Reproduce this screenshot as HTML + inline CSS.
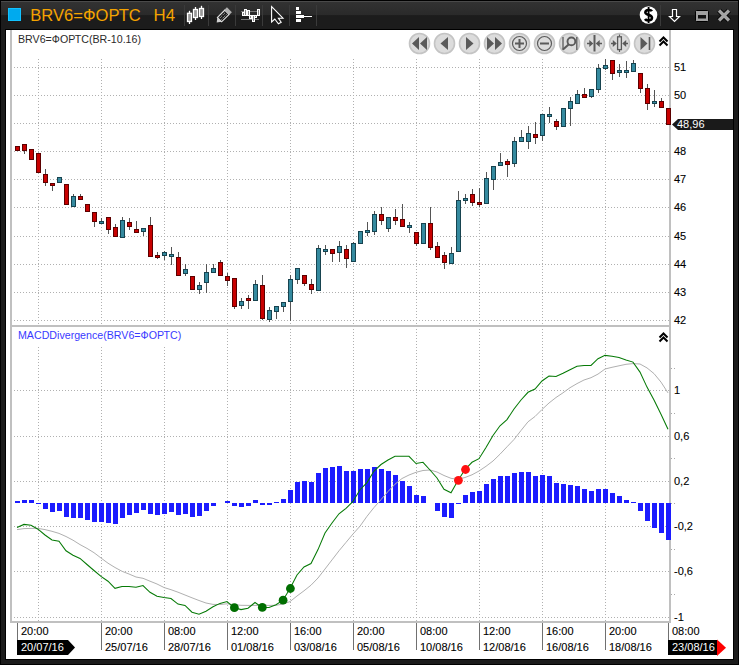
<!DOCTYPE html><html><head><meta charset="utf-8"><style>html,body{margin:0;padding:0;background:#1a1a1a;width:739px;height:665px;overflow:hidden}svg{display:block}text{font-family:"Liberation Sans",sans-serif}</style></head><body>
<svg width="739" height="665" viewBox="0 0 739 665">
<defs><linearGradient id="tg" x1="0" y1="0" x2="0" y2="1"><stop offset="0" stop-color="#333"/><stop offset="0.5" stop-color="#2a2a2a"/><stop offset="0.52" stop-color="#1c1c1c"/><stop offset="1" stop-color="#1c1c1c"/></linearGradient></defs>
<rect x="0" y="0" width="739" height="665" fill="#000"/>
<rect x="1" y="1" width="737" height="663" fill="#1b1b1b"/>
<rect x="1" y="1" width="737" height="28" fill="url(#tg)"/>
<rect x="1" y="1" width="737" height="1" fill="#4a4a4a"/>
<rect x="5" y="29" width="729" height="631" fill="#000"/>
<rect x="6" y="30" width="727" height="629" fill="#fff"/>
<g shape-rendering="crispEdges">
<path d="M11 67h1v1h-1zM14 67h1v1h-1zM17 67h1v1h-1zM20 67h1v1h-1zM23 67h1v1h-1zM26 67h1v1h-1zM29 67h1v1h-1zM32 67h1v1h-1zM35 67h1v1h-1zM38 67h1v1h-1zM41 67h1v1h-1zM44 67h1v1h-1zM47 67h1v1h-1zM50 67h1v1h-1zM53 67h1v1h-1zM56 67h1v1h-1zM59 67h1v1h-1zM62 67h1v1h-1zM65 67h1v1h-1zM68 67h1v1h-1zM71 67h1v1h-1zM74 67h1v1h-1zM77 67h1v1h-1zM80 67h1v1h-1zM83 67h1v1h-1zM86 67h1v1h-1zM89 67h1v1h-1zM92 67h1v1h-1zM95 67h1v1h-1zM98 67h1v1h-1zM101 67h1v1h-1zM104 67h1v1h-1zM107 67h1v1h-1zM110 67h1v1h-1zM113 67h1v1h-1zM116 67h1v1h-1zM119 67h1v1h-1zM122 67h1v1h-1zM125 67h1v1h-1zM128 67h1v1h-1zM131 67h1v1h-1zM134 67h1v1h-1zM137 67h1v1h-1zM140 67h1v1h-1zM143 67h1v1h-1zM146 67h1v1h-1zM149 67h1v1h-1zM152 67h1v1h-1zM155 67h1v1h-1zM158 67h1v1h-1zM161 67h1v1h-1zM164 67h1v1h-1zM167 67h1v1h-1zM170 67h1v1h-1zM173 67h1v1h-1zM176 67h1v1h-1zM179 67h1v1h-1zM182 67h1v1h-1zM185 67h1v1h-1zM188 67h1v1h-1zM191 67h1v1h-1zM194 67h1v1h-1zM197 67h1v1h-1zM200 67h1v1h-1zM203 67h1v1h-1zM206 67h1v1h-1zM209 67h1v1h-1zM212 67h1v1h-1zM215 67h1v1h-1zM218 67h1v1h-1zM221 67h1v1h-1zM224 67h1v1h-1zM227 67h1v1h-1zM230 67h1v1h-1zM233 67h1v1h-1zM236 67h1v1h-1zM239 67h1v1h-1zM242 67h1v1h-1zM245 67h1v1h-1zM248 67h1v1h-1zM251 67h1v1h-1zM254 67h1v1h-1zM257 67h1v1h-1zM260 67h1v1h-1zM263 67h1v1h-1zM266 67h1v1h-1zM269 67h1v1h-1zM272 67h1v1h-1zM275 67h1v1h-1zM278 67h1v1h-1zM281 67h1v1h-1zM284 67h1v1h-1zM287 67h1v1h-1zM290 67h1v1h-1zM293 67h1v1h-1zM296 67h1v1h-1zM299 67h1v1h-1zM302 67h1v1h-1zM305 67h1v1h-1zM308 67h1v1h-1zM311 67h1v1h-1zM314 67h1v1h-1zM317 67h1v1h-1zM320 67h1v1h-1zM323 67h1v1h-1zM326 67h1v1h-1zM329 67h1v1h-1zM332 67h1v1h-1zM335 67h1v1h-1zM338 67h1v1h-1zM341 67h1v1h-1zM344 67h1v1h-1zM347 67h1v1h-1zM350 67h1v1h-1zM353 67h1v1h-1zM356 67h1v1h-1zM359 67h1v1h-1zM362 67h1v1h-1zM365 67h1v1h-1zM368 67h1v1h-1zM371 67h1v1h-1zM374 67h1v1h-1zM377 67h1v1h-1zM380 67h1v1h-1zM383 67h1v1h-1zM386 67h1v1h-1zM389 67h1v1h-1zM392 67h1v1h-1zM395 67h1v1h-1zM398 67h1v1h-1zM401 67h1v1h-1zM404 67h1v1h-1zM407 67h1v1h-1zM410 67h1v1h-1zM413 67h1v1h-1zM416 67h1v1h-1zM419 67h1v1h-1zM422 67h1v1h-1zM425 67h1v1h-1zM428 67h1v1h-1zM431 67h1v1h-1zM434 67h1v1h-1zM437 67h1v1h-1zM440 67h1v1h-1zM443 67h1v1h-1zM446 67h1v1h-1zM449 67h1v1h-1zM452 67h1v1h-1zM455 67h1v1h-1zM458 67h1v1h-1zM461 67h1v1h-1zM464 67h1v1h-1zM467 67h1v1h-1zM470 67h1v1h-1zM473 67h1v1h-1zM476 67h1v1h-1zM479 67h1v1h-1zM482 67h1v1h-1zM485 67h1v1h-1zM488 67h1v1h-1zM491 67h1v1h-1zM494 67h1v1h-1zM497 67h1v1h-1zM500 67h1v1h-1zM503 67h1v1h-1zM506 67h1v1h-1zM509 67h1v1h-1zM512 67h1v1h-1zM515 67h1v1h-1zM518 67h1v1h-1zM521 67h1v1h-1zM524 67h1v1h-1zM527 67h1v1h-1zM530 67h1v1h-1zM533 67h1v1h-1zM536 67h1v1h-1zM539 67h1v1h-1zM542 67h1v1h-1zM545 67h1v1h-1zM548 67h1v1h-1zM551 67h1v1h-1zM554 67h1v1h-1zM557 67h1v1h-1zM560 67h1v1h-1zM563 67h1v1h-1zM566 67h1v1h-1zM569 67h1v1h-1zM572 67h1v1h-1zM575 67h1v1h-1zM578 67h1v1h-1zM581 67h1v1h-1zM584 67h1v1h-1zM587 67h1v1h-1zM590 67h1v1h-1zM593 67h1v1h-1zM596 67h1v1h-1zM599 67h1v1h-1zM602 67h1v1h-1zM605 67h1v1h-1zM608 67h1v1h-1zM611 67h1v1h-1zM614 67h1v1h-1zM617 67h1v1h-1zM620 67h1v1h-1zM623 67h1v1h-1zM626 67h1v1h-1zM629 67h1v1h-1zM632 67h1v1h-1zM635 67h1v1h-1zM638 67h1v1h-1zM641 67h1v1h-1zM644 67h1v1h-1zM647 67h1v1h-1zM650 67h1v1h-1zM653 67h1v1h-1zM656 67h1v1h-1zM659 67h1v1h-1zM662 67h1v1h-1zM665 67h1v1h-1zM668 67h1v1h-1z" fill="#b0b0b0"/>
<path d="M11 95h1v1h-1zM14 95h1v1h-1zM17 95h1v1h-1zM20 95h1v1h-1zM23 95h1v1h-1zM26 95h1v1h-1zM29 95h1v1h-1zM32 95h1v1h-1zM35 95h1v1h-1zM38 95h1v1h-1zM41 95h1v1h-1zM44 95h1v1h-1zM47 95h1v1h-1zM50 95h1v1h-1zM53 95h1v1h-1zM56 95h1v1h-1zM59 95h1v1h-1zM62 95h1v1h-1zM65 95h1v1h-1zM68 95h1v1h-1zM71 95h1v1h-1zM74 95h1v1h-1zM77 95h1v1h-1zM80 95h1v1h-1zM83 95h1v1h-1zM86 95h1v1h-1zM89 95h1v1h-1zM92 95h1v1h-1zM95 95h1v1h-1zM98 95h1v1h-1zM101 95h1v1h-1zM104 95h1v1h-1zM107 95h1v1h-1zM110 95h1v1h-1zM113 95h1v1h-1zM116 95h1v1h-1zM119 95h1v1h-1zM122 95h1v1h-1zM125 95h1v1h-1zM128 95h1v1h-1zM131 95h1v1h-1zM134 95h1v1h-1zM137 95h1v1h-1zM140 95h1v1h-1zM143 95h1v1h-1zM146 95h1v1h-1zM149 95h1v1h-1zM152 95h1v1h-1zM155 95h1v1h-1zM158 95h1v1h-1zM161 95h1v1h-1zM164 95h1v1h-1zM167 95h1v1h-1zM170 95h1v1h-1zM173 95h1v1h-1zM176 95h1v1h-1zM179 95h1v1h-1zM182 95h1v1h-1zM185 95h1v1h-1zM188 95h1v1h-1zM191 95h1v1h-1zM194 95h1v1h-1zM197 95h1v1h-1zM200 95h1v1h-1zM203 95h1v1h-1zM206 95h1v1h-1zM209 95h1v1h-1zM212 95h1v1h-1zM215 95h1v1h-1zM218 95h1v1h-1zM221 95h1v1h-1zM224 95h1v1h-1zM227 95h1v1h-1zM230 95h1v1h-1zM233 95h1v1h-1zM236 95h1v1h-1zM239 95h1v1h-1zM242 95h1v1h-1zM245 95h1v1h-1zM248 95h1v1h-1zM251 95h1v1h-1zM254 95h1v1h-1zM257 95h1v1h-1zM260 95h1v1h-1zM263 95h1v1h-1zM266 95h1v1h-1zM269 95h1v1h-1zM272 95h1v1h-1zM275 95h1v1h-1zM278 95h1v1h-1zM281 95h1v1h-1zM284 95h1v1h-1zM287 95h1v1h-1zM290 95h1v1h-1zM293 95h1v1h-1zM296 95h1v1h-1zM299 95h1v1h-1zM302 95h1v1h-1zM305 95h1v1h-1zM308 95h1v1h-1zM311 95h1v1h-1zM314 95h1v1h-1zM317 95h1v1h-1zM320 95h1v1h-1zM323 95h1v1h-1zM326 95h1v1h-1zM329 95h1v1h-1zM332 95h1v1h-1zM335 95h1v1h-1zM338 95h1v1h-1zM341 95h1v1h-1zM344 95h1v1h-1zM347 95h1v1h-1zM350 95h1v1h-1zM353 95h1v1h-1zM356 95h1v1h-1zM359 95h1v1h-1zM362 95h1v1h-1zM365 95h1v1h-1zM368 95h1v1h-1zM371 95h1v1h-1zM374 95h1v1h-1zM377 95h1v1h-1zM380 95h1v1h-1zM383 95h1v1h-1zM386 95h1v1h-1zM389 95h1v1h-1zM392 95h1v1h-1zM395 95h1v1h-1zM398 95h1v1h-1zM401 95h1v1h-1zM404 95h1v1h-1zM407 95h1v1h-1zM410 95h1v1h-1zM413 95h1v1h-1zM416 95h1v1h-1zM419 95h1v1h-1zM422 95h1v1h-1zM425 95h1v1h-1zM428 95h1v1h-1zM431 95h1v1h-1zM434 95h1v1h-1zM437 95h1v1h-1zM440 95h1v1h-1zM443 95h1v1h-1zM446 95h1v1h-1zM449 95h1v1h-1zM452 95h1v1h-1zM455 95h1v1h-1zM458 95h1v1h-1zM461 95h1v1h-1zM464 95h1v1h-1zM467 95h1v1h-1zM470 95h1v1h-1zM473 95h1v1h-1zM476 95h1v1h-1zM479 95h1v1h-1zM482 95h1v1h-1zM485 95h1v1h-1zM488 95h1v1h-1zM491 95h1v1h-1zM494 95h1v1h-1zM497 95h1v1h-1zM500 95h1v1h-1zM503 95h1v1h-1zM506 95h1v1h-1zM509 95h1v1h-1zM512 95h1v1h-1zM515 95h1v1h-1zM518 95h1v1h-1zM521 95h1v1h-1zM524 95h1v1h-1zM527 95h1v1h-1zM530 95h1v1h-1zM533 95h1v1h-1zM536 95h1v1h-1zM539 95h1v1h-1zM542 95h1v1h-1zM545 95h1v1h-1zM548 95h1v1h-1zM551 95h1v1h-1zM554 95h1v1h-1zM557 95h1v1h-1zM560 95h1v1h-1zM563 95h1v1h-1zM566 95h1v1h-1zM569 95h1v1h-1zM572 95h1v1h-1zM575 95h1v1h-1zM578 95h1v1h-1zM581 95h1v1h-1zM584 95h1v1h-1zM587 95h1v1h-1zM590 95h1v1h-1zM593 95h1v1h-1zM596 95h1v1h-1zM599 95h1v1h-1zM602 95h1v1h-1zM605 95h1v1h-1zM608 95h1v1h-1zM611 95h1v1h-1zM614 95h1v1h-1zM617 95h1v1h-1zM620 95h1v1h-1zM623 95h1v1h-1zM626 95h1v1h-1zM629 95h1v1h-1zM632 95h1v1h-1zM635 95h1v1h-1zM638 95h1v1h-1zM641 95h1v1h-1zM644 95h1v1h-1zM647 95h1v1h-1zM650 95h1v1h-1zM653 95h1v1h-1zM656 95h1v1h-1zM659 95h1v1h-1zM662 95h1v1h-1zM665 95h1v1h-1zM668 95h1v1h-1z" fill="#b0b0b0"/>
<path d="M11 123h1v1h-1zM14 123h1v1h-1zM17 123h1v1h-1zM20 123h1v1h-1zM23 123h1v1h-1zM26 123h1v1h-1zM29 123h1v1h-1zM32 123h1v1h-1zM35 123h1v1h-1zM38 123h1v1h-1zM41 123h1v1h-1zM44 123h1v1h-1zM47 123h1v1h-1zM50 123h1v1h-1zM53 123h1v1h-1zM56 123h1v1h-1zM59 123h1v1h-1zM62 123h1v1h-1zM65 123h1v1h-1zM68 123h1v1h-1zM71 123h1v1h-1zM74 123h1v1h-1zM77 123h1v1h-1zM80 123h1v1h-1zM83 123h1v1h-1zM86 123h1v1h-1zM89 123h1v1h-1zM92 123h1v1h-1zM95 123h1v1h-1zM98 123h1v1h-1zM101 123h1v1h-1zM104 123h1v1h-1zM107 123h1v1h-1zM110 123h1v1h-1zM113 123h1v1h-1zM116 123h1v1h-1zM119 123h1v1h-1zM122 123h1v1h-1zM125 123h1v1h-1zM128 123h1v1h-1zM131 123h1v1h-1zM134 123h1v1h-1zM137 123h1v1h-1zM140 123h1v1h-1zM143 123h1v1h-1zM146 123h1v1h-1zM149 123h1v1h-1zM152 123h1v1h-1zM155 123h1v1h-1zM158 123h1v1h-1zM161 123h1v1h-1zM164 123h1v1h-1zM167 123h1v1h-1zM170 123h1v1h-1zM173 123h1v1h-1zM176 123h1v1h-1zM179 123h1v1h-1zM182 123h1v1h-1zM185 123h1v1h-1zM188 123h1v1h-1zM191 123h1v1h-1zM194 123h1v1h-1zM197 123h1v1h-1zM200 123h1v1h-1zM203 123h1v1h-1zM206 123h1v1h-1zM209 123h1v1h-1zM212 123h1v1h-1zM215 123h1v1h-1zM218 123h1v1h-1zM221 123h1v1h-1zM224 123h1v1h-1zM227 123h1v1h-1zM230 123h1v1h-1zM233 123h1v1h-1zM236 123h1v1h-1zM239 123h1v1h-1zM242 123h1v1h-1zM245 123h1v1h-1zM248 123h1v1h-1zM251 123h1v1h-1zM254 123h1v1h-1zM257 123h1v1h-1zM260 123h1v1h-1zM263 123h1v1h-1zM266 123h1v1h-1zM269 123h1v1h-1zM272 123h1v1h-1zM275 123h1v1h-1zM278 123h1v1h-1zM281 123h1v1h-1zM284 123h1v1h-1zM287 123h1v1h-1zM290 123h1v1h-1zM293 123h1v1h-1zM296 123h1v1h-1zM299 123h1v1h-1zM302 123h1v1h-1zM305 123h1v1h-1zM308 123h1v1h-1zM311 123h1v1h-1zM314 123h1v1h-1zM317 123h1v1h-1zM320 123h1v1h-1zM323 123h1v1h-1zM326 123h1v1h-1zM329 123h1v1h-1zM332 123h1v1h-1zM335 123h1v1h-1zM338 123h1v1h-1zM341 123h1v1h-1zM344 123h1v1h-1zM347 123h1v1h-1zM350 123h1v1h-1zM353 123h1v1h-1zM356 123h1v1h-1zM359 123h1v1h-1zM362 123h1v1h-1zM365 123h1v1h-1zM368 123h1v1h-1zM371 123h1v1h-1zM374 123h1v1h-1zM377 123h1v1h-1zM380 123h1v1h-1zM383 123h1v1h-1zM386 123h1v1h-1zM389 123h1v1h-1zM392 123h1v1h-1zM395 123h1v1h-1zM398 123h1v1h-1zM401 123h1v1h-1zM404 123h1v1h-1zM407 123h1v1h-1zM410 123h1v1h-1zM413 123h1v1h-1zM416 123h1v1h-1zM419 123h1v1h-1zM422 123h1v1h-1zM425 123h1v1h-1zM428 123h1v1h-1zM431 123h1v1h-1zM434 123h1v1h-1zM437 123h1v1h-1zM440 123h1v1h-1zM443 123h1v1h-1zM446 123h1v1h-1zM449 123h1v1h-1zM452 123h1v1h-1zM455 123h1v1h-1zM458 123h1v1h-1zM461 123h1v1h-1zM464 123h1v1h-1zM467 123h1v1h-1zM470 123h1v1h-1zM473 123h1v1h-1zM476 123h1v1h-1zM479 123h1v1h-1zM482 123h1v1h-1zM485 123h1v1h-1zM488 123h1v1h-1zM491 123h1v1h-1zM494 123h1v1h-1zM497 123h1v1h-1zM500 123h1v1h-1zM503 123h1v1h-1zM506 123h1v1h-1zM509 123h1v1h-1zM512 123h1v1h-1zM515 123h1v1h-1zM518 123h1v1h-1zM521 123h1v1h-1zM524 123h1v1h-1zM527 123h1v1h-1zM530 123h1v1h-1zM533 123h1v1h-1zM536 123h1v1h-1zM539 123h1v1h-1zM542 123h1v1h-1zM545 123h1v1h-1zM548 123h1v1h-1zM551 123h1v1h-1zM554 123h1v1h-1zM557 123h1v1h-1zM560 123h1v1h-1zM563 123h1v1h-1zM566 123h1v1h-1zM569 123h1v1h-1zM572 123h1v1h-1zM575 123h1v1h-1zM578 123h1v1h-1zM581 123h1v1h-1zM584 123h1v1h-1zM587 123h1v1h-1zM590 123h1v1h-1zM593 123h1v1h-1zM596 123h1v1h-1zM599 123h1v1h-1zM602 123h1v1h-1zM605 123h1v1h-1zM608 123h1v1h-1zM611 123h1v1h-1zM614 123h1v1h-1zM617 123h1v1h-1zM620 123h1v1h-1zM623 123h1v1h-1zM626 123h1v1h-1zM629 123h1v1h-1zM632 123h1v1h-1zM635 123h1v1h-1zM638 123h1v1h-1zM641 123h1v1h-1zM644 123h1v1h-1zM647 123h1v1h-1zM650 123h1v1h-1zM653 123h1v1h-1zM656 123h1v1h-1zM659 123h1v1h-1zM662 123h1v1h-1zM665 123h1v1h-1zM668 123h1v1h-1z" fill="#b0b0b0"/>
<path d="M11 151h1v1h-1zM14 151h1v1h-1zM17 151h1v1h-1zM20 151h1v1h-1zM23 151h1v1h-1zM26 151h1v1h-1zM29 151h1v1h-1zM32 151h1v1h-1zM35 151h1v1h-1zM38 151h1v1h-1zM41 151h1v1h-1zM44 151h1v1h-1zM47 151h1v1h-1zM50 151h1v1h-1zM53 151h1v1h-1zM56 151h1v1h-1zM59 151h1v1h-1zM62 151h1v1h-1zM65 151h1v1h-1zM68 151h1v1h-1zM71 151h1v1h-1zM74 151h1v1h-1zM77 151h1v1h-1zM80 151h1v1h-1zM83 151h1v1h-1zM86 151h1v1h-1zM89 151h1v1h-1zM92 151h1v1h-1zM95 151h1v1h-1zM98 151h1v1h-1zM101 151h1v1h-1zM104 151h1v1h-1zM107 151h1v1h-1zM110 151h1v1h-1zM113 151h1v1h-1zM116 151h1v1h-1zM119 151h1v1h-1zM122 151h1v1h-1zM125 151h1v1h-1zM128 151h1v1h-1zM131 151h1v1h-1zM134 151h1v1h-1zM137 151h1v1h-1zM140 151h1v1h-1zM143 151h1v1h-1zM146 151h1v1h-1zM149 151h1v1h-1zM152 151h1v1h-1zM155 151h1v1h-1zM158 151h1v1h-1zM161 151h1v1h-1zM164 151h1v1h-1zM167 151h1v1h-1zM170 151h1v1h-1zM173 151h1v1h-1zM176 151h1v1h-1zM179 151h1v1h-1zM182 151h1v1h-1zM185 151h1v1h-1zM188 151h1v1h-1zM191 151h1v1h-1zM194 151h1v1h-1zM197 151h1v1h-1zM200 151h1v1h-1zM203 151h1v1h-1zM206 151h1v1h-1zM209 151h1v1h-1zM212 151h1v1h-1zM215 151h1v1h-1zM218 151h1v1h-1zM221 151h1v1h-1zM224 151h1v1h-1zM227 151h1v1h-1zM230 151h1v1h-1zM233 151h1v1h-1zM236 151h1v1h-1zM239 151h1v1h-1zM242 151h1v1h-1zM245 151h1v1h-1zM248 151h1v1h-1zM251 151h1v1h-1zM254 151h1v1h-1zM257 151h1v1h-1zM260 151h1v1h-1zM263 151h1v1h-1zM266 151h1v1h-1zM269 151h1v1h-1zM272 151h1v1h-1zM275 151h1v1h-1zM278 151h1v1h-1zM281 151h1v1h-1zM284 151h1v1h-1zM287 151h1v1h-1zM290 151h1v1h-1zM293 151h1v1h-1zM296 151h1v1h-1zM299 151h1v1h-1zM302 151h1v1h-1zM305 151h1v1h-1zM308 151h1v1h-1zM311 151h1v1h-1zM314 151h1v1h-1zM317 151h1v1h-1zM320 151h1v1h-1zM323 151h1v1h-1zM326 151h1v1h-1zM329 151h1v1h-1zM332 151h1v1h-1zM335 151h1v1h-1zM338 151h1v1h-1zM341 151h1v1h-1zM344 151h1v1h-1zM347 151h1v1h-1zM350 151h1v1h-1zM353 151h1v1h-1zM356 151h1v1h-1zM359 151h1v1h-1zM362 151h1v1h-1zM365 151h1v1h-1zM368 151h1v1h-1zM371 151h1v1h-1zM374 151h1v1h-1zM377 151h1v1h-1zM380 151h1v1h-1zM383 151h1v1h-1zM386 151h1v1h-1zM389 151h1v1h-1zM392 151h1v1h-1zM395 151h1v1h-1zM398 151h1v1h-1zM401 151h1v1h-1zM404 151h1v1h-1zM407 151h1v1h-1zM410 151h1v1h-1zM413 151h1v1h-1zM416 151h1v1h-1zM419 151h1v1h-1zM422 151h1v1h-1zM425 151h1v1h-1zM428 151h1v1h-1zM431 151h1v1h-1zM434 151h1v1h-1zM437 151h1v1h-1zM440 151h1v1h-1zM443 151h1v1h-1zM446 151h1v1h-1zM449 151h1v1h-1zM452 151h1v1h-1zM455 151h1v1h-1zM458 151h1v1h-1zM461 151h1v1h-1zM464 151h1v1h-1zM467 151h1v1h-1zM470 151h1v1h-1zM473 151h1v1h-1zM476 151h1v1h-1zM479 151h1v1h-1zM482 151h1v1h-1zM485 151h1v1h-1zM488 151h1v1h-1zM491 151h1v1h-1zM494 151h1v1h-1zM497 151h1v1h-1zM500 151h1v1h-1zM503 151h1v1h-1zM506 151h1v1h-1zM509 151h1v1h-1zM512 151h1v1h-1zM515 151h1v1h-1zM518 151h1v1h-1zM521 151h1v1h-1zM524 151h1v1h-1zM527 151h1v1h-1zM530 151h1v1h-1zM533 151h1v1h-1zM536 151h1v1h-1zM539 151h1v1h-1zM542 151h1v1h-1zM545 151h1v1h-1zM548 151h1v1h-1zM551 151h1v1h-1zM554 151h1v1h-1zM557 151h1v1h-1zM560 151h1v1h-1zM563 151h1v1h-1zM566 151h1v1h-1zM569 151h1v1h-1zM572 151h1v1h-1zM575 151h1v1h-1zM578 151h1v1h-1zM581 151h1v1h-1zM584 151h1v1h-1zM587 151h1v1h-1zM590 151h1v1h-1zM593 151h1v1h-1zM596 151h1v1h-1zM599 151h1v1h-1zM602 151h1v1h-1zM605 151h1v1h-1zM608 151h1v1h-1zM611 151h1v1h-1zM614 151h1v1h-1zM617 151h1v1h-1zM620 151h1v1h-1zM623 151h1v1h-1zM626 151h1v1h-1zM629 151h1v1h-1zM632 151h1v1h-1zM635 151h1v1h-1zM638 151h1v1h-1zM641 151h1v1h-1zM644 151h1v1h-1zM647 151h1v1h-1zM650 151h1v1h-1zM653 151h1v1h-1zM656 151h1v1h-1zM659 151h1v1h-1zM662 151h1v1h-1zM665 151h1v1h-1zM668 151h1v1h-1z" fill="#b0b0b0"/>
<path d="M11 179h1v1h-1zM14 179h1v1h-1zM17 179h1v1h-1zM20 179h1v1h-1zM23 179h1v1h-1zM26 179h1v1h-1zM29 179h1v1h-1zM32 179h1v1h-1zM35 179h1v1h-1zM38 179h1v1h-1zM41 179h1v1h-1zM44 179h1v1h-1zM47 179h1v1h-1zM50 179h1v1h-1zM53 179h1v1h-1zM56 179h1v1h-1zM59 179h1v1h-1zM62 179h1v1h-1zM65 179h1v1h-1zM68 179h1v1h-1zM71 179h1v1h-1zM74 179h1v1h-1zM77 179h1v1h-1zM80 179h1v1h-1zM83 179h1v1h-1zM86 179h1v1h-1zM89 179h1v1h-1zM92 179h1v1h-1zM95 179h1v1h-1zM98 179h1v1h-1zM101 179h1v1h-1zM104 179h1v1h-1zM107 179h1v1h-1zM110 179h1v1h-1zM113 179h1v1h-1zM116 179h1v1h-1zM119 179h1v1h-1zM122 179h1v1h-1zM125 179h1v1h-1zM128 179h1v1h-1zM131 179h1v1h-1zM134 179h1v1h-1zM137 179h1v1h-1zM140 179h1v1h-1zM143 179h1v1h-1zM146 179h1v1h-1zM149 179h1v1h-1zM152 179h1v1h-1zM155 179h1v1h-1zM158 179h1v1h-1zM161 179h1v1h-1zM164 179h1v1h-1zM167 179h1v1h-1zM170 179h1v1h-1zM173 179h1v1h-1zM176 179h1v1h-1zM179 179h1v1h-1zM182 179h1v1h-1zM185 179h1v1h-1zM188 179h1v1h-1zM191 179h1v1h-1zM194 179h1v1h-1zM197 179h1v1h-1zM200 179h1v1h-1zM203 179h1v1h-1zM206 179h1v1h-1zM209 179h1v1h-1zM212 179h1v1h-1zM215 179h1v1h-1zM218 179h1v1h-1zM221 179h1v1h-1zM224 179h1v1h-1zM227 179h1v1h-1zM230 179h1v1h-1zM233 179h1v1h-1zM236 179h1v1h-1zM239 179h1v1h-1zM242 179h1v1h-1zM245 179h1v1h-1zM248 179h1v1h-1zM251 179h1v1h-1zM254 179h1v1h-1zM257 179h1v1h-1zM260 179h1v1h-1zM263 179h1v1h-1zM266 179h1v1h-1zM269 179h1v1h-1zM272 179h1v1h-1zM275 179h1v1h-1zM278 179h1v1h-1zM281 179h1v1h-1zM284 179h1v1h-1zM287 179h1v1h-1zM290 179h1v1h-1zM293 179h1v1h-1zM296 179h1v1h-1zM299 179h1v1h-1zM302 179h1v1h-1zM305 179h1v1h-1zM308 179h1v1h-1zM311 179h1v1h-1zM314 179h1v1h-1zM317 179h1v1h-1zM320 179h1v1h-1zM323 179h1v1h-1zM326 179h1v1h-1zM329 179h1v1h-1zM332 179h1v1h-1zM335 179h1v1h-1zM338 179h1v1h-1zM341 179h1v1h-1zM344 179h1v1h-1zM347 179h1v1h-1zM350 179h1v1h-1zM353 179h1v1h-1zM356 179h1v1h-1zM359 179h1v1h-1zM362 179h1v1h-1zM365 179h1v1h-1zM368 179h1v1h-1zM371 179h1v1h-1zM374 179h1v1h-1zM377 179h1v1h-1zM380 179h1v1h-1zM383 179h1v1h-1zM386 179h1v1h-1zM389 179h1v1h-1zM392 179h1v1h-1zM395 179h1v1h-1zM398 179h1v1h-1zM401 179h1v1h-1zM404 179h1v1h-1zM407 179h1v1h-1zM410 179h1v1h-1zM413 179h1v1h-1zM416 179h1v1h-1zM419 179h1v1h-1zM422 179h1v1h-1zM425 179h1v1h-1zM428 179h1v1h-1zM431 179h1v1h-1zM434 179h1v1h-1zM437 179h1v1h-1zM440 179h1v1h-1zM443 179h1v1h-1zM446 179h1v1h-1zM449 179h1v1h-1zM452 179h1v1h-1zM455 179h1v1h-1zM458 179h1v1h-1zM461 179h1v1h-1zM464 179h1v1h-1zM467 179h1v1h-1zM470 179h1v1h-1zM473 179h1v1h-1zM476 179h1v1h-1zM479 179h1v1h-1zM482 179h1v1h-1zM485 179h1v1h-1zM488 179h1v1h-1zM491 179h1v1h-1zM494 179h1v1h-1zM497 179h1v1h-1zM500 179h1v1h-1zM503 179h1v1h-1zM506 179h1v1h-1zM509 179h1v1h-1zM512 179h1v1h-1zM515 179h1v1h-1zM518 179h1v1h-1zM521 179h1v1h-1zM524 179h1v1h-1zM527 179h1v1h-1zM530 179h1v1h-1zM533 179h1v1h-1zM536 179h1v1h-1zM539 179h1v1h-1zM542 179h1v1h-1zM545 179h1v1h-1zM548 179h1v1h-1zM551 179h1v1h-1zM554 179h1v1h-1zM557 179h1v1h-1zM560 179h1v1h-1zM563 179h1v1h-1zM566 179h1v1h-1zM569 179h1v1h-1zM572 179h1v1h-1zM575 179h1v1h-1zM578 179h1v1h-1zM581 179h1v1h-1zM584 179h1v1h-1zM587 179h1v1h-1zM590 179h1v1h-1zM593 179h1v1h-1zM596 179h1v1h-1zM599 179h1v1h-1zM602 179h1v1h-1zM605 179h1v1h-1zM608 179h1v1h-1zM611 179h1v1h-1zM614 179h1v1h-1zM617 179h1v1h-1zM620 179h1v1h-1zM623 179h1v1h-1zM626 179h1v1h-1zM629 179h1v1h-1zM632 179h1v1h-1zM635 179h1v1h-1zM638 179h1v1h-1zM641 179h1v1h-1zM644 179h1v1h-1zM647 179h1v1h-1zM650 179h1v1h-1zM653 179h1v1h-1zM656 179h1v1h-1zM659 179h1v1h-1zM662 179h1v1h-1zM665 179h1v1h-1zM668 179h1v1h-1z" fill="#b0b0b0"/>
<path d="M11 207h1v1h-1zM14 207h1v1h-1zM17 207h1v1h-1zM20 207h1v1h-1zM23 207h1v1h-1zM26 207h1v1h-1zM29 207h1v1h-1zM32 207h1v1h-1zM35 207h1v1h-1zM38 207h1v1h-1zM41 207h1v1h-1zM44 207h1v1h-1zM47 207h1v1h-1zM50 207h1v1h-1zM53 207h1v1h-1zM56 207h1v1h-1zM59 207h1v1h-1zM62 207h1v1h-1zM65 207h1v1h-1zM68 207h1v1h-1zM71 207h1v1h-1zM74 207h1v1h-1zM77 207h1v1h-1zM80 207h1v1h-1zM83 207h1v1h-1zM86 207h1v1h-1zM89 207h1v1h-1zM92 207h1v1h-1zM95 207h1v1h-1zM98 207h1v1h-1zM101 207h1v1h-1zM104 207h1v1h-1zM107 207h1v1h-1zM110 207h1v1h-1zM113 207h1v1h-1zM116 207h1v1h-1zM119 207h1v1h-1zM122 207h1v1h-1zM125 207h1v1h-1zM128 207h1v1h-1zM131 207h1v1h-1zM134 207h1v1h-1zM137 207h1v1h-1zM140 207h1v1h-1zM143 207h1v1h-1zM146 207h1v1h-1zM149 207h1v1h-1zM152 207h1v1h-1zM155 207h1v1h-1zM158 207h1v1h-1zM161 207h1v1h-1zM164 207h1v1h-1zM167 207h1v1h-1zM170 207h1v1h-1zM173 207h1v1h-1zM176 207h1v1h-1zM179 207h1v1h-1zM182 207h1v1h-1zM185 207h1v1h-1zM188 207h1v1h-1zM191 207h1v1h-1zM194 207h1v1h-1zM197 207h1v1h-1zM200 207h1v1h-1zM203 207h1v1h-1zM206 207h1v1h-1zM209 207h1v1h-1zM212 207h1v1h-1zM215 207h1v1h-1zM218 207h1v1h-1zM221 207h1v1h-1zM224 207h1v1h-1zM227 207h1v1h-1zM230 207h1v1h-1zM233 207h1v1h-1zM236 207h1v1h-1zM239 207h1v1h-1zM242 207h1v1h-1zM245 207h1v1h-1zM248 207h1v1h-1zM251 207h1v1h-1zM254 207h1v1h-1zM257 207h1v1h-1zM260 207h1v1h-1zM263 207h1v1h-1zM266 207h1v1h-1zM269 207h1v1h-1zM272 207h1v1h-1zM275 207h1v1h-1zM278 207h1v1h-1zM281 207h1v1h-1zM284 207h1v1h-1zM287 207h1v1h-1zM290 207h1v1h-1zM293 207h1v1h-1zM296 207h1v1h-1zM299 207h1v1h-1zM302 207h1v1h-1zM305 207h1v1h-1zM308 207h1v1h-1zM311 207h1v1h-1zM314 207h1v1h-1zM317 207h1v1h-1zM320 207h1v1h-1zM323 207h1v1h-1zM326 207h1v1h-1zM329 207h1v1h-1zM332 207h1v1h-1zM335 207h1v1h-1zM338 207h1v1h-1zM341 207h1v1h-1zM344 207h1v1h-1zM347 207h1v1h-1zM350 207h1v1h-1zM353 207h1v1h-1zM356 207h1v1h-1zM359 207h1v1h-1zM362 207h1v1h-1zM365 207h1v1h-1zM368 207h1v1h-1zM371 207h1v1h-1zM374 207h1v1h-1zM377 207h1v1h-1zM380 207h1v1h-1zM383 207h1v1h-1zM386 207h1v1h-1zM389 207h1v1h-1zM392 207h1v1h-1zM395 207h1v1h-1zM398 207h1v1h-1zM401 207h1v1h-1zM404 207h1v1h-1zM407 207h1v1h-1zM410 207h1v1h-1zM413 207h1v1h-1zM416 207h1v1h-1zM419 207h1v1h-1zM422 207h1v1h-1zM425 207h1v1h-1zM428 207h1v1h-1zM431 207h1v1h-1zM434 207h1v1h-1zM437 207h1v1h-1zM440 207h1v1h-1zM443 207h1v1h-1zM446 207h1v1h-1zM449 207h1v1h-1zM452 207h1v1h-1zM455 207h1v1h-1zM458 207h1v1h-1zM461 207h1v1h-1zM464 207h1v1h-1zM467 207h1v1h-1zM470 207h1v1h-1zM473 207h1v1h-1zM476 207h1v1h-1zM479 207h1v1h-1zM482 207h1v1h-1zM485 207h1v1h-1zM488 207h1v1h-1zM491 207h1v1h-1zM494 207h1v1h-1zM497 207h1v1h-1zM500 207h1v1h-1zM503 207h1v1h-1zM506 207h1v1h-1zM509 207h1v1h-1zM512 207h1v1h-1zM515 207h1v1h-1zM518 207h1v1h-1zM521 207h1v1h-1zM524 207h1v1h-1zM527 207h1v1h-1zM530 207h1v1h-1zM533 207h1v1h-1zM536 207h1v1h-1zM539 207h1v1h-1zM542 207h1v1h-1zM545 207h1v1h-1zM548 207h1v1h-1zM551 207h1v1h-1zM554 207h1v1h-1zM557 207h1v1h-1zM560 207h1v1h-1zM563 207h1v1h-1zM566 207h1v1h-1zM569 207h1v1h-1zM572 207h1v1h-1zM575 207h1v1h-1zM578 207h1v1h-1zM581 207h1v1h-1zM584 207h1v1h-1zM587 207h1v1h-1zM590 207h1v1h-1zM593 207h1v1h-1zM596 207h1v1h-1zM599 207h1v1h-1zM602 207h1v1h-1zM605 207h1v1h-1zM608 207h1v1h-1zM611 207h1v1h-1zM614 207h1v1h-1zM617 207h1v1h-1zM620 207h1v1h-1zM623 207h1v1h-1zM626 207h1v1h-1zM629 207h1v1h-1zM632 207h1v1h-1zM635 207h1v1h-1zM638 207h1v1h-1zM641 207h1v1h-1zM644 207h1v1h-1zM647 207h1v1h-1zM650 207h1v1h-1zM653 207h1v1h-1zM656 207h1v1h-1zM659 207h1v1h-1zM662 207h1v1h-1zM665 207h1v1h-1zM668 207h1v1h-1z" fill="#b0b0b0"/>
<path d="M11 236h1v1h-1zM14 236h1v1h-1zM17 236h1v1h-1zM20 236h1v1h-1zM23 236h1v1h-1zM26 236h1v1h-1zM29 236h1v1h-1zM32 236h1v1h-1zM35 236h1v1h-1zM38 236h1v1h-1zM41 236h1v1h-1zM44 236h1v1h-1zM47 236h1v1h-1zM50 236h1v1h-1zM53 236h1v1h-1zM56 236h1v1h-1zM59 236h1v1h-1zM62 236h1v1h-1zM65 236h1v1h-1zM68 236h1v1h-1zM71 236h1v1h-1zM74 236h1v1h-1zM77 236h1v1h-1zM80 236h1v1h-1zM83 236h1v1h-1zM86 236h1v1h-1zM89 236h1v1h-1zM92 236h1v1h-1zM95 236h1v1h-1zM98 236h1v1h-1zM101 236h1v1h-1zM104 236h1v1h-1zM107 236h1v1h-1zM110 236h1v1h-1zM113 236h1v1h-1zM116 236h1v1h-1zM119 236h1v1h-1zM122 236h1v1h-1zM125 236h1v1h-1zM128 236h1v1h-1zM131 236h1v1h-1zM134 236h1v1h-1zM137 236h1v1h-1zM140 236h1v1h-1zM143 236h1v1h-1zM146 236h1v1h-1zM149 236h1v1h-1zM152 236h1v1h-1zM155 236h1v1h-1zM158 236h1v1h-1zM161 236h1v1h-1zM164 236h1v1h-1zM167 236h1v1h-1zM170 236h1v1h-1zM173 236h1v1h-1zM176 236h1v1h-1zM179 236h1v1h-1zM182 236h1v1h-1zM185 236h1v1h-1zM188 236h1v1h-1zM191 236h1v1h-1zM194 236h1v1h-1zM197 236h1v1h-1zM200 236h1v1h-1zM203 236h1v1h-1zM206 236h1v1h-1zM209 236h1v1h-1zM212 236h1v1h-1zM215 236h1v1h-1zM218 236h1v1h-1zM221 236h1v1h-1zM224 236h1v1h-1zM227 236h1v1h-1zM230 236h1v1h-1zM233 236h1v1h-1zM236 236h1v1h-1zM239 236h1v1h-1zM242 236h1v1h-1zM245 236h1v1h-1zM248 236h1v1h-1zM251 236h1v1h-1zM254 236h1v1h-1zM257 236h1v1h-1zM260 236h1v1h-1zM263 236h1v1h-1zM266 236h1v1h-1zM269 236h1v1h-1zM272 236h1v1h-1zM275 236h1v1h-1zM278 236h1v1h-1zM281 236h1v1h-1zM284 236h1v1h-1zM287 236h1v1h-1zM290 236h1v1h-1zM293 236h1v1h-1zM296 236h1v1h-1zM299 236h1v1h-1zM302 236h1v1h-1zM305 236h1v1h-1zM308 236h1v1h-1zM311 236h1v1h-1zM314 236h1v1h-1zM317 236h1v1h-1zM320 236h1v1h-1zM323 236h1v1h-1zM326 236h1v1h-1zM329 236h1v1h-1zM332 236h1v1h-1zM335 236h1v1h-1zM338 236h1v1h-1zM341 236h1v1h-1zM344 236h1v1h-1zM347 236h1v1h-1zM350 236h1v1h-1zM353 236h1v1h-1zM356 236h1v1h-1zM359 236h1v1h-1zM362 236h1v1h-1zM365 236h1v1h-1zM368 236h1v1h-1zM371 236h1v1h-1zM374 236h1v1h-1zM377 236h1v1h-1zM380 236h1v1h-1zM383 236h1v1h-1zM386 236h1v1h-1zM389 236h1v1h-1zM392 236h1v1h-1zM395 236h1v1h-1zM398 236h1v1h-1zM401 236h1v1h-1zM404 236h1v1h-1zM407 236h1v1h-1zM410 236h1v1h-1zM413 236h1v1h-1zM416 236h1v1h-1zM419 236h1v1h-1zM422 236h1v1h-1zM425 236h1v1h-1zM428 236h1v1h-1zM431 236h1v1h-1zM434 236h1v1h-1zM437 236h1v1h-1zM440 236h1v1h-1zM443 236h1v1h-1zM446 236h1v1h-1zM449 236h1v1h-1zM452 236h1v1h-1zM455 236h1v1h-1zM458 236h1v1h-1zM461 236h1v1h-1zM464 236h1v1h-1zM467 236h1v1h-1zM470 236h1v1h-1zM473 236h1v1h-1zM476 236h1v1h-1zM479 236h1v1h-1zM482 236h1v1h-1zM485 236h1v1h-1zM488 236h1v1h-1zM491 236h1v1h-1zM494 236h1v1h-1zM497 236h1v1h-1zM500 236h1v1h-1zM503 236h1v1h-1zM506 236h1v1h-1zM509 236h1v1h-1zM512 236h1v1h-1zM515 236h1v1h-1zM518 236h1v1h-1zM521 236h1v1h-1zM524 236h1v1h-1zM527 236h1v1h-1zM530 236h1v1h-1zM533 236h1v1h-1zM536 236h1v1h-1zM539 236h1v1h-1zM542 236h1v1h-1zM545 236h1v1h-1zM548 236h1v1h-1zM551 236h1v1h-1zM554 236h1v1h-1zM557 236h1v1h-1zM560 236h1v1h-1zM563 236h1v1h-1zM566 236h1v1h-1zM569 236h1v1h-1zM572 236h1v1h-1zM575 236h1v1h-1zM578 236h1v1h-1zM581 236h1v1h-1zM584 236h1v1h-1zM587 236h1v1h-1zM590 236h1v1h-1zM593 236h1v1h-1zM596 236h1v1h-1zM599 236h1v1h-1zM602 236h1v1h-1zM605 236h1v1h-1zM608 236h1v1h-1zM611 236h1v1h-1zM614 236h1v1h-1zM617 236h1v1h-1zM620 236h1v1h-1zM623 236h1v1h-1zM626 236h1v1h-1zM629 236h1v1h-1zM632 236h1v1h-1zM635 236h1v1h-1zM638 236h1v1h-1zM641 236h1v1h-1zM644 236h1v1h-1zM647 236h1v1h-1zM650 236h1v1h-1zM653 236h1v1h-1zM656 236h1v1h-1zM659 236h1v1h-1zM662 236h1v1h-1zM665 236h1v1h-1zM668 236h1v1h-1z" fill="#b0b0b0"/>
<path d="M11 264h1v1h-1zM14 264h1v1h-1zM17 264h1v1h-1zM20 264h1v1h-1zM23 264h1v1h-1zM26 264h1v1h-1zM29 264h1v1h-1zM32 264h1v1h-1zM35 264h1v1h-1zM38 264h1v1h-1zM41 264h1v1h-1zM44 264h1v1h-1zM47 264h1v1h-1zM50 264h1v1h-1zM53 264h1v1h-1zM56 264h1v1h-1zM59 264h1v1h-1zM62 264h1v1h-1zM65 264h1v1h-1zM68 264h1v1h-1zM71 264h1v1h-1zM74 264h1v1h-1zM77 264h1v1h-1zM80 264h1v1h-1zM83 264h1v1h-1zM86 264h1v1h-1zM89 264h1v1h-1zM92 264h1v1h-1zM95 264h1v1h-1zM98 264h1v1h-1zM101 264h1v1h-1zM104 264h1v1h-1zM107 264h1v1h-1zM110 264h1v1h-1zM113 264h1v1h-1zM116 264h1v1h-1zM119 264h1v1h-1zM122 264h1v1h-1zM125 264h1v1h-1zM128 264h1v1h-1zM131 264h1v1h-1zM134 264h1v1h-1zM137 264h1v1h-1zM140 264h1v1h-1zM143 264h1v1h-1zM146 264h1v1h-1zM149 264h1v1h-1zM152 264h1v1h-1zM155 264h1v1h-1zM158 264h1v1h-1zM161 264h1v1h-1zM164 264h1v1h-1zM167 264h1v1h-1zM170 264h1v1h-1zM173 264h1v1h-1zM176 264h1v1h-1zM179 264h1v1h-1zM182 264h1v1h-1zM185 264h1v1h-1zM188 264h1v1h-1zM191 264h1v1h-1zM194 264h1v1h-1zM197 264h1v1h-1zM200 264h1v1h-1zM203 264h1v1h-1zM206 264h1v1h-1zM209 264h1v1h-1zM212 264h1v1h-1zM215 264h1v1h-1zM218 264h1v1h-1zM221 264h1v1h-1zM224 264h1v1h-1zM227 264h1v1h-1zM230 264h1v1h-1zM233 264h1v1h-1zM236 264h1v1h-1zM239 264h1v1h-1zM242 264h1v1h-1zM245 264h1v1h-1zM248 264h1v1h-1zM251 264h1v1h-1zM254 264h1v1h-1zM257 264h1v1h-1zM260 264h1v1h-1zM263 264h1v1h-1zM266 264h1v1h-1zM269 264h1v1h-1zM272 264h1v1h-1zM275 264h1v1h-1zM278 264h1v1h-1zM281 264h1v1h-1zM284 264h1v1h-1zM287 264h1v1h-1zM290 264h1v1h-1zM293 264h1v1h-1zM296 264h1v1h-1zM299 264h1v1h-1zM302 264h1v1h-1zM305 264h1v1h-1zM308 264h1v1h-1zM311 264h1v1h-1zM314 264h1v1h-1zM317 264h1v1h-1zM320 264h1v1h-1zM323 264h1v1h-1zM326 264h1v1h-1zM329 264h1v1h-1zM332 264h1v1h-1zM335 264h1v1h-1zM338 264h1v1h-1zM341 264h1v1h-1zM344 264h1v1h-1zM347 264h1v1h-1zM350 264h1v1h-1zM353 264h1v1h-1zM356 264h1v1h-1zM359 264h1v1h-1zM362 264h1v1h-1zM365 264h1v1h-1zM368 264h1v1h-1zM371 264h1v1h-1zM374 264h1v1h-1zM377 264h1v1h-1zM380 264h1v1h-1zM383 264h1v1h-1zM386 264h1v1h-1zM389 264h1v1h-1zM392 264h1v1h-1zM395 264h1v1h-1zM398 264h1v1h-1zM401 264h1v1h-1zM404 264h1v1h-1zM407 264h1v1h-1zM410 264h1v1h-1zM413 264h1v1h-1zM416 264h1v1h-1zM419 264h1v1h-1zM422 264h1v1h-1zM425 264h1v1h-1zM428 264h1v1h-1zM431 264h1v1h-1zM434 264h1v1h-1zM437 264h1v1h-1zM440 264h1v1h-1zM443 264h1v1h-1zM446 264h1v1h-1zM449 264h1v1h-1zM452 264h1v1h-1zM455 264h1v1h-1zM458 264h1v1h-1zM461 264h1v1h-1zM464 264h1v1h-1zM467 264h1v1h-1zM470 264h1v1h-1zM473 264h1v1h-1zM476 264h1v1h-1zM479 264h1v1h-1zM482 264h1v1h-1zM485 264h1v1h-1zM488 264h1v1h-1zM491 264h1v1h-1zM494 264h1v1h-1zM497 264h1v1h-1zM500 264h1v1h-1zM503 264h1v1h-1zM506 264h1v1h-1zM509 264h1v1h-1zM512 264h1v1h-1zM515 264h1v1h-1zM518 264h1v1h-1zM521 264h1v1h-1zM524 264h1v1h-1zM527 264h1v1h-1zM530 264h1v1h-1zM533 264h1v1h-1zM536 264h1v1h-1zM539 264h1v1h-1zM542 264h1v1h-1zM545 264h1v1h-1zM548 264h1v1h-1zM551 264h1v1h-1zM554 264h1v1h-1zM557 264h1v1h-1zM560 264h1v1h-1zM563 264h1v1h-1zM566 264h1v1h-1zM569 264h1v1h-1zM572 264h1v1h-1zM575 264h1v1h-1zM578 264h1v1h-1zM581 264h1v1h-1zM584 264h1v1h-1zM587 264h1v1h-1zM590 264h1v1h-1zM593 264h1v1h-1zM596 264h1v1h-1zM599 264h1v1h-1zM602 264h1v1h-1zM605 264h1v1h-1zM608 264h1v1h-1zM611 264h1v1h-1zM614 264h1v1h-1zM617 264h1v1h-1zM620 264h1v1h-1zM623 264h1v1h-1zM626 264h1v1h-1zM629 264h1v1h-1zM632 264h1v1h-1zM635 264h1v1h-1zM638 264h1v1h-1zM641 264h1v1h-1zM644 264h1v1h-1zM647 264h1v1h-1zM650 264h1v1h-1zM653 264h1v1h-1zM656 264h1v1h-1zM659 264h1v1h-1zM662 264h1v1h-1zM665 264h1v1h-1zM668 264h1v1h-1z" fill="#b0b0b0"/>
<path d="M11 292h1v1h-1zM14 292h1v1h-1zM17 292h1v1h-1zM20 292h1v1h-1zM23 292h1v1h-1zM26 292h1v1h-1zM29 292h1v1h-1zM32 292h1v1h-1zM35 292h1v1h-1zM38 292h1v1h-1zM41 292h1v1h-1zM44 292h1v1h-1zM47 292h1v1h-1zM50 292h1v1h-1zM53 292h1v1h-1zM56 292h1v1h-1zM59 292h1v1h-1zM62 292h1v1h-1zM65 292h1v1h-1zM68 292h1v1h-1zM71 292h1v1h-1zM74 292h1v1h-1zM77 292h1v1h-1zM80 292h1v1h-1zM83 292h1v1h-1zM86 292h1v1h-1zM89 292h1v1h-1zM92 292h1v1h-1zM95 292h1v1h-1zM98 292h1v1h-1zM101 292h1v1h-1zM104 292h1v1h-1zM107 292h1v1h-1zM110 292h1v1h-1zM113 292h1v1h-1zM116 292h1v1h-1zM119 292h1v1h-1zM122 292h1v1h-1zM125 292h1v1h-1zM128 292h1v1h-1zM131 292h1v1h-1zM134 292h1v1h-1zM137 292h1v1h-1zM140 292h1v1h-1zM143 292h1v1h-1zM146 292h1v1h-1zM149 292h1v1h-1zM152 292h1v1h-1zM155 292h1v1h-1zM158 292h1v1h-1zM161 292h1v1h-1zM164 292h1v1h-1zM167 292h1v1h-1zM170 292h1v1h-1zM173 292h1v1h-1zM176 292h1v1h-1zM179 292h1v1h-1zM182 292h1v1h-1zM185 292h1v1h-1zM188 292h1v1h-1zM191 292h1v1h-1zM194 292h1v1h-1zM197 292h1v1h-1zM200 292h1v1h-1zM203 292h1v1h-1zM206 292h1v1h-1zM209 292h1v1h-1zM212 292h1v1h-1zM215 292h1v1h-1zM218 292h1v1h-1zM221 292h1v1h-1zM224 292h1v1h-1zM227 292h1v1h-1zM230 292h1v1h-1zM233 292h1v1h-1zM236 292h1v1h-1zM239 292h1v1h-1zM242 292h1v1h-1zM245 292h1v1h-1zM248 292h1v1h-1zM251 292h1v1h-1zM254 292h1v1h-1zM257 292h1v1h-1zM260 292h1v1h-1zM263 292h1v1h-1zM266 292h1v1h-1zM269 292h1v1h-1zM272 292h1v1h-1zM275 292h1v1h-1zM278 292h1v1h-1zM281 292h1v1h-1zM284 292h1v1h-1zM287 292h1v1h-1zM290 292h1v1h-1zM293 292h1v1h-1zM296 292h1v1h-1zM299 292h1v1h-1zM302 292h1v1h-1zM305 292h1v1h-1zM308 292h1v1h-1zM311 292h1v1h-1zM314 292h1v1h-1zM317 292h1v1h-1zM320 292h1v1h-1zM323 292h1v1h-1zM326 292h1v1h-1zM329 292h1v1h-1zM332 292h1v1h-1zM335 292h1v1h-1zM338 292h1v1h-1zM341 292h1v1h-1zM344 292h1v1h-1zM347 292h1v1h-1zM350 292h1v1h-1zM353 292h1v1h-1zM356 292h1v1h-1zM359 292h1v1h-1zM362 292h1v1h-1zM365 292h1v1h-1zM368 292h1v1h-1zM371 292h1v1h-1zM374 292h1v1h-1zM377 292h1v1h-1zM380 292h1v1h-1zM383 292h1v1h-1zM386 292h1v1h-1zM389 292h1v1h-1zM392 292h1v1h-1zM395 292h1v1h-1zM398 292h1v1h-1zM401 292h1v1h-1zM404 292h1v1h-1zM407 292h1v1h-1zM410 292h1v1h-1zM413 292h1v1h-1zM416 292h1v1h-1zM419 292h1v1h-1zM422 292h1v1h-1zM425 292h1v1h-1zM428 292h1v1h-1zM431 292h1v1h-1zM434 292h1v1h-1zM437 292h1v1h-1zM440 292h1v1h-1zM443 292h1v1h-1zM446 292h1v1h-1zM449 292h1v1h-1zM452 292h1v1h-1zM455 292h1v1h-1zM458 292h1v1h-1zM461 292h1v1h-1zM464 292h1v1h-1zM467 292h1v1h-1zM470 292h1v1h-1zM473 292h1v1h-1zM476 292h1v1h-1zM479 292h1v1h-1zM482 292h1v1h-1zM485 292h1v1h-1zM488 292h1v1h-1zM491 292h1v1h-1zM494 292h1v1h-1zM497 292h1v1h-1zM500 292h1v1h-1zM503 292h1v1h-1zM506 292h1v1h-1zM509 292h1v1h-1zM512 292h1v1h-1zM515 292h1v1h-1zM518 292h1v1h-1zM521 292h1v1h-1zM524 292h1v1h-1zM527 292h1v1h-1zM530 292h1v1h-1zM533 292h1v1h-1zM536 292h1v1h-1zM539 292h1v1h-1zM542 292h1v1h-1zM545 292h1v1h-1zM548 292h1v1h-1zM551 292h1v1h-1zM554 292h1v1h-1zM557 292h1v1h-1zM560 292h1v1h-1zM563 292h1v1h-1zM566 292h1v1h-1zM569 292h1v1h-1zM572 292h1v1h-1zM575 292h1v1h-1zM578 292h1v1h-1zM581 292h1v1h-1zM584 292h1v1h-1zM587 292h1v1h-1zM590 292h1v1h-1zM593 292h1v1h-1zM596 292h1v1h-1zM599 292h1v1h-1zM602 292h1v1h-1zM605 292h1v1h-1zM608 292h1v1h-1zM611 292h1v1h-1zM614 292h1v1h-1zM617 292h1v1h-1zM620 292h1v1h-1zM623 292h1v1h-1zM626 292h1v1h-1zM629 292h1v1h-1zM632 292h1v1h-1zM635 292h1v1h-1zM638 292h1v1h-1zM641 292h1v1h-1zM644 292h1v1h-1zM647 292h1v1h-1zM650 292h1v1h-1zM653 292h1v1h-1zM656 292h1v1h-1zM659 292h1v1h-1zM662 292h1v1h-1zM665 292h1v1h-1zM668 292h1v1h-1z" fill="#b0b0b0"/>
<path d="M11 320h1v1h-1zM14 320h1v1h-1zM17 320h1v1h-1zM20 320h1v1h-1zM23 320h1v1h-1zM26 320h1v1h-1zM29 320h1v1h-1zM32 320h1v1h-1zM35 320h1v1h-1zM38 320h1v1h-1zM41 320h1v1h-1zM44 320h1v1h-1zM47 320h1v1h-1zM50 320h1v1h-1zM53 320h1v1h-1zM56 320h1v1h-1zM59 320h1v1h-1zM62 320h1v1h-1zM65 320h1v1h-1zM68 320h1v1h-1zM71 320h1v1h-1zM74 320h1v1h-1zM77 320h1v1h-1zM80 320h1v1h-1zM83 320h1v1h-1zM86 320h1v1h-1zM89 320h1v1h-1zM92 320h1v1h-1zM95 320h1v1h-1zM98 320h1v1h-1zM101 320h1v1h-1zM104 320h1v1h-1zM107 320h1v1h-1zM110 320h1v1h-1zM113 320h1v1h-1zM116 320h1v1h-1zM119 320h1v1h-1zM122 320h1v1h-1zM125 320h1v1h-1zM128 320h1v1h-1zM131 320h1v1h-1zM134 320h1v1h-1zM137 320h1v1h-1zM140 320h1v1h-1zM143 320h1v1h-1zM146 320h1v1h-1zM149 320h1v1h-1zM152 320h1v1h-1zM155 320h1v1h-1zM158 320h1v1h-1zM161 320h1v1h-1zM164 320h1v1h-1zM167 320h1v1h-1zM170 320h1v1h-1zM173 320h1v1h-1zM176 320h1v1h-1zM179 320h1v1h-1zM182 320h1v1h-1zM185 320h1v1h-1zM188 320h1v1h-1zM191 320h1v1h-1zM194 320h1v1h-1zM197 320h1v1h-1zM200 320h1v1h-1zM203 320h1v1h-1zM206 320h1v1h-1zM209 320h1v1h-1zM212 320h1v1h-1zM215 320h1v1h-1zM218 320h1v1h-1zM221 320h1v1h-1zM224 320h1v1h-1zM227 320h1v1h-1zM230 320h1v1h-1zM233 320h1v1h-1zM236 320h1v1h-1zM239 320h1v1h-1zM242 320h1v1h-1zM245 320h1v1h-1zM248 320h1v1h-1zM251 320h1v1h-1zM254 320h1v1h-1zM257 320h1v1h-1zM260 320h1v1h-1zM263 320h1v1h-1zM266 320h1v1h-1zM269 320h1v1h-1zM272 320h1v1h-1zM275 320h1v1h-1zM278 320h1v1h-1zM281 320h1v1h-1zM284 320h1v1h-1zM287 320h1v1h-1zM290 320h1v1h-1zM293 320h1v1h-1zM296 320h1v1h-1zM299 320h1v1h-1zM302 320h1v1h-1zM305 320h1v1h-1zM308 320h1v1h-1zM311 320h1v1h-1zM314 320h1v1h-1zM317 320h1v1h-1zM320 320h1v1h-1zM323 320h1v1h-1zM326 320h1v1h-1zM329 320h1v1h-1zM332 320h1v1h-1zM335 320h1v1h-1zM338 320h1v1h-1zM341 320h1v1h-1zM344 320h1v1h-1zM347 320h1v1h-1zM350 320h1v1h-1zM353 320h1v1h-1zM356 320h1v1h-1zM359 320h1v1h-1zM362 320h1v1h-1zM365 320h1v1h-1zM368 320h1v1h-1zM371 320h1v1h-1zM374 320h1v1h-1zM377 320h1v1h-1zM380 320h1v1h-1zM383 320h1v1h-1zM386 320h1v1h-1zM389 320h1v1h-1zM392 320h1v1h-1zM395 320h1v1h-1zM398 320h1v1h-1zM401 320h1v1h-1zM404 320h1v1h-1zM407 320h1v1h-1zM410 320h1v1h-1zM413 320h1v1h-1zM416 320h1v1h-1zM419 320h1v1h-1zM422 320h1v1h-1zM425 320h1v1h-1zM428 320h1v1h-1zM431 320h1v1h-1zM434 320h1v1h-1zM437 320h1v1h-1zM440 320h1v1h-1zM443 320h1v1h-1zM446 320h1v1h-1zM449 320h1v1h-1zM452 320h1v1h-1zM455 320h1v1h-1zM458 320h1v1h-1zM461 320h1v1h-1zM464 320h1v1h-1zM467 320h1v1h-1zM470 320h1v1h-1zM473 320h1v1h-1zM476 320h1v1h-1zM479 320h1v1h-1zM482 320h1v1h-1zM485 320h1v1h-1zM488 320h1v1h-1zM491 320h1v1h-1zM494 320h1v1h-1zM497 320h1v1h-1zM500 320h1v1h-1zM503 320h1v1h-1zM506 320h1v1h-1zM509 320h1v1h-1zM512 320h1v1h-1zM515 320h1v1h-1zM518 320h1v1h-1zM521 320h1v1h-1zM524 320h1v1h-1zM527 320h1v1h-1zM530 320h1v1h-1zM533 320h1v1h-1zM536 320h1v1h-1zM539 320h1v1h-1zM542 320h1v1h-1zM545 320h1v1h-1zM548 320h1v1h-1zM551 320h1v1h-1zM554 320h1v1h-1zM557 320h1v1h-1zM560 320h1v1h-1zM563 320h1v1h-1zM566 320h1v1h-1zM569 320h1v1h-1zM572 320h1v1h-1zM575 320h1v1h-1zM578 320h1v1h-1zM581 320h1v1h-1zM584 320h1v1h-1zM587 320h1v1h-1zM590 320h1v1h-1zM593 320h1v1h-1zM596 320h1v1h-1zM599 320h1v1h-1zM602 320h1v1h-1zM605 320h1v1h-1zM608 320h1v1h-1zM611 320h1v1h-1zM614 320h1v1h-1zM617 320h1v1h-1zM620 320h1v1h-1zM623 320h1v1h-1zM626 320h1v1h-1zM629 320h1v1h-1zM632 320h1v1h-1zM635 320h1v1h-1zM638 320h1v1h-1zM641 320h1v1h-1zM644 320h1v1h-1zM647 320h1v1h-1zM650 320h1v1h-1zM653 320h1v1h-1zM656 320h1v1h-1zM659 320h1v1h-1zM662 320h1v1h-1zM665 320h1v1h-1zM668 320h1v1h-1z" fill="#b0b0b0"/>
<path d="M11 390h1v1h-1zM14 390h1v1h-1zM17 390h1v1h-1zM20 390h1v1h-1zM23 390h1v1h-1zM26 390h1v1h-1zM29 390h1v1h-1zM32 390h1v1h-1zM35 390h1v1h-1zM38 390h1v1h-1zM41 390h1v1h-1zM44 390h1v1h-1zM47 390h1v1h-1zM50 390h1v1h-1zM53 390h1v1h-1zM56 390h1v1h-1zM59 390h1v1h-1zM62 390h1v1h-1zM65 390h1v1h-1zM68 390h1v1h-1zM71 390h1v1h-1zM74 390h1v1h-1zM77 390h1v1h-1zM80 390h1v1h-1zM83 390h1v1h-1zM86 390h1v1h-1zM89 390h1v1h-1zM92 390h1v1h-1zM95 390h1v1h-1zM98 390h1v1h-1zM101 390h1v1h-1zM104 390h1v1h-1zM107 390h1v1h-1zM110 390h1v1h-1zM113 390h1v1h-1zM116 390h1v1h-1zM119 390h1v1h-1zM122 390h1v1h-1zM125 390h1v1h-1zM128 390h1v1h-1zM131 390h1v1h-1zM134 390h1v1h-1zM137 390h1v1h-1zM140 390h1v1h-1zM143 390h1v1h-1zM146 390h1v1h-1zM149 390h1v1h-1zM152 390h1v1h-1zM155 390h1v1h-1zM158 390h1v1h-1zM161 390h1v1h-1zM164 390h1v1h-1zM167 390h1v1h-1zM170 390h1v1h-1zM173 390h1v1h-1zM176 390h1v1h-1zM179 390h1v1h-1zM182 390h1v1h-1zM185 390h1v1h-1zM188 390h1v1h-1zM191 390h1v1h-1zM194 390h1v1h-1zM197 390h1v1h-1zM200 390h1v1h-1zM203 390h1v1h-1zM206 390h1v1h-1zM209 390h1v1h-1zM212 390h1v1h-1zM215 390h1v1h-1zM218 390h1v1h-1zM221 390h1v1h-1zM224 390h1v1h-1zM227 390h1v1h-1zM230 390h1v1h-1zM233 390h1v1h-1zM236 390h1v1h-1zM239 390h1v1h-1zM242 390h1v1h-1zM245 390h1v1h-1zM248 390h1v1h-1zM251 390h1v1h-1zM254 390h1v1h-1zM257 390h1v1h-1zM260 390h1v1h-1zM263 390h1v1h-1zM266 390h1v1h-1zM269 390h1v1h-1zM272 390h1v1h-1zM275 390h1v1h-1zM278 390h1v1h-1zM281 390h1v1h-1zM284 390h1v1h-1zM287 390h1v1h-1zM290 390h1v1h-1zM293 390h1v1h-1zM296 390h1v1h-1zM299 390h1v1h-1zM302 390h1v1h-1zM305 390h1v1h-1zM308 390h1v1h-1zM311 390h1v1h-1zM314 390h1v1h-1zM317 390h1v1h-1zM320 390h1v1h-1zM323 390h1v1h-1zM326 390h1v1h-1zM329 390h1v1h-1zM332 390h1v1h-1zM335 390h1v1h-1zM338 390h1v1h-1zM341 390h1v1h-1zM344 390h1v1h-1zM347 390h1v1h-1zM350 390h1v1h-1zM353 390h1v1h-1zM356 390h1v1h-1zM359 390h1v1h-1zM362 390h1v1h-1zM365 390h1v1h-1zM368 390h1v1h-1zM371 390h1v1h-1zM374 390h1v1h-1zM377 390h1v1h-1zM380 390h1v1h-1zM383 390h1v1h-1zM386 390h1v1h-1zM389 390h1v1h-1zM392 390h1v1h-1zM395 390h1v1h-1zM398 390h1v1h-1zM401 390h1v1h-1zM404 390h1v1h-1zM407 390h1v1h-1zM410 390h1v1h-1zM413 390h1v1h-1zM416 390h1v1h-1zM419 390h1v1h-1zM422 390h1v1h-1zM425 390h1v1h-1zM428 390h1v1h-1zM431 390h1v1h-1zM434 390h1v1h-1zM437 390h1v1h-1zM440 390h1v1h-1zM443 390h1v1h-1zM446 390h1v1h-1zM449 390h1v1h-1zM452 390h1v1h-1zM455 390h1v1h-1zM458 390h1v1h-1zM461 390h1v1h-1zM464 390h1v1h-1zM467 390h1v1h-1zM470 390h1v1h-1zM473 390h1v1h-1zM476 390h1v1h-1zM479 390h1v1h-1zM482 390h1v1h-1zM485 390h1v1h-1zM488 390h1v1h-1zM491 390h1v1h-1zM494 390h1v1h-1zM497 390h1v1h-1zM500 390h1v1h-1zM503 390h1v1h-1zM506 390h1v1h-1zM509 390h1v1h-1zM512 390h1v1h-1zM515 390h1v1h-1zM518 390h1v1h-1zM521 390h1v1h-1zM524 390h1v1h-1zM527 390h1v1h-1zM530 390h1v1h-1zM533 390h1v1h-1zM536 390h1v1h-1zM539 390h1v1h-1zM542 390h1v1h-1zM545 390h1v1h-1zM548 390h1v1h-1zM551 390h1v1h-1zM554 390h1v1h-1zM557 390h1v1h-1zM560 390h1v1h-1zM563 390h1v1h-1zM566 390h1v1h-1zM569 390h1v1h-1zM572 390h1v1h-1zM575 390h1v1h-1zM578 390h1v1h-1zM581 390h1v1h-1zM584 390h1v1h-1zM587 390h1v1h-1zM590 390h1v1h-1zM593 390h1v1h-1zM596 390h1v1h-1zM599 390h1v1h-1zM602 390h1v1h-1zM605 390h1v1h-1zM608 390h1v1h-1zM611 390h1v1h-1zM614 390h1v1h-1zM617 390h1v1h-1zM620 390h1v1h-1zM623 390h1v1h-1zM626 390h1v1h-1zM629 390h1v1h-1zM632 390h1v1h-1zM635 390h1v1h-1zM638 390h1v1h-1zM641 390h1v1h-1zM644 390h1v1h-1zM647 390h1v1h-1zM650 390h1v1h-1zM653 390h1v1h-1zM656 390h1v1h-1zM659 390h1v1h-1zM662 390h1v1h-1zM665 390h1v1h-1zM668 390h1v1h-1z" fill="#b0b0b0"/>
<path d="M11 436h1v1h-1zM14 436h1v1h-1zM17 436h1v1h-1zM20 436h1v1h-1zM23 436h1v1h-1zM26 436h1v1h-1zM29 436h1v1h-1zM32 436h1v1h-1zM35 436h1v1h-1zM38 436h1v1h-1zM41 436h1v1h-1zM44 436h1v1h-1zM47 436h1v1h-1zM50 436h1v1h-1zM53 436h1v1h-1zM56 436h1v1h-1zM59 436h1v1h-1zM62 436h1v1h-1zM65 436h1v1h-1zM68 436h1v1h-1zM71 436h1v1h-1zM74 436h1v1h-1zM77 436h1v1h-1zM80 436h1v1h-1zM83 436h1v1h-1zM86 436h1v1h-1zM89 436h1v1h-1zM92 436h1v1h-1zM95 436h1v1h-1zM98 436h1v1h-1zM101 436h1v1h-1zM104 436h1v1h-1zM107 436h1v1h-1zM110 436h1v1h-1zM113 436h1v1h-1zM116 436h1v1h-1zM119 436h1v1h-1zM122 436h1v1h-1zM125 436h1v1h-1zM128 436h1v1h-1zM131 436h1v1h-1zM134 436h1v1h-1zM137 436h1v1h-1zM140 436h1v1h-1zM143 436h1v1h-1zM146 436h1v1h-1zM149 436h1v1h-1zM152 436h1v1h-1zM155 436h1v1h-1zM158 436h1v1h-1zM161 436h1v1h-1zM164 436h1v1h-1zM167 436h1v1h-1zM170 436h1v1h-1zM173 436h1v1h-1zM176 436h1v1h-1zM179 436h1v1h-1zM182 436h1v1h-1zM185 436h1v1h-1zM188 436h1v1h-1zM191 436h1v1h-1zM194 436h1v1h-1zM197 436h1v1h-1zM200 436h1v1h-1zM203 436h1v1h-1zM206 436h1v1h-1zM209 436h1v1h-1zM212 436h1v1h-1zM215 436h1v1h-1zM218 436h1v1h-1zM221 436h1v1h-1zM224 436h1v1h-1zM227 436h1v1h-1zM230 436h1v1h-1zM233 436h1v1h-1zM236 436h1v1h-1zM239 436h1v1h-1zM242 436h1v1h-1zM245 436h1v1h-1zM248 436h1v1h-1zM251 436h1v1h-1zM254 436h1v1h-1zM257 436h1v1h-1zM260 436h1v1h-1zM263 436h1v1h-1zM266 436h1v1h-1zM269 436h1v1h-1zM272 436h1v1h-1zM275 436h1v1h-1zM278 436h1v1h-1zM281 436h1v1h-1zM284 436h1v1h-1zM287 436h1v1h-1zM290 436h1v1h-1zM293 436h1v1h-1zM296 436h1v1h-1zM299 436h1v1h-1zM302 436h1v1h-1zM305 436h1v1h-1zM308 436h1v1h-1zM311 436h1v1h-1zM314 436h1v1h-1zM317 436h1v1h-1zM320 436h1v1h-1zM323 436h1v1h-1zM326 436h1v1h-1zM329 436h1v1h-1zM332 436h1v1h-1zM335 436h1v1h-1zM338 436h1v1h-1zM341 436h1v1h-1zM344 436h1v1h-1zM347 436h1v1h-1zM350 436h1v1h-1zM353 436h1v1h-1zM356 436h1v1h-1zM359 436h1v1h-1zM362 436h1v1h-1zM365 436h1v1h-1zM368 436h1v1h-1zM371 436h1v1h-1zM374 436h1v1h-1zM377 436h1v1h-1zM380 436h1v1h-1zM383 436h1v1h-1zM386 436h1v1h-1zM389 436h1v1h-1zM392 436h1v1h-1zM395 436h1v1h-1zM398 436h1v1h-1zM401 436h1v1h-1zM404 436h1v1h-1zM407 436h1v1h-1zM410 436h1v1h-1zM413 436h1v1h-1zM416 436h1v1h-1zM419 436h1v1h-1zM422 436h1v1h-1zM425 436h1v1h-1zM428 436h1v1h-1zM431 436h1v1h-1zM434 436h1v1h-1zM437 436h1v1h-1zM440 436h1v1h-1zM443 436h1v1h-1zM446 436h1v1h-1zM449 436h1v1h-1zM452 436h1v1h-1zM455 436h1v1h-1zM458 436h1v1h-1zM461 436h1v1h-1zM464 436h1v1h-1zM467 436h1v1h-1zM470 436h1v1h-1zM473 436h1v1h-1zM476 436h1v1h-1zM479 436h1v1h-1zM482 436h1v1h-1zM485 436h1v1h-1zM488 436h1v1h-1zM491 436h1v1h-1zM494 436h1v1h-1zM497 436h1v1h-1zM500 436h1v1h-1zM503 436h1v1h-1zM506 436h1v1h-1zM509 436h1v1h-1zM512 436h1v1h-1zM515 436h1v1h-1zM518 436h1v1h-1zM521 436h1v1h-1zM524 436h1v1h-1zM527 436h1v1h-1zM530 436h1v1h-1zM533 436h1v1h-1zM536 436h1v1h-1zM539 436h1v1h-1zM542 436h1v1h-1zM545 436h1v1h-1zM548 436h1v1h-1zM551 436h1v1h-1zM554 436h1v1h-1zM557 436h1v1h-1zM560 436h1v1h-1zM563 436h1v1h-1zM566 436h1v1h-1zM569 436h1v1h-1zM572 436h1v1h-1zM575 436h1v1h-1zM578 436h1v1h-1zM581 436h1v1h-1zM584 436h1v1h-1zM587 436h1v1h-1zM590 436h1v1h-1zM593 436h1v1h-1zM596 436h1v1h-1zM599 436h1v1h-1zM602 436h1v1h-1zM605 436h1v1h-1zM608 436h1v1h-1zM611 436h1v1h-1zM614 436h1v1h-1zM617 436h1v1h-1zM620 436h1v1h-1zM623 436h1v1h-1zM626 436h1v1h-1zM629 436h1v1h-1zM632 436h1v1h-1zM635 436h1v1h-1zM638 436h1v1h-1zM641 436h1v1h-1zM644 436h1v1h-1zM647 436h1v1h-1zM650 436h1v1h-1zM653 436h1v1h-1zM656 436h1v1h-1zM659 436h1v1h-1zM662 436h1v1h-1zM665 436h1v1h-1zM668 436h1v1h-1z" fill="#b0b0b0"/>
<path d="M11 481h1v1h-1zM14 481h1v1h-1zM17 481h1v1h-1zM20 481h1v1h-1zM23 481h1v1h-1zM26 481h1v1h-1zM29 481h1v1h-1zM32 481h1v1h-1zM35 481h1v1h-1zM38 481h1v1h-1zM41 481h1v1h-1zM44 481h1v1h-1zM47 481h1v1h-1zM50 481h1v1h-1zM53 481h1v1h-1zM56 481h1v1h-1zM59 481h1v1h-1zM62 481h1v1h-1zM65 481h1v1h-1zM68 481h1v1h-1zM71 481h1v1h-1zM74 481h1v1h-1zM77 481h1v1h-1zM80 481h1v1h-1zM83 481h1v1h-1zM86 481h1v1h-1zM89 481h1v1h-1zM92 481h1v1h-1zM95 481h1v1h-1zM98 481h1v1h-1zM101 481h1v1h-1zM104 481h1v1h-1zM107 481h1v1h-1zM110 481h1v1h-1zM113 481h1v1h-1zM116 481h1v1h-1zM119 481h1v1h-1zM122 481h1v1h-1zM125 481h1v1h-1zM128 481h1v1h-1zM131 481h1v1h-1zM134 481h1v1h-1zM137 481h1v1h-1zM140 481h1v1h-1zM143 481h1v1h-1zM146 481h1v1h-1zM149 481h1v1h-1zM152 481h1v1h-1zM155 481h1v1h-1zM158 481h1v1h-1zM161 481h1v1h-1zM164 481h1v1h-1zM167 481h1v1h-1zM170 481h1v1h-1zM173 481h1v1h-1zM176 481h1v1h-1zM179 481h1v1h-1zM182 481h1v1h-1zM185 481h1v1h-1zM188 481h1v1h-1zM191 481h1v1h-1zM194 481h1v1h-1zM197 481h1v1h-1zM200 481h1v1h-1zM203 481h1v1h-1zM206 481h1v1h-1zM209 481h1v1h-1zM212 481h1v1h-1zM215 481h1v1h-1zM218 481h1v1h-1zM221 481h1v1h-1zM224 481h1v1h-1zM227 481h1v1h-1zM230 481h1v1h-1zM233 481h1v1h-1zM236 481h1v1h-1zM239 481h1v1h-1zM242 481h1v1h-1zM245 481h1v1h-1zM248 481h1v1h-1zM251 481h1v1h-1zM254 481h1v1h-1zM257 481h1v1h-1zM260 481h1v1h-1zM263 481h1v1h-1zM266 481h1v1h-1zM269 481h1v1h-1zM272 481h1v1h-1zM275 481h1v1h-1zM278 481h1v1h-1zM281 481h1v1h-1zM284 481h1v1h-1zM287 481h1v1h-1zM290 481h1v1h-1zM293 481h1v1h-1zM296 481h1v1h-1zM299 481h1v1h-1zM302 481h1v1h-1zM305 481h1v1h-1zM308 481h1v1h-1zM311 481h1v1h-1zM314 481h1v1h-1zM317 481h1v1h-1zM320 481h1v1h-1zM323 481h1v1h-1zM326 481h1v1h-1zM329 481h1v1h-1zM332 481h1v1h-1zM335 481h1v1h-1zM338 481h1v1h-1zM341 481h1v1h-1zM344 481h1v1h-1zM347 481h1v1h-1zM350 481h1v1h-1zM353 481h1v1h-1zM356 481h1v1h-1zM359 481h1v1h-1zM362 481h1v1h-1zM365 481h1v1h-1zM368 481h1v1h-1zM371 481h1v1h-1zM374 481h1v1h-1zM377 481h1v1h-1zM380 481h1v1h-1zM383 481h1v1h-1zM386 481h1v1h-1zM389 481h1v1h-1zM392 481h1v1h-1zM395 481h1v1h-1zM398 481h1v1h-1zM401 481h1v1h-1zM404 481h1v1h-1zM407 481h1v1h-1zM410 481h1v1h-1zM413 481h1v1h-1zM416 481h1v1h-1zM419 481h1v1h-1zM422 481h1v1h-1zM425 481h1v1h-1zM428 481h1v1h-1zM431 481h1v1h-1zM434 481h1v1h-1zM437 481h1v1h-1zM440 481h1v1h-1zM443 481h1v1h-1zM446 481h1v1h-1zM449 481h1v1h-1zM452 481h1v1h-1zM455 481h1v1h-1zM458 481h1v1h-1zM461 481h1v1h-1zM464 481h1v1h-1zM467 481h1v1h-1zM470 481h1v1h-1zM473 481h1v1h-1zM476 481h1v1h-1zM479 481h1v1h-1zM482 481h1v1h-1zM485 481h1v1h-1zM488 481h1v1h-1zM491 481h1v1h-1zM494 481h1v1h-1zM497 481h1v1h-1zM500 481h1v1h-1zM503 481h1v1h-1zM506 481h1v1h-1zM509 481h1v1h-1zM512 481h1v1h-1zM515 481h1v1h-1zM518 481h1v1h-1zM521 481h1v1h-1zM524 481h1v1h-1zM527 481h1v1h-1zM530 481h1v1h-1zM533 481h1v1h-1zM536 481h1v1h-1zM539 481h1v1h-1zM542 481h1v1h-1zM545 481h1v1h-1zM548 481h1v1h-1zM551 481h1v1h-1zM554 481h1v1h-1zM557 481h1v1h-1zM560 481h1v1h-1zM563 481h1v1h-1zM566 481h1v1h-1zM569 481h1v1h-1zM572 481h1v1h-1zM575 481h1v1h-1zM578 481h1v1h-1zM581 481h1v1h-1zM584 481h1v1h-1zM587 481h1v1h-1zM590 481h1v1h-1zM593 481h1v1h-1zM596 481h1v1h-1zM599 481h1v1h-1zM602 481h1v1h-1zM605 481h1v1h-1zM608 481h1v1h-1zM611 481h1v1h-1zM614 481h1v1h-1zM617 481h1v1h-1zM620 481h1v1h-1zM623 481h1v1h-1zM626 481h1v1h-1zM629 481h1v1h-1zM632 481h1v1h-1zM635 481h1v1h-1zM638 481h1v1h-1zM641 481h1v1h-1zM644 481h1v1h-1zM647 481h1v1h-1zM650 481h1v1h-1zM653 481h1v1h-1zM656 481h1v1h-1zM659 481h1v1h-1zM662 481h1v1h-1zM665 481h1v1h-1zM668 481h1v1h-1z" fill="#b0b0b0"/>
<path d="M11 526h1v1h-1zM14 526h1v1h-1zM17 526h1v1h-1zM20 526h1v1h-1zM23 526h1v1h-1zM26 526h1v1h-1zM29 526h1v1h-1zM32 526h1v1h-1zM35 526h1v1h-1zM38 526h1v1h-1zM41 526h1v1h-1zM44 526h1v1h-1zM47 526h1v1h-1zM50 526h1v1h-1zM53 526h1v1h-1zM56 526h1v1h-1zM59 526h1v1h-1zM62 526h1v1h-1zM65 526h1v1h-1zM68 526h1v1h-1zM71 526h1v1h-1zM74 526h1v1h-1zM77 526h1v1h-1zM80 526h1v1h-1zM83 526h1v1h-1zM86 526h1v1h-1zM89 526h1v1h-1zM92 526h1v1h-1zM95 526h1v1h-1zM98 526h1v1h-1zM101 526h1v1h-1zM104 526h1v1h-1zM107 526h1v1h-1zM110 526h1v1h-1zM113 526h1v1h-1zM116 526h1v1h-1zM119 526h1v1h-1zM122 526h1v1h-1zM125 526h1v1h-1zM128 526h1v1h-1zM131 526h1v1h-1zM134 526h1v1h-1zM137 526h1v1h-1zM140 526h1v1h-1zM143 526h1v1h-1zM146 526h1v1h-1zM149 526h1v1h-1zM152 526h1v1h-1zM155 526h1v1h-1zM158 526h1v1h-1zM161 526h1v1h-1zM164 526h1v1h-1zM167 526h1v1h-1zM170 526h1v1h-1zM173 526h1v1h-1zM176 526h1v1h-1zM179 526h1v1h-1zM182 526h1v1h-1zM185 526h1v1h-1zM188 526h1v1h-1zM191 526h1v1h-1zM194 526h1v1h-1zM197 526h1v1h-1zM200 526h1v1h-1zM203 526h1v1h-1zM206 526h1v1h-1zM209 526h1v1h-1zM212 526h1v1h-1zM215 526h1v1h-1zM218 526h1v1h-1zM221 526h1v1h-1zM224 526h1v1h-1zM227 526h1v1h-1zM230 526h1v1h-1zM233 526h1v1h-1zM236 526h1v1h-1zM239 526h1v1h-1zM242 526h1v1h-1zM245 526h1v1h-1zM248 526h1v1h-1zM251 526h1v1h-1zM254 526h1v1h-1zM257 526h1v1h-1zM260 526h1v1h-1zM263 526h1v1h-1zM266 526h1v1h-1zM269 526h1v1h-1zM272 526h1v1h-1zM275 526h1v1h-1zM278 526h1v1h-1zM281 526h1v1h-1zM284 526h1v1h-1zM287 526h1v1h-1zM290 526h1v1h-1zM293 526h1v1h-1zM296 526h1v1h-1zM299 526h1v1h-1zM302 526h1v1h-1zM305 526h1v1h-1zM308 526h1v1h-1zM311 526h1v1h-1zM314 526h1v1h-1zM317 526h1v1h-1zM320 526h1v1h-1zM323 526h1v1h-1zM326 526h1v1h-1zM329 526h1v1h-1zM332 526h1v1h-1zM335 526h1v1h-1zM338 526h1v1h-1zM341 526h1v1h-1zM344 526h1v1h-1zM347 526h1v1h-1zM350 526h1v1h-1zM353 526h1v1h-1zM356 526h1v1h-1zM359 526h1v1h-1zM362 526h1v1h-1zM365 526h1v1h-1zM368 526h1v1h-1zM371 526h1v1h-1zM374 526h1v1h-1zM377 526h1v1h-1zM380 526h1v1h-1zM383 526h1v1h-1zM386 526h1v1h-1zM389 526h1v1h-1zM392 526h1v1h-1zM395 526h1v1h-1zM398 526h1v1h-1zM401 526h1v1h-1zM404 526h1v1h-1zM407 526h1v1h-1zM410 526h1v1h-1zM413 526h1v1h-1zM416 526h1v1h-1zM419 526h1v1h-1zM422 526h1v1h-1zM425 526h1v1h-1zM428 526h1v1h-1zM431 526h1v1h-1zM434 526h1v1h-1zM437 526h1v1h-1zM440 526h1v1h-1zM443 526h1v1h-1zM446 526h1v1h-1zM449 526h1v1h-1zM452 526h1v1h-1zM455 526h1v1h-1zM458 526h1v1h-1zM461 526h1v1h-1zM464 526h1v1h-1zM467 526h1v1h-1zM470 526h1v1h-1zM473 526h1v1h-1zM476 526h1v1h-1zM479 526h1v1h-1zM482 526h1v1h-1zM485 526h1v1h-1zM488 526h1v1h-1zM491 526h1v1h-1zM494 526h1v1h-1zM497 526h1v1h-1zM500 526h1v1h-1zM503 526h1v1h-1zM506 526h1v1h-1zM509 526h1v1h-1zM512 526h1v1h-1zM515 526h1v1h-1zM518 526h1v1h-1zM521 526h1v1h-1zM524 526h1v1h-1zM527 526h1v1h-1zM530 526h1v1h-1zM533 526h1v1h-1zM536 526h1v1h-1zM539 526h1v1h-1zM542 526h1v1h-1zM545 526h1v1h-1zM548 526h1v1h-1zM551 526h1v1h-1zM554 526h1v1h-1zM557 526h1v1h-1zM560 526h1v1h-1zM563 526h1v1h-1zM566 526h1v1h-1zM569 526h1v1h-1zM572 526h1v1h-1zM575 526h1v1h-1zM578 526h1v1h-1zM581 526h1v1h-1zM584 526h1v1h-1zM587 526h1v1h-1zM590 526h1v1h-1zM593 526h1v1h-1zM596 526h1v1h-1zM599 526h1v1h-1zM602 526h1v1h-1zM605 526h1v1h-1zM608 526h1v1h-1zM611 526h1v1h-1zM614 526h1v1h-1zM617 526h1v1h-1zM620 526h1v1h-1zM623 526h1v1h-1zM626 526h1v1h-1zM629 526h1v1h-1zM632 526h1v1h-1zM635 526h1v1h-1zM638 526h1v1h-1zM641 526h1v1h-1zM644 526h1v1h-1zM647 526h1v1h-1zM650 526h1v1h-1zM653 526h1v1h-1zM656 526h1v1h-1zM659 526h1v1h-1zM662 526h1v1h-1zM665 526h1v1h-1zM668 526h1v1h-1z" fill="#b0b0b0"/>
<path d="M11 571h1v1h-1zM14 571h1v1h-1zM17 571h1v1h-1zM20 571h1v1h-1zM23 571h1v1h-1zM26 571h1v1h-1zM29 571h1v1h-1zM32 571h1v1h-1zM35 571h1v1h-1zM38 571h1v1h-1zM41 571h1v1h-1zM44 571h1v1h-1zM47 571h1v1h-1zM50 571h1v1h-1zM53 571h1v1h-1zM56 571h1v1h-1zM59 571h1v1h-1zM62 571h1v1h-1zM65 571h1v1h-1zM68 571h1v1h-1zM71 571h1v1h-1zM74 571h1v1h-1zM77 571h1v1h-1zM80 571h1v1h-1zM83 571h1v1h-1zM86 571h1v1h-1zM89 571h1v1h-1zM92 571h1v1h-1zM95 571h1v1h-1zM98 571h1v1h-1zM101 571h1v1h-1zM104 571h1v1h-1zM107 571h1v1h-1zM110 571h1v1h-1zM113 571h1v1h-1zM116 571h1v1h-1zM119 571h1v1h-1zM122 571h1v1h-1zM125 571h1v1h-1zM128 571h1v1h-1zM131 571h1v1h-1zM134 571h1v1h-1zM137 571h1v1h-1zM140 571h1v1h-1zM143 571h1v1h-1zM146 571h1v1h-1zM149 571h1v1h-1zM152 571h1v1h-1zM155 571h1v1h-1zM158 571h1v1h-1zM161 571h1v1h-1zM164 571h1v1h-1zM167 571h1v1h-1zM170 571h1v1h-1zM173 571h1v1h-1zM176 571h1v1h-1zM179 571h1v1h-1zM182 571h1v1h-1zM185 571h1v1h-1zM188 571h1v1h-1zM191 571h1v1h-1zM194 571h1v1h-1zM197 571h1v1h-1zM200 571h1v1h-1zM203 571h1v1h-1zM206 571h1v1h-1zM209 571h1v1h-1zM212 571h1v1h-1zM215 571h1v1h-1zM218 571h1v1h-1zM221 571h1v1h-1zM224 571h1v1h-1zM227 571h1v1h-1zM230 571h1v1h-1zM233 571h1v1h-1zM236 571h1v1h-1zM239 571h1v1h-1zM242 571h1v1h-1zM245 571h1v1h-1zM248 571h1v1h-1zM251 571h1v1h-1zM254 571h1v1h-1zM257 571h1v1h-1zM260 571h1v1h-1zM263 571h1v1h-1zM266 571h1v1h-1zM269 571h1v1h-1zM272 571h1v1h-1zM275 571h1v1h-1zM278 571h1v1h-1zM281 571h1v1h-1zM284 571h1v1h-1zM287 571h1v1h-1zM290 571h1v1h-1zM293 571h1v1h-1zM296 571h1v1h-1zM299 571h1v1h-1zM302 571h1v1h-1zM305 571h1v1h-1zM308 571h1v1h-1zM311 571h1v1h-1zM314 571h1v1h-1zM317 571h1v1h-1zM320 571h1v1h-1zM323 571h1v1h-1zM326 571h1v1h-1zM329 571h1v1h-1zM332 571h1v1h-1zM335 571h1v1h-1zM338 571h1v1h-1zM341 571h1v1h-1zM344 571h1v1h-1zM347 571h1v1h-1zM350 571h1v1h-1zM353 571h1v1h-1zM356 571h1v1h-1zM359 571h1v1h-1zM362 571h1v1h-1zM365 571h1v1h-1zM368 571h1v1h-1zM371 571h1v1h-1zM374 571h1v1h-1zM377 571h1v1h-1zM380 571h1v1h-1zM383 571h1v1h-1zM386 571h1v1h-1zM389 571h1v1h-1zM392 571h1v1h-1zM395 571h1v1h-1zM398 571h1v1h-1zM401 571h1v1h-1zM404 571h1v1h-1zM407 571h1v1h-1zM410 571h1v1h-1zM413 571h1v1h-1zM416 571h1v1h-1zM419 571h1v1h-1zM422 571h1v1h-1zM425 571h1v1h-1zM428 571h1v1h-1zM431 571h1v1h-1zM434 571h1v1h-1zM437 571h1v1h-1zM440 571h1v1h-1zM443 571h1v1h-1zM446 571h1v1h-1zM449 571h1v1h-1zM452 571h1v1h-1zM455 571h1v1h-1zM458 571h1v1h-1zM461 571h1v1h-1zM464 571h1v1h-1zM467 571h1v1h-1zM470 571h1v1h-1zM473 571h1v1h-1zM476 571h1v1h-1zM479 571h1v1h-1zM482 571h1v1h-1zM485 571h1v1h-1zM488 571h1v1h-1zM491 571h1v1h-1zM494 571h1v1h-1zM497 571h1v1h-1zM500 571h1v1h-1zM503 571h1v1h-1zM506 571h1v1h-1zM509 571h1v1h-1zM512 571h1v1h-1zM515 571h1v1h-1zM518 571h1v1h-1zM521 571h1v1h-1zM524 571h1v1h-1zM527 571h1v1h-1zM530 571h1v1h-1zM533 571h1v1h-1zM536 571h1v1h-1zM539 571h1v1h-1zM542 571h1v1h-1zM545 571h1v1h-1zM548 571h1v1h-1zM551 571h1v1h-1zM554 571h1v1h-1zM557 571h1v1h-1zM560 571h1v1h-1zM563 571h1v1h-1zM566 571h1v1h-1zM569 571h1v1h-1zM572 571h1v1h-1zM575 571h1v1h-1zM578 571h1v1h-1zM581 571h1v1h-1zM584 571h1v1h-1zM587 571h1v1h-1zM590 571h1v1h-1zM593 571h1v1h-1zM596 571h1v1h-1zM599 571h1v1h-1zM602 571h1v1h-1zM605 571h1v1h-1zM608 571h1v1h-1zM611 571h1v1h-1zM614 571h1v1h-1zM617 571h1v1h-1zM620 571h1v1h-1zM623 571h1v1h-1zM626 571h1v1h-1zM629 571h1v1h-1zM632 571h1v1h-1zM635 571h1v1h-1zM638 571h1v1h-1zM641 571h1v1h-1zM644 571h1v1h-1zM647 571h1v1h-1zM650 571h1v1h-1zM653 571h1v1h-1zM656 571h1v1h-1zM659 571h1v1h-1zM662 571h1v1h-1zM665 571h1v1h-1zM668 571h1v1h-1z" fill="#b0b0b0"/>
<path d="M11 617h1v1h-1zM14 617h1v1h-1zM17 617h1v1h-1zM20 617h1v1h-1zM23 617h1v1h-1zM26 617h1v1h-1zM29 617h1v1h-1zM32 617h1v1h-1zM35 617h1v1h-1zM38 617h1v1h-1zM41 617h1v1h-1zM44 617h1v1h-1zM47 617h1v1h-1zM50 617h1v1h-1zM53 617h1v1h-1zM56 617h1v1h-1zM59 617h1v1h-1zM62 617h1v1h-1zM65 617h1v1h-1zM68 617h1v1h-1zM71 617h1v1h-1zM74 617h1v1h-1zM77 617h1v1h-1zM80 617h1v1h-1zM83 617h1v1h-1zM86 617h1v1h-1zM89 617h1v1h-1zM92 617h1v1h-1zM95 617h1v1h-1zM98 617h1v1h-1zM101 617h1v1h-1zM104 617h1v1h-1zM107 617h1v1h-1zM110 617h1v1h-1zM113 617h1v1h-1zM116 617h1v1h-1zM119 617h1v1h-1zM122 617h1v1h-1zM125 617h1v1h-1zM128 617h1v1h-1zM131 617h1v1h-1zM134 617h1v1h-1zM137 617h1v1h-1zM140 617h1v1h-1zM143 617h1v1h-1zM146 617h1v1h-1zM149 617h1v1h-1zM152 617h1v1h-1zM155 617h1v1h-1zM158 617h1v1h-1zM161 617h1v1h-1zM164 617h1v1h-1zM167 617h1v1h-1zM170 617h1v1h-1zM173 617h1v1h-1zM176 617h1v1h-1zM179 617h1v1h-1zM182 617h1v1h-1zM185 617h1v1h-1zM188 617h1v1h-1zM191 617h1v1h-1zM194 617h1v1h-1zM197 617h1v1h-1zM200 617h1v1h-1zM203 617h1v1h-1zM206 617h1v1h-1zM209 617h1v1h-1zM212 617h1v1h-1zM215 617h1v1h-1zM218 617h1v1h-1zM221 617h1v1h-1zM224 617h1v1h-1zM227 617h1v1h-1zM230 617h1v1h-1zM233 617h1v1h-1zM236 617h1v1h-1zM239 617h1v1h-1zM242 617h1v1h-1zM245 617h1v1h-1zM248 617h1v1h-1zM251 617h1v1h-1zM254 617h1v1h-1zM257 617h1v1h-1zM260 617h1v1h-1zM263 617h1v1h-1zM266 617h1v1h-1zM269 617h1v1h-1zM272 617h1v1h-1zM275 617h1v1h-1zM278 617h1v1h-1zM281 617h1v1h-1zM284 617h1v1h-1zM287 617h1v1h-1zM290 617h1v1h-1zM293 617h1v1h-1zM296 617h1v1h-1zM299 617h1v1h-1zM302 617h1v1h-1zM305 617h1v1h-1zM308 617h1v1h-1zM311 617h1v1h-1zM314 617h1v1h-1zM317 617h1v1h-1zM320 617h1v1h-1zM323 617h1v1h-1zM326 617h1v1h-1zM329 617h1v1h-1zM332 617h1v1h-1zM335 617h1v1h-1zM338 617h1v1h-1zM341 617h1v1h-1zM344 617h1v1h-1zM347 617h1v1h-1zM350 617h1v1h-1zM353 617h1v1h-1zM356 617h1v1h-1zM359 617h1v1h-1zM362 617h1v1h-1zM365 617h1v1h-1zM368 617h1v1h-1zM371 617h1v1h-1zM374 617h1v1h-1zM377 617h1v1h-1zM380 617h1v1h-1zM383 617h1v1h-1zM386 617h1v1h-1zM389 617h1v1h-1zM392 617h1v1h-1zM395 617h1v1h-1zM398 617h1v1h-1zM401 617h1v1h-1zM404 617h1v1h-1zM407 617h1v1h-1zM410 617h1v1h-1zM413 617h1v1h-1zM416 617h1v1h-1zM419 617h1v1h-1zM422 617h1v1h-1zM425 617h1v1h-1zM428 617h1v1h-1zM431 617h1v1h-1zM434 617h1v1h-1zM437 617h1v1h-1zM440 617h1v1h-1zM443 617h1v1h-1zM446 617h1v1h-1zM449 617h1v1h-1zM452 617h1v1h-1zM455 617h1v1h-1zM458 617h1v1h-1zM461 617h1v1h-1zM464 617h1v1h-1zM467 617h1v1h-1zM470 617h1v1h-1zM473 617h1v1h-1zM476 617h1v1h-1zM479 617h1v1h-1zM482 617h1v1h-1zM485 617h1v1h-1zM488 617h1v1h-1zM491 617h1v1h-1zM494 617h1v1h-1zM497 617h1v1h-1zM500 617h1v1h-1zM503 617h1v1h-1zM506 617h1v1h-1zM509 617h1v1h-1zM512 617h1v1h-1zM515 617h1v1h-1zM518 617h1v1h-1zM521 617h1v1h-1zM524 617h1v1h-1zM527 617h1v1h-1zM530 617h1v1h-1zM533 617h1v1h-1zM536 617h1v1h-1zM539 617h1v1h-1zM542 617h1v1h-1zM545 617h1v1h-1zM548 617h1v1h-1zM551 617h1v1h-1zM554 617h1v1h-1zM557 617h1v1h-1zM560 617h1v1h-1zM563 617h1v1h-1zM566 617h1v1h-1zM569 617h1v1h-1zM572 617h1v1h-1zM575 617h1v1h-1zM578 617h1v1h-1zM581 617h1v1h-1zM584 617h1v1h-1zM587 617h1v1h-1zM590 617h1v1h-1zM593 617h1v1h-1zM596 617h1v1h-1zM599 617h1v1h-1zM602 617h1v1h-1zM605 617h1v1h-1zM608 617h1v1h-1zM611 617h1v1h-1zM614 617h1v1h-1zM617 617h1v1h-1zM620 617h1v1h-1zM623 617h1v1h-1zM626 617h1v1h-1zM629 617h1v1h-1zM632 617h1v1h-1zM635 617h1v1h-1zM638 617h1v1h-1zM641 617h1v1h-1zM644 617h1v1h-1zM647 617h1v1h-1zM650 617h1v1h-1zM653 617h1v1h-1zM656 617h1v1h-1zM659 617h1v1h-1zM662 617h1v1h-1zM665 617h1v1h-1zM668 617h1v1h-1z" fill="#b0b0b0"/>
<path d="M38 59h1v1h-1zM38 62h1v1h-1zM38 65h1v1h-1zM38 68h1v1h-1zM38 71h1v1h-1zM38 74h1v1h-1zM38 77h1v1h-1zM38 80h1v1h-1zM38 83h1v1h-1zM38 86h1v1h-1zM38 89h1v1h-1zM38 92h1v1h-1zM38 95h1v1h-1zM38 98h1v1h-1zM38 101h1v1h-1zM38 104h1v1h-1zM38 107h1v1h-1zM38 110h1v1h-1zM38 113h1v1h-1zM38 116h1v1h-1zM38 119h1v1h-1zM38 122h1v1h-1zM38 125h1v1h-1zM38 128h1v1h-1zM38 131h1v1h-1zM38 134h1v1h-1zM38 137h1v1h-1zM38 140h1v1h-1zM38 143h1v1h-1zM38 146h1v1h-1zM38 149h1v1h-1zM38 152h1v1h-1zM38 155h1v1h-1zM38 158h1v1h-1zM38 161h1v1h-1zM38 164h1v1h-1zM38 167h1v1h-1zM38 170h1v1h-1zM38 173h1v1h-1zM38 176h1v1h-1zM38 179h1v1h-1zM38 182h1v1h-1zM38 185h1v1h-1zM38 188h1v1h-1zM38 191h1v1h-1zM38 194h1v1h-1zM38 197h1v1h-1zM38 200h1v1h-1zM38 203h1v1h-1zM38 206h1v1h-1zM38 209h1v1h-1zM38 212h1v1h-1zM38 215h1v1h-1zM38 218h1v1h-1zM38 221h1v1h-1zM38 224h1v1h-1zM38 227h1v1h-1zM38 230h1v1h-1zM38 233h1v1h-1zM38 236h1v1h-1zM38 239h1v1h-1zM38 242h1v1h-1zM38 245h1v1h-1zM38 248h1v1h-1zM38 251h1v1h-1zM38 254h1v1h-1zM38 257h1v1h-1zM38 260h1v1h-1zM38 263h1v1h-1zM38 266h1v1h-1zM38 269h1v1h-1zM38 272h1v1h-1zM38 275h1v1h-1zM38 278h1v1h-1zM38 281h1v1h-1zM38 284h1v1h-1zM38 287h1v1h-1zM38 290h1v1h-1zM38 293h1v1h-1zM38 296h1v1h-1zM38 299h1v1h-1zM38 302h1v1h-1zM38 305h1v1h-1zM38 308h1v1h-1zM38 311h1v1h-1zM38 314h1v1h-1zM38 317h1v1h-1zM38 320h1v1h-1zM38 323h1v1h-1zM38 326h1v1h-1z" fill="#b0b0b0"/>
<path d="M38 347h1v1h-1zM38 350h1v1h-1zM38 353h1v1h-1zM38 356h1v1h-1zM38 359h1v1h-1zM38 362h1v1h-1zM38 365h1v1h-1zM38 368h1v1h-1zM38 371h1v1h-1zM38 374h1v1h-1zM38 377h1v1h-1zM38 380h1v1h-1zM38 383h1v1h-1zM38 386h1v1h-1zM38 389h1v1h-1zM38 392h1v1h-1zM38 395h1v1h-1zM38 398h1v1h-1zM38 401h1v1h-1zM38 404h1v1h-1zM38 407h1v1h-1zM38 410h1v1h-1zM38 413h1v1h-1zM38 416h1v1h-1zM38 419h1v1h-1zM38 422h1v1h-1zM38 425h1v1h-1zM38 428h1v1h-1zM38 431h1v1h-1zM38 434h1v1h-1zM38 437h1v1h-1zM38 440h1v1h-1zM38 443h1v1h-1zM38 446h1v1h-1zM38 449h1v1h-1zM38 452h1v1h-1zM38 455h1v1h-1zM38 458h1v1h-1zM38 461h1v1h-1zM38 464h1v1h-1zM38 467h1v1h-1zM38 470h1v1h-1zM38 473h1v1h-1zM38 476h1v1h-1zM38 479h1v1h-1zM38 482h1v1h-1zM38 485h1v1h-1zM38 488h1v1h-1zM38 491h1v1h-1zM38 494h1v1h-1zM38 497h1v1h-1zM38 500h1v1h-1zM38 503h1v1h-1zM38 506h1v1h-1zM38 509h1v1h-1zM38 512h1v1h-1zM38 515h1v1h-1zM38 518h1v1h-1zM38 521h1v1h-1zM38 524h1v1h-1zM38 527h1v1h-1zM38 530h1v1h-1zM38 533h1v1h-1zM38 536h1v1h-1zM38 539h1v1h-1zM38 542h1v1h-1zM38 545h1v1h-1zM38 548h1v1h-1zM38 551h1v1h-1zM38 554h1v1h-1zM38 557h1v1h-1zM38 560h1v1h-1zM38 563h1v1h-1zM38 566h1v1h-1zM38 569h1v1h-1zM38 572h1v1h-1zM38 575h1v1h-1zM38 578h1v1h-1zM38 581h1v1h-1zM38 584h1v1h-1zM38 587h1v1h-1zM38 590h1v1h-1zM38 593h1v1h-1zM38 596h1v1h-1zM38 599h1v1h-1zM38 602h1v1h-1zM38 605h1v1h-1zM38 608h1v1h-1zM38 611h1v1h-1zM38 614h1v1h-1zM38 617h1v1h-1zM38 620h1v1h-1z" fill="#b0b0b0"/>
<path d="M101 59h1v1h-1zM101 62h1v1h-1zM101 65h1v1h-1zM101 68h1v1h-1zM101 71h1v1h-1zM101 74h1v1h-1zM101 77h1v1h-1zM101 80h1v1h-1zM101 83h1v1h-1zM101 86h1v1h-1zM101 89h1v1h-1zM101 92h1v1h-1zM101 95h1v1h-1zM101 98h1v1h-1zM101 101h1v1h-1zM101 104h1v1h-1zM101 107h1v1h-1zM101 110h1v1h-1zM101 113h1v1h-1zM101 116h1v1h-1zM101 119h1v1h-1zM101 122h1v1h-1zM101 125h1v1h-1zM101 128h1v1h-1zM101 131h1v1h-1zM101 134h1v1h-1zM101 137h1v1h-1zM101 140h1v1h-1zM101 143h1v1h-1zM101 146h1v1h-1zM101 149h1v1h-1zM101 152h1v1h-1zM101 155h1v1h-1zM101 158h1v1h-1zM101 161h1v1h-1zM101 164h1v1h-1zM101 167h1v1h-1zM101 170h1v1h-1zM101 173h1v1h-1zM101 176h1v1h-1zM101 179h1v1h-1zM101 182h1v1h-1zM101 185h1v1h-1zM101 188h1v1h-1zM101 191h1v1h-1zM101 194h1v1h-1zM101 197h1v1h-1zM101 200h1v1h-1zM101 203h1v1h-1zM101 206h1v1h-1zM101 209h1v1h-1zM101 212h1v1h-1zM101 215h1v1h-1zM101 218h1v1h-1zM101 221h1v1h-1zM101 224h1v1h-1zM101 227h1v1h-1zM101 230h1v1h-1zM101 233h1v1h-1zM101 236h1v1h-1zM101 239h1v1h-1zM101 242h1v1h-1zM101 245h1v1h-1zM101 248h1v1h-1zM101 251h1v1h-1zM101 254h1v1h-1zM101 257h1v1h-1zM101 260h1v1h-1zM101 263h1v1h-1zM101 266h1v1h-1zM101 269h1v1h-1zM101 272h1v1h-1zM101 275h1v1h-1zM101 278h1v1h-1zM101 281h1v1h-1zM101 284h1v1h-1zM101 287h1v1h-1zM101 290h1v1h-1zM101 293h1v1h-1zM101 296h1v1h-1zM101 299h1v1h-1zM101 302h1v1h-1zM101 305h1v1h-1zM101 308h1v1h-1zM101 311h1v1h-1zM101 314h1v1h-1zM101 317h1v1h-1zM101 320h1v1h-1zM101 323h1v1h-1zM101 326h1v1h-1z" fill="#b0b0b0"/>
<path d="M101 347h1v1h-1zM101 350h1v1h-1zM101 353h1v1h-1zM101 356h1v1h-1zM101 359h1v1h-1zM101 362h1v1h-1zM101 365h1v1h-1zM101 368h1v1h-1zM101 371h1v1h-1zM101 374h1v1h-1zM101 377h1v1h-1zM101 380h1v1h-1zM101 383h1v1h-1zM101 386h1v1h-1zM101 389h1v1h-1zM101 392h1v1h-1zM101 395h1v1h-1zM101 398h1v1h-1zM101 401h1v1h-1zM101 404h1v1h-1zM101 407h1v1h-1zM101 410h1v1h-1zM101 413h1v1h-1zM101 416h1v1h-1zM101 419h1v1h-1zM101 422h1v1h-1zM101 425h1v1h-1zM101 428h1v1h-1zM101 431h1v1h-1zM101 434h1v1h-1zM101 437h1v1h-1zM101 440h1v1h-1zM101 443h1v1h-1zM101 446h1v1h-1zM101 449h1v1h-1zM101 452h1v1h-1zM101 455h1v1h-1zM101 458h1v1h-1zM101 461h1v1h-1zM101 464h1v1h-1zM101 467h1v1h-1zM101 470h1v1h-1zM101 473h1v1h-1zM101 476h1v1h-1zM101 479h1v1h-1zM101 482h1v1h-1zM101 485h1v1h-1zM101 488h1v1h-1zM101 491h1v1h-1zM101 494h1v1h-1zM101 497h1v1h-1zM101 500h1v1h-1zM101 503h1v1h-1zM101 506h1v1h-1zM101 509h1v1h-1zM101 512h1v1h-1zM101 515h1v1h-1zM101 518h1v1h-1zM101 521h1v1h-1zM101 524h1v1h-1zM101 527h1v1h-1zM101 530h1v1h-1zM101 533h1v1h-1zM101 536h1v1h-1zM101 539h1v1h-1zM101 542h1v1h-1zM101 545h1v1h-1zM101 548h1v1h-1zM101 551h1v1h-1zM101 554h1v1h-1zM101 557h1v1h-1zM101 560h1v1h-1zM101 563h1v1h-1zM101 566h1v1h-1zM101 569h1v1h-1zM101 572h1v1h-1zM101 575h1v1h-1zM101 578h1v1h-1zM101 581h1v1h-1zM101 584h1v1h-1zM101 587h1v1h-1zM101 590h1v1h-1zM101 593h1v1h-1zM101 596h1v1h-1zM101 599h1v1h-1zM101 602h1v1h-1zM101 605h1v1h-1zM101 608h1v1h-1zM101 611h1v1h-1zM101 614h1v1h-1zM101 617h1v1h-1zM101 620h1v1h-1z" fill="#b0b0b0"/>
<path d="M164 59h1v1h-1zM164 62h1v1h-1zM164 65h1v1h-1zM164 68h1v1h-1zM164 71h1v1h-1zM164 74h1v1h-1zM164 77h1v1h-1zM164 80h1v1h-1zM164 83h1v1h-1zM164 86h1v1h-1zM164 89h1v1h-1zM164 92h1v1h-1zM164 95h1v1h-1zM164 98h1v1h-1zM164 101h1v1h-1zM164 104h1v1h-1zM164 107h1v1h-1zM164 110h1v1h-1zM164 113h1v1h-1zM164 116h1v1h-1zM164 119h1v1h-1zM164 122h1v1h-1zM164 125h1v1h-1zM164 128h1v1h-1zM164 131h1v1h-1zM164 134h1v1h-1zM164 137h1v1h-1zM164 140h1v1h-1zM164 143h1v1h-1zM164 146h1v1h-1zM164 149h1v1h-1zM164 152h1v1h-1zM164 155h1v1h-1zM164 158h1v1h-1zM164 161h1v1h-1zM164 164h1v1h-1zM164 167h1v1h-1zM164 170h1v1h-1zM164 173h1v1h-1zM164 176h1v1h-1zM164 179h1v1h-1zM164 182h1v1h-1zM164 185h1v1h-1zM164 188h1v1h-1zM164 191h1v1h-1zM164 194h1v1h-1zM164 197h1v1h-1zM164 200h1v1h-1zM164 203h1v1h-1zM164 206h1v1h-1zM164 209h1v1h-1zM164 212h1v1h-1zM164 215h1v1h-1zM164 218h1v1h-1zM164 221h1v1h-1zM164 224h1v1h-1zM164 227h1v1h-1zM164 230h1v1h-1zM164 233h1v1h-1zM164 236h1v1h-1zM164 239h1v1h-1zM164 242h1v1h-1zM164 245h1v1h-1zM164 248h1v1h-1zM164 251h1v1h-1zM164 254h1v1h-1zM164 257h1v1h-1zM164 260h1v1h-1zM164 263h1v1h-1zM164 266h1v1h-1zM164 269h1v1h-1zM164 272h1v1h-1zM164 275h1v1h-1zM164 278h1v1h-1zM164 281h1v1h-1zM164 284h1v1h-1zM164 287h1v1h-1zM164 290h1v1h-1zM164 293h1v1h-1zM164 296h1v1h-1zM164 299h1v1h-1zM164 302h1v1h-1zM164 305h1v1h-1zM164 308h1v1h-1zM164 311h1v1h-1zM164 314h1v1h-1zM164 317h1v1h-1zM164 320h1v1h-1zM164 323h1v1h-1zM164 326h1v1h-1z" fill="#b0b0b0"/>
<path d="M164 347h1v1h-1zM164 350h1v1h-1zM164 353h1v1h-1zM164 356h1v1h-1zM164 359h1v1h-1zM164 362h1v1h-1zM164 365h1v1h-1zM164 368h1v1h-1zM164 371h1v1h-1zM164 374h1v1h-1zM164 377h1v1h-1zM164 380h1v1h-1zM164 383h1v1h-1zM164 386h1v1h-1zM164 389h1v1h-1zM164 392h1v1h-1zM164 395h1v1h-1zM164 398h1v1h-1zM164 401h1v1h-1zM164 404h1v1h-1zM164 407h1v1h-1zM164 410h1v1h-1zM164 413h1v1h-1zM164 416h1v1h-1zM164 419h1v1h-1zM164 422h1v1h-1zM164 425h1v1h-1zM164 428h1v1h-1zM164 431h1v1h-1zM164 434h1v1h-1zM164 437h1v1h-1zM164 440h1v1h-1zM164 443h1v1h-1zM164 446h1v1h-1zM164 449h1v1h-1zM164 452h1v1h-1zM164 455h1v1h-1zM164 458h1v1h-1zM164 461h1v1h-1zM164 464h1v1h-1zM164 467h1v1h-1zM164 470h1v1h-1zM164 473h1v1h-1zM164 476h1v1h-1zM164 479h1v1h-1zM164 482h1v1h-1zM164 485h1v1h-1zM164 488h1v1h-1zM164 491h1v1h-1zM164 494h1v1h-1zM164 497h1v1h-1zM164 500h1v1h-1zM164 503h1v1h-1zM164 506h1v1h-1zM164 509h1v1h-1zM164 512h1v1h-1zM164 515h1v1h-1zM164 518h1v1h-1zM164 521h1v1h-1zM164 524h1v1h-1zM164 527h1v1h-1zM164 530h1v1h-1zM164 533h1v1h-1zM164 536h1v1h-1zM164 539h1v1h-1zM164 542h1v1h-1zM164 545h1v1h-1zM164 548h1v1h-1zM164 551h1v1h-1zM164 554h1v1h-1zM164 557h1v1h-1zM164 560h1v1h-1zM164 563h1v1h-1zM164 566h1v1h-1zM164 569h1v1h-1zM164 572h1v1h-1zM164 575h1v1h-1zM164 578h1v1h-1zM164 581h1v1h-1zM164 584h1v1h-1zM164 587h1v1h-1zM164 590h1v1h-1zM164 593h1v1h-1zM164 596h1v1h-1zM164 599h1v1h-1zM164 602h1v1h-1zM164 605h1v1h-1zM164 608h1v1h-1zM164 611h1v1h-1zM164 614h1v1h-1zM164 617h1v1h-1zM164 620h1v1h-1z" fill="#b0b0b0"/>
<path d="M227 59h1v1h-1zM227 62h1v1h-1zM227 65h1v1h-1zM227 68h1v1h-1zM227 71h1v1h-1zM227 74h1v1h-1zM227 77h1v1h-1zM227 80h1v1h-1zM227 83h1v1h-1zM227 86h1v1h-1zM227 89h1v1h-1zM227 92h1v1h-1zM227 95h1v1h-1zM227 98h1v1h-1zM227 101h1v1h-1zM227 104h1v1h-1zM227 107h1v1h-1zM227 110h1v1h-1zM227 113h1v1h-1zM227 116h1v1h-1zM227 119h1v1h-1zM227 122h1v1h-1zM227 125h1v1h-1zM227 128h1v1h-1zM227 131h1v1h-1zM227 134h1v1h-1zM227 137h1v1h-1zM227 140h1v1h-1zM227 143h1v1h-1zM227 146h1v1h-1zM227 149h1v1h-1zM227 152h1v1h-1zM227 155h1v1h-1zM227 158h1v1h-1zM227 161h1v1h-1zM227 164h1v1h-1zM227 167h1v1h-1zM227 170h1v1h-1zM227 173h1v1h-1zM227 176h1v1h-1zM227 179h1v1h-1zM227 182h1v1h-1zM227 185h1v1h-1zM227 188h1v1h-1zM227 191h1v1h-1zM227 194h1v1h-1zM227 197h1v1h-1zM227 200h1v1h-1zM227 203h1v1h-1zM227 206h1v1h-1zM227 209h1v1h-1zM227 212h1v1h-1zM227 215h1v1h-1zM227 218h1v1h-1zM227 221h1v1h-1zM227 224h1v1h-1zM227 227h1v1h-1zM227 230h1v1h-1zM227 233h1v1h-1zM227 236h1v1h-1zM227 239h1v1h-1zM227 242h1v1h-1zM227 245h1v1h-1zM227 248h1v1h-1zM227 251h1v1h-1zM227 254h1v1h-1zM227 257h1v1h-1zM227 260h1v1h-1zM227 263h1v1h-1zM227 266h1v1h-1zM227 269h1v1h-1zM227 272h1v1h-1zM227 275h1v1h-1zM227 278h1v1h-1zM227 281h1v1h-1zM227 284h1v1h-1zM227 287h1v1h-1zM227 290h1v1h-1zM227 293h1v1h-1zM227 296h1v1h-1zM227 299h1v1h-1zM227 302h1v1h-1zM227 305h1v1h-1zM227 308h1v1h-1zM227 311h1v1h-1zM227 314h1v1h-1zM227 317h1v1h-1zM227 320h1v1h-1zM227 323h1v1h-1zM227 326h1v1h-1z" fill="#b0b0b0"/>
<path d="M227 329h1v1h-1zM227 332h1v1h-1zM227 335h1v1h-1zM227 338h1v1h-1zM227 341h1v1h-1zM227 344h1v1h-1zM227 347h1v1h-1zM227 350h1v1h-1zM227 353h1v1h-1zM227 356h1v1h-1zM227 359h1v1h-1zM227 362h1v1h-1zM227 365h1v1h-1zM227 368h1v1h-1zM227 371h1v1h-1zM227 374h1v1h-1zM227 377h1v1h-1zM227 380h1v1h-1zM227 383h1v1h-1zM227 386h1v1h-1zM227 389h1v1h-1zM227 392h1v1h-1zM227 395h1v1h-1zM227 398h1v1h-1zM227 401h1v1h-1zM227 404h1v1h-1zM227 407h1v1h-1zM227 410h1v1h-1zM227 413h1v1h-1zM227 416h1v1h-1zM227 419h1v1h-1zM227 422h1v1h-1zM227 425h1v1h-1zM227 428h1v1h-1zM227 431h1v1h-1zM227 434h1v1h-1zM227 437h1v1h-1zM227 440h1v1h-1zM227 443h1v1h-1zM227 446h1v1h-1zM227 449h1v1h-1zM227 452h1v1h-1zM227 455h1v1h-1zM227 458h1v1h-1zM227 461h1v1h-1zM227 464h1v1h-1zM227 467h1v1h-1zM227 470h1v1h-1zM227 473h1v1h-1zM227 476h1v1h-1zM227 479h1v1h-1zM227 482h1v1h-1zM227 485h1v1h-1zM227 488h1v1h-1zM227 491h1v1h-1zM227 494h1v1h-1zM227 497h1v1h-1zM227 500h1v1h-1zM227 503h1v1h-1zM227 506h1v1h-1zM227 509h1v1h-1zM227 512h1v1h-1zM227 515h1v1h-1zM227 518h1v1h-1zM227 521h1v1h-1zM227 524h1v1h-1zM227 527h1v1h-1zM227 530h1v1h-1zM227 533h1v1h-1zM227 536h1v1h-1zM227 539h1v1h-1zM227 542h1v1h-1zM227 545h1v1h-1zM227 548h1v1h-1zM227 551h1v1h-1zM227 554h1v1h-1zM227 557h1v1h-1zM227 560h1v1h-1zM227 563h1v1h-1zM227 566h1v1h-1zM227 569h1v1h-1zM227 572h1v1h-1zM227 575h1v1h-1zM227 578h1v1h-1zM227 581h1v1h-1zM227 584h1v1h-1zM227 587h1v1h-1zM227 590h1v1h-1zM227 593h1v1h-1zM227 596h1v1h-1zM227 599h1v1h-1zM227 602h1v1h-1zM227 605h1v1h-1zM227 608h1v1h-1zM227 611h1v1h-1zM227 614h1v1h-1zM227 617h1v1h-1zM227 620h1v1h-1z" fill="#b0b0b0"/>
<path d="M290 59h1v1h-1zM290 62h1v1h-1zM290 65h1v1h-1zM290 68h1v1h-1zM290 71h1v1h-1zM290 74h1v1h-1zM290 77h1v1h-1zM290 80h1v1h-1zM290 83h1v1h-1zM290 86h1v1h-1zM290 89h1v1h-1zM290 92h1v1h-1zM290 95h1v1h-1zM290 98h1v1h-1zM290 101h1v1h-1zM290 104h1v1h-1zM290 107h1v1h-1zM290 110h1v1h-1zM290 113h1v1h-1zM290 116h1v1h-1zM290 119h1v1h-1zM290 122h1v1h-1zM290 125h1v1h-1zM290 128h1v1h-1zM290 131h1v1h-1zM290 134h1v1h-1zM290 137h1v1h-1zM290 140h1v1h-1zM290 143h1v1h-1zM290 146h1v1h-1zM290 149h1v1h-1zM290 152h1v1h-1zM290 155h1v1h-1zM290 158h1v1h-1zM290 161h1v1h-1zM290 164h1v1h-1zM290 167h1v1h-1zM290 170h1v1h-1zM290 173h1v1h-1zM290 176h1v1h-1zM290 179h1v1h-1zM290 182h1v1h-1zM290 185h1v1h-1zM290 188h1v1h-1zM290 191h1v1h-1zM290 194h1v1h-1zM290 197h1v1h-1zM290 200h1v1h-1zM290 203h1v1h-1zM290 206h1v1h-1zM290 209h1v1h-1zM290 212h1v1h-1zM290 215h1v1h-1zM290 218h1v1h-1zM290 221h1v1h-1zM290 224h1v1h-1zM290 227h1v1h-1zM290 230h1v1h-1zM290 233h1v1h-1zM290 236h1v1h-1zM290 239h1v1h-1zM290 242h1v1h-1zM290 245h1v1h-1zM290 248h1v1h-1zM290 251h1v1h-1zM290 254h1v1h-1zM290 257h1v1h-1zM290 260h1v1h-1zM290 263h1v1h-1zM290 266h1v1h-1zM290 269h1v1h-1zM290 272h1v1h-1zM290 275h1v1h-1zM290 278h1v1h-1zM290 281h1v1h-1zM290 284h1v1h-1zM290 287h1v1h-1zM290 290h1v1h-1zM290 293h1v1h-1zM290 296h1v1h-1zM290 299h1v1h-1zM290 302h1v1h-1zM290 305h1v1h-1zM290 308h1v1h-1zM290 311h1v1h-1zM290 314h1v1h-1zM290 317h1v1h-1zM290 320h1v1h-1zM290 323h1v1h-1zM290 326h1v1h-1z" fill="#b0b0b0"/>
<path d="M290 329h1v1h-1zM290 332h1v1h-1zM290 335h1v1h-1zM290 338h1v1h-1zM290 341h1v1h-1zM290 344h1v1h-1zM290 347h1v1h-1zM290 350h1v1h-1zM290 353h1v1h-1zM290 356h1v1h-1zM290 359h1v1h-1zM290 362h1v1h-1zM290 365h1v1h-1zM290 368h1v1h-1zM290 371h1v1h-1zM290 374h1v1h-1zM290 377h1v1h-1zM290 380h1v1h-1zM290 383h1v1h-1zM290 386h1v1h-1zM290 389h1v1h-1zM290 392h1v1h-1zM290 395h1v1h-1zM290 398h1v1h-1zM290 401h1v1h-1zM290 404h1v1h-1zM290 407h1v1h-1zM290 410h1v1h-1zM290 413h1v1h-1zM290 416h1v1h-1zM290 419h1v1h-1zM290 422h1v1h-1zM290 425h1v1h-1zM290 428h1v1h-1zM290 431h1v1h-1zM290 434h1v1h-1zM290 437h1v1h-1zM290 440h1v1h-1zM290 443h1v1h-1zM290 446h1v1h-1zM290 449h1v1h-1zM290 452h1v1h-1zM290 455h1v1h-1zM290 458h1v1h-1zM290 461h1v1h-1zM290 464h1v1h-1zM290 467h1v1h-1zM290 470h1v1h-1zM290 473h1v1h-1zM290 476h1v1h-1zM290 479h1v1h-1zM290 482h1v1h-1zM290 485h1v1h-1zM290 488h1v1h-1zM290 491h1v1h-1zM290 494h1v1h-1zM290 497h1v1h-1zM290 500h1v1h-1zM290 503h1v1h-1zM290 506h1v1h-1zM290 509h1v1h-1zM290 512h1v1h-1zM290 515h1v1h-1zM290 518h1v1h-1zM290 521h1v1h-1zM290 524h1v1h-1zM290 527h1v1h-1zM290 530h1v1h-1zM290 533h1v1h-1zM290 536h1v1h-1zM290 539h1v1h-1zM290 542h1v1h-1zM290 545h1v1h-1zM290 548h1v1h-1zM290 551h1v1h-1zM290 554h1v1h-1zM290 557h1v1h-1zM290 560h1v1h-1zM290 563h1v1h-1zM290 566h1v1h-1zM290 569h1v1h-1zM290 572h1v1h-1zM290 575h1v1h-1zM290 578h1v1h-1zM290 581h1v1h-1zM290 584h1v1h-1zM290 587h1v1h-1zM290 590h1v1h-1zM290 593h1v1h-1zM290 596h1v1h-1zM290 599h1v1h-1zM290 602h1v1h-1zM290 605h1v1h-1zM290 608h1v1h-1zM290 611h1v1h-1zM290 614h1v1h-1zM290 617h1v1h-1zM290 620h1v1h-1z" fill="#b0b0b0"/>
<path d="M353 59h1v1h-1zM353 62h1v1h-1zM353 65h1v1h-1zM353 68h1v1h-1zM353 71h1v1h-1zM353 74h1v1h-1zM353 77h1v1h-1zM353 80h1v1h-1zM353 83h1v1h-1zM353 86h1v1h-1zM353 89h1v1h-1zM353 92h1v1h-1zM353 95h1v1h-1zM353 98h1v1h-1zM353 101h1v1h-1zM353 104h1v1h-1zM353 107h1v1h-1zM353 110h1v1h-1zM353 113h1v1h-1zM353 116h1v1h-1zM353 119h1v1h-1zM353 122h1v1h-1zM353 125h1v1h-1zM353 128h1v1h-1zM353 131h1v1h-1zM353 134h1v1h-1zM353 137h1v1h-1zM353 140h1v1h-1zM353 143h1v1h-1zM353 146h1v1h-1zM353 149h1v1h-1zM353 152h1v1h-1zM353 155h1v1h-1zM353 158h1v1h-1zM353 161h1v1h-1zM353 164h1v1h-1zM353 167h1v1h-1zM353 170h1v1h-1zM353 173h1v1h-1zM353 176h1v1h-1zM353 179h1v1h-1zM353 182h1v1h-1zM353 185h1v1h-1zM353 188h1v1h-1zM353 191h1v1h-1zM353 194h1v1h-1zM353 197h1v1h-1zM353 200h1v1h-1zM353 203h1v1h-1zM353 206h1v1h-1zM353 209h1v1h-1zM353 212h1v1h-1zM353 215h1v1h-1zM353 218h1v1h-1zM353 221h1v1h-1zM353 224h1v1h-1zM353 227h1v1h-1zM353 230h1v1h-1zM353 233h1v1h-1zM353 236h1v1h-1zM353 239h1v1h-1zM353 242h1v1h-1zM353 245h1v1h-1zM353 248h1v1h-1zM353 251h1v1h-1zM353 254h1v1h-1zM353 257h1v1h-1zM353 260h1v1h-1zM353 263h1v1h-1zM353 266h1v1h-1zM353 269h1v1h-1zM353 272h1v1h-1zM353 275h1v1h-1zM353 278h1v1h-1zM353 281h1v1h-1zM353 284h1v1h-1zM353 287h1v1h-1zM353 290h1v1h-1zM353 293h1v1h-1zM353 296h1v1h-1zM353 299h1v1h-1zM353 302h1v1h-1zM353 305h1v1h-1zM353 308h1v1h-1zM353 311h1v1h-1zM353 314h1v1h-1zM353 317h1v1h-1zM353 320h1v1h-1zM353 323h1v1h-1zM353 326h1v1h-1z" fill="#b0b0b0"/>
<path d="M353 329h1v1h-1zM353 332h1v1h-1zM353 335h1v1h-1zM353 338h1v1h-1zM353 341h1v1h-1zM353 344h1v1h-1zM353 347h1v1h-1zM353 350h1v1h-1zM353 353h1v1h-1zM353 356h1v1h-1zM353 359h1v1h-1zM353 362h1v1h-1zM353 365h1v1h-1zM353 368h1v1h-1zM353 371h1v1h-1zM353 374h1v1h-1zM353 377h1v1h-1zM353 380h1v1h-1zM353 383h1v1h-1zM353 386h1v1h-1zM353 389h1v1h-1zM353 392h1v1h-1zM353 395h1v1h-1zM353 398h1v1h-1zM353 401h1v1h-1zM353 404h1v1h-1zM353 407h1v1h-1zM353 410h1v1h-1zM353 413h1v1h-1zM353 416h1v1h-1zM353 419h1v1h-1zM353 422h1v1h-1zM353 425h1v1h-1zM353 428h1v1h-1zM353 431h1v1h-1zM353 434h1v1h-1zM353 437h1v1h-1zM353 440h1v1h-1zM353 443h1v1h-1zM353 446h1v1h-1zM353 449h1v1h-1zM353 452h1v1h-1zM353 455h1v1h-1zM353 458h1v1h-1zM353 461h1v1h-1zM353 464h1v1h-1zM353 467h1v1h-1zM353 470h1v1h-1zM353 473h1v1h-1zM353 476h1v1h-1zM353 479h1v1h-1zM353 482h1v1h-1zM353 485h1v1h-1zM353 488h1v1h-1zM353 491h1v1h-1zM353 494h1v1h-1zM353 497h1v1h-1zM353 500h1v1h-1zM353 503h1v1h-1zM353 506h1v1h-1zM353 509h1v1h-1zM353 512h1v1h-1zM353 515h1v1h-1zM353 518h1v1h-1zM353 521h1v1h-1zM353 524h1v1h-1zM353 527h1v1h-1zM353 530h1v1h-1zM353 533h1v1h-1zM353 536h1v1h-1zM353 539h1v1h-1zM353 542h1v1h-1zM353 545h1v1h-1zM353 548h1v1h-1zM353 551h1v1h-1zM353 554h1v1h-1zM353 557h1v1h-1zM353 560h1v1h-1zM353 563h1v1h-1zM353 566h1v1h-1zM353 569h1v1h-1zM353 572h1v1h-1zM353 575h1v1h-1zM353 578h1v1h-1zM353 581h1v1h-1zM353 584h1v1h-1zM353 587h1v1h-1zM353 590h1v1h-1zM353 593h1v1h-1zM353 596h1v1h-1zM353 599h1v1h-1zM353 602h1v1h-1zM353 605h1v1h-1zM353 608h1v1h-1zM353 611h1v1h-1zM353 614h1v1h-1zM353 617h1v1h-1zM353 620h1v1h-1z" fill="#b0b0b0"/>
<path d="M416 59h1v1h-1zM416 62h1v1h-1zM416 65h1v1h-1zM416 68h1v1h-1zM416 71h1v1h-1zM416 74h1v1h-1zM416 77h1v1h-1zM416 80h1v1h-1zM416 83h1v1h-1zM416 86h1v1h-1zM416 89h1v1h-1zM416 92h1v1h-1zM416 95h1v1h-1zM416 98h1v1h-1zM416 101h1v1h-1zM416 104h1v1h-1zM416 107h1v1h-1zM416 110h1v1h-1zM416 113h1v1h-1zM416 116h1v1h-1zM416 119h1v1h-1zM416 122h1v1h-1zM416 125h1v1h-1zM416 128h1v1h-1zM416 131h1v1h-1zM416 134h1v1h-1zM416 137h1v1h-1zM416 140h1v1h-1zM416 143h1v1h-1zM416 146h1v1h-1zM416 149h1v1h-1zM416 152h1v1h-1zM416 155h1v1h-1zM416 158h1v1h-1zM416 161h1v1h-1zM416 164h1v1h-1zM416 167h1v1h-1zM416 170h1v1h-1zM416 173h1v1h-1zM416 176h1v1h-1zM416 179h1v1h-1zM416 182h1v1h-1zM416 185h1v1h-1zM416 188h1v1h-1zM416 191h1v1h-1zM416 194h1v1h-1zM416 197h1v1h-1zM416 200h1v1h-1zM416 203h1v1h-1zM416 206h1v1h-1zM416 209h1v1h-1zM416 212h1v1h-1zM416 215h1v1h-1zM416 218h1v1h-1zM416 221h1v1h-1zM416 224h1v1h-1zM416 227h1v1h-1zM416 230h1v1h-1zM416 233h1v1h-1zM416 236h1v1h-1zM416 239h1v1h-1zM416 242h1v1h-1zM416 245h1v1h-1zM416 248h1v1h-1zM416 251h1v1h-1zM416 254h1v1h-1zM416 257h1v1h-1zM416 260h1v1h-1zM416 263h1v1h-1zM416 266h1v1h-1zM416 269h1v1h-1zM416 272h1v1h-1zM416 275h1v1h-1zM416 278h1v1h-1zM416 281h1v1h-1zM416 284h1v1h-1zM416 287h1v1h-1zM416 290h1v1h-1zM416 293h1v1h-1zM416 296h1v1h-1zM416 299h1v1h-1zM416 302h1v1h-1zM416 305h1v1h-1zM416 308h1v1h-1zM416 311h1v1h-1zM416 314h1v1h-1zM416 317h1v1h-1zM416 320h1v1h-1zM416 323h1v1h-1zM416 326h1v1h-1z" fill="#b0b0b0"/>
<path d="M416 329h1v1h-1zM416 332h1v1h-1zM416 335h1v1h-1zM416 338h1v1h-1zM416 341h1v1h-1zM416 344h1v1h-1zM416 347h1v1h-1zM416 350h1v1h-1zM416 353h1v1h-1zM416 356h1v1h-1zM416 359h1v1h-1zM416 362h1v1h-1zM416 365h1v1h-1zM416 368h1v1h-1zM416 371h1v1h-1zM416 374h1v1h-1zM416 377h1v1h-1zM416 380h1v1h-1zM416 383h1v1h-1zM416 386h1v1h-1zM416 389h1v1h-1zM416 392h1v1h-1zM416 395h1v1h-1zM416 398h1v1h-1zM416 401h1v1h-1zM416 404h1v1h-1zM416 407h1v1h-1zM416 410h1v1h-1zM416 413h1v1h-1zM416 416h1v1h-1zM416 419h1v1h-1zM416 422h1v1h-1zM416 425h1v1h-1zM416 428h1v1h-1zM416 431h1v1h-1zM416 434h1v1h-1zM416 437h1v1h-1zM416 440h1v1h-1zM416 443h1v1h-1zM416 446h1v1h-1zM416 449h1v1h-1zM416 452h1v1h-1zM416 455h1v1h-1zM416 458h1v1h-1zM416 461h1v1h-1zM416 464h1v1h-1zM416 467h1v1h-1zM416 470h1v1h-1zM416 473h1v1h-1zM416 476h1v1h-1zM416 479h1v1h-1zM416 482h1v1h-1zM416 485h1v1h-1zM416 488h1v1h-1zM416 491h1v1h-1zM416 494h1v1h-1zM416 497h1v1h-1zM416 500h1v1h-1zM416 503h1v1h-1zM416 506h1v1h-1zM416 509h1v1h-1zM416 512h1v1h-1zM416 515h1v1h-1zM416 518h1v1h-1zM416 521h1v1h-1zM416 524h1v1h-1zM416 527h1v1h-1zM416 530h1v1h-1zM416 533h1v1h-1zM416 536h1v1h-1zM416 539h1v1h-1zM416 542h1v1h-1zM416 545h1v1h-1zM416 548h1v1h-1zM416 551h1v1h-1zM416 554h1v1h-1zM416 557h1v1h-1zM416 560h1v1h-1zM416 563h1v1h-1zM416 566h1v1h-1zM416 569h1v1h-1zM416 572h1v1h-1zM416 575h1v1h-1zM416 578h1v1h-1zM416 581h1v1h-1zM416 584h1v1h-1zM416 587h1v1h-1zM416 590h1v1h-1zM416 593h1v1h-1zM416 596h1v1h-1zM416 599h1v1h-1zM416 602h1v1h-1zM416 605h1v1h-1zM416 608h1v1h-1zM416 611h1v1h-1zM416 614h1v1h-1zM416 617h1v1h-1zM416 620h1v1h-1z" fill="#b0b0b0"/>
<path d="M479 59h1v1h-1zM479 62h1v1h-1zM479 65h1v1h-1zM479 68h1v1h-1zM479 71h1v1h-1zM479 74h1v1h-1zM479 77h1v1h-1zM479 80h1v1h-1zM479 83h1v1h-1zM479 86h1v1h-1zM479 89h1v1h-1zM479 92h1v1h-1zM479 95h1v1h-1zM479 98h1v1h-1zM479 101h1v1h-1zM479 104h1v1h-1zM479 107h1v1h-1zM479 110h1v1h-1zM479 113h1v1h-1zM479 116h1v1h-1zM479 119h1v1h-1zM479 122h1v1h-1zM479 125h1v1h-1zM479 128h1v1h-1zM479 131h1v1h-1zM479 134h1v1h-1zM479 137h1v1h-1zM479 140h1v1h-1zM479 143h1v1h-1zM479 146h1v1h-1zM479 149h1v1h-1zM479 152h1v1h-1zM479 155h1v1h-1zM479 158h1v1h-1zM479 161h1v1h-1zM479 164h1v1h-1zM479 167h1v1h-1zM479 170h1v1h-1zM479 173h1v1h-1zM479 176h1v1h-1zM479 179h1v1h-1zM479 182h1v1h-1zM479 185h1v1h-1zM479 188h1v1h-1zM479 191h1v1h-1zM479 194h1v1h-1zM479 197h1v1h-1zM479 200h1v1h-1zM479 203h1v1h-1zM479 206h1v1h-1zM479 209h1v1h-1zM479 212h1v1h-1zM479 215h1v1h-1zM479 218h1v1h-1zM479 221h1v1h-1zM479 224h1v1h-1zM479 227h1v1h-1zM479 230h1v1h-1zM479 233h1v1h-1zM479 236h1v1h-1zM479 239h1v1h-1zM479 242h1v1h-1zM479 245h1v1h-1zM479 248h1v1h-1zM479 251h1v1h-1zM479 254h1v1h-1zM479 257h1v1h-1zM479 260h1v1h-1zM479 263h1v1h-1zM479 266h1v1h-1zM479 269h1v1h-1zM479 272h1v1h-1zM479 275h1v1h-1zM479 278h1v1h-1zM479 281h1v1h-1zM479 284h1v1h-1zM479 287h1v1h-1zM479 290h1v1h-1zM479 293h1v1h-1zM479 296h1v1h-1zM479 299h1v1h-1zM479 302h1v1h-1zM479 305h1v1h-1zM479 308h1v1h-1zM479 311h1v1h-1zM479 314h1v1h-1zM479 317h1v1h-1zM479 320h1v1h-1zM479 323h1v1h-1zM479 326h1v1h-1z" fill="#b0b0b0"/>
<path d="M479 329h1v1h-1zM479 332h1v1h-1zM479 335h1v1h-1zM479 338h1v1h-1zM479 341h1v1h-1zM479 344h1v1h-1zM479 347h1v1h-1zM479 350h1v1h-1zM479 353h1v1h-1zM479 356h1v1h-1zM479 359h1v1h-1zM479 362h1v1h-1zM479 365h1v1h-1zM479 368h1v1h-1zM479 371h1v1h-1zM479 374h1v1h-1zM479 377h1v1h-1zM479 380h1v1h-1zM479 383h1v1h-1zM479 386h1v1h-1zM479 389h1v1h-1zM479 392h1v1h-1zM479 395h1v1h-1zM479 398h1v1h-1zM479 401h1v1h-1zM479 404h1v1h-1zM479 407h1v1h-1zM479 410h1v1h-1zM479 413h1v1h-1zM479 416h1v1h-1zM479 419h1v1h-1zM479 422h1v1h-1zM479 425h1v1h-1zM479 428h1v1h-1zM479 431h1v1h-1zM479 434h1v1h-1zM479 437h1v1h-1zM479 440h1v1h-1zM479 443h1v1h-1zM479 446h1v1h-1zM479 449h1v1h-1zM479 452h1v1h-1zM479 455h1v1h-1zM479 458h1v1h-1zM479 461h1v1h-1zM479 464h1v1h-1zM479 467h1v1h-1zM479 470h1v1h-1zM479 473h1v1h-1zM479 476h1v1h-1zM479 479h1v1h-1zM479 482h1v1h-1zM479 485h1v1h-1zM479 488h1v1h-1zM479 491h1v1h-1zM479 494h1v1h-1zM479 497h1v1h-1zM479 500h1v1h-1zM479 503h1v1h-1zM479 506h1v1h-1zM479 509h1v1h-1zM479 512h1v1h-1zM479 515h1v1h-1zM479 518h1v1h-1zM479 521h1v1h-1zM479 524h1v1h-1zM479 527h1v1h-1zM479 530h1v1h-1zM479 533h1v1h-1zM479 536h1v1h-1zM479 539h1v1h-1zM479 542h1v1h-1zM479 545h1v1h-1zM479 548h1v1h-1zM479 551h1v1h-1zM479 554h1v1h-1zM479 557h1v1h-1zM479 560h1v1h-1zM479 563h1v1h-1zM479 566h1v1h-1zM479 569h1v1h-1zM479 572h1v1h-1zM479 575h1v1h-1zM479 578h1v1h-1zM479 581h1v1h-1zM479 584h1v1h-1zM479 587h1v1h-1zM479 590h1v1h-1zM479 593h1v1h-1zM479 596h1v1h-1zM479 599h1v1h-1zM479 602h1v1h-1zM479 605h1v1h-1zM479 608h1v1h-1zM479 611h1v1h-1zM479 614h1v1h-1zM479 617h1v1h-1zM479 620h1v1h-1z" fill="#b0b0b0"/>
<path d="M542 59h1v1h-1zM542 62h1v1h-1zM542 65h1v1h-1zM542 68h1v1h-1zM542 71h1v1h-1zM542 74h1v1h-1zM542 77h1v1h-1zM542 80h1v1h-1zM542 83h1v1h-1zM542 86h1v1h-1zM542 89h1v1h-1zM542 92h1v1h-1zM542 95h1v1h-1zM542 98h1v1h-1zM542 101h1v1h-1zM542 104h1v1h-1zM542 107h1v1h-1zM542 110h1v1h-1zM542 113h1v1h-1zM542 116h1v1h-1zM542 119h1v1h-1zM542 122h1v1h-1zM542 125h1v1h-1zM542 128h1v1h-1zM542 131h1v1h-1zM542 134h1v1h-1zM542 137h1v1h-1zM542 140h1v1h-1zM542 143h1v1h-1zM542 146h1v1h-1zM542 149h1v1h-1zM542 152h1v1h-1zM542 155h1v1h-1zM542 158h1v1h-1zM542 161h1v1h-1zM542 164h1v1h-1zM542 167h1v1h-1zM542 170h1v1h-1zM542 173h1v1h-1zM542 176h1v1h-1zM542 179h1v1h-1zM542 182h1v1h-1zM542 185h1v1h-1zM542 188h1v1h-1zM542 191h1v1h-1zM542 194h1v1h-1zM542 197h1v1h-1zM542 200h1v1h-1zM542 203h1v1h-1zM542 206h1v1h-1zM542 209h1v1h-1zM542 212h1v1h-1zM542 215h1v1h-1zM542 218h1v1h-1zM542 221h1v1h-1zM542 224h1v1h-1zM542 227h1v1h-1zM542 230h1v1h-1zM542 233h1v1h-1zM542 236h1v1h-1zM542 239h1v1h-1zM542 242h1v1h-1zM542 245h1v1h-1zM542 248h1v1h-1zM542 251h1v1h-1zM542 254h1v1h-1zM542 257h1v1h-1zM542 260h1v1h-1zM542 263h1v1h-1zM542 266h1v1h-1zM542 269h1v1h-1zM542 272h1v1h-1zM542 275h1v1h-1zM542 278h1v1h-1zM542 281h1v1h-1zM542 284h1v1h-1zM542 287h1v1h-1zM542 290h1v1h-1zM542 293h1v1h-1zM542 296h1v1h-1zM542 299h1v1h-1zM542 302h1v1h-1zM542 305h1v1h-1zM542 308h1v1h-1zM542 311h1v1h-1zM542 314h1v1h-1zM542 317h1v1h-1zM542 320h1v1h-1zM542 323h1v1h-1zM542 326h1v1h-1z" fill="#b0b0b0"/>
<path d="M542 329h1v1h-1zM542 332h1v1h-1zM542 335h1v1h-1zM542 338h1v1h-1zM542 341h1v1h-1zM542 344h1v1h-1zM542 347h1v1h-1zM542 350h1v1h-1zM542 353h1v1h-1zM542 356h1v1h-1zM542 359h1v1h-1zM542 362h1v1h-1zM542 365h1v1h-1zM542 368h1v1h-1zM542 371h1v1h-1zM542 374h1v1h-1zM542 377h1v1h-1zM542 380h1v1h-1zM542 383h1v1h-1zM542 386h1v1h-1zM542 389h1v1h-1zM542 392h1v1h-1zM542 395h1v1h-1zM542 398h1v1h-1zM542 401h1v1h-1zM542 404h1v1h-1zM542 407h1v1h-1zM542 410h1v1h-1zM542 413h1v1h-1zM542 416h1v1h-1zM542 419h1v1h-1zM542 422h1v1h-1zM542 425h1v1h-1zM542 428h1v1h-1zM542 431h1v1h-1zM542 434h1v1h-1zM542 437h1v1h-1zM542 440h1v1h-1zM542 443h1v1h-1zM542 446h1v1h-1zM542 449h1v1h-1zM542 452h1v1h-1zM542 455h1v1h-1zM542 458h1v1h-1zM542 461h1v1h-1zM542 464h1v1h-1zM542 467h1v1h-1zM542 470h1v1h-1zM542 473h1v1h-1zM542 476h1v1h-1zM542 479h1v1h-1zM542 482h1v1h-1zM542 485h1v1h-1zM542 488h1v1h-1zM542 491h1v1h-1zM542 494h1v1h-1zM542 497h1v1h-1zM542 500h1v1h-1zM542 503h1v1h-1zM542 506h1v1h-1zM542 509h1v1h-1zM542 512h1v1h-1zM542 515h1v1h-1zM542 518h1v1h-1zM542 521h1v1h-1zM542 524h1v1h-1zM542 527h1v1h-1zM542 530h1v1h-1zM542 533h1v1h-1zM542 536h1v1h-1zM542 539h1v1h-1zM542 542h1v1h-1zM542 545h1v1h-1zM542 548h1v1h-1zM542 551h1v1h-1zM542 554h1v1h-1zM542 557h1v1h-1zM542 560h1v1h-1zM542 563h1v1h-1zM542 566h1v1h-1zM542 569h1v1h-1zM542 572h1v1h-1zM542 575h1v1h-1zM542 578h1v1h-1zM542 581h1v1h-1zM542 584h1v1h-1zM542 587h1v1h-1zM542 590h1v1h-1zM542 593h1v1h-1zM542 596h1v1h-1zM542 599h1v1h-1zM542 602h1v1h-1zM542 605h1v1h-1zM542 608h1v1h-1zM542 611h1v1h-1zM542 614h1v1h-1zM542 617h1v1h-1zM542 620h1v1h-1z" fill="#b0b0b0"/>
<path d="M605 59h1v1h-1zM605 62h1v1h-1zM605 65h1v1h-1zM605 68h1v1h-1zM605 71h1v1h-1zM605 74h1v1h-1zM605 77h1v1h-1zM605 80h1v1h-1zM605 83h1v1h-1zM605 86h1v1h-1zM605 89h1v1h-1zM605 92h1v1h-1zM605 95h1v1h-1zM605 98h1v1h-1zM605 101h1v1h-1zM605 104h1v1h-1zM605 107h1v1h-1zM605 110h1v1h-1zM605 113h1v1h-1zM605 116h1v1h-1zM605 119h1v1h-1zM605 122h1v1h-1zM605 125h1v1h-1zM605 128h1v1h-1zM605 131h1v1h-1zM605 134h1v1h-1zM605 137h1v1h-1zM605 140h1v1h-1zM605 143h1v1h-1zM605 146h1v1h-1zM605 149h1v1h-1zM605 152h1v1h-1zM605 155h1v1h-1zM605 158h1v1h-1zM605 161h1v1h-1zM605 164h1v1h-1zM605 167h1v1h-1zM605 170h1v1h-1zM605 173h1v1h-1zM605 176h1v1h-1zM605 179h1v1h-1zM605 182h1v1h-1zM605 185h1v1h-1zM605 188h1v1h-1zM605 191h1v1h-1zM605 194h1v1h-1zM605 197h1v1h-1zM605 200h1v1h-1zM605 203h1v1h-1zM605 206h1v1h-1zM605 209h1v1h-1zM605 212h1v1h-1zM605 215h1v1h-1zM605 218h1v1h-1zM605 221h1v1h-1zM605 224h1v1h-1zM605 227h1v1h-1zM605 230h1v1h-1zM605 233h1v1h-1zM605 236h1v1h-1zM605 239h1v1h-1zM605 242h1v1h-1zM605 245h1v1h-1zM605 248h1v1h-1zM605 251h1v1h-1zM605 254h1v1h-1zM605 257h1v1h-1zM605 260h1v1h-1zM605 263h1v1h-1zM605 266h1v1h-1zM605 269h1v1h-1zM605 272h1v1h-1zM605 275h1v1h-1zM605 278h1v1h-1zM605 281h1v1h-1zM605 284h1v1h-1zM605 287h1v1h-1zM605 290h1v1h-1zM605 293h1v1h-1zM605 296h1v1h-1zM605 299h1v1h-1zM605 302h1v1h-1zM605 305h1v1h-1zM605 308h1v1h-1zM605 311h1v1h-1zM605 314h1v1h-1zM605 317h1v1h-1zM605 320h1v1h-1zM605 323h1v1h-1zM605 326h1v1h-1z" fill="#b0b0b0"/>
<path d="M605 329h1v1h-1zM605 332h1v1h-1zM605 335h1v1h-1zM605 338h1v1h-1zM605 341h1v1h-1zM605 344h1v1h-1zM605 347h1v1h-1zM605 350h1v1h-1zM605 353h1v1h-1zM605 356h1v1h-1zM605 359h1v1h-1zM605 362h1v1h-1zM605 365h1v1h-1zM605 368h1v1h-1zM605 371h1v1h-1zM605 374h1v1h-1zM605 377h1v1h-1zM605 380h1v1h-1zM605 383h1v1h-1zM605 386h1v1h-1zM605 389h1v1h-1zM605 392h1v1h-1zM605 395h1v1h-1zM605 398h1v1h-1zM605 401h1v1h-1zM605 404h1v1h-1zM605 407h1v1h-1zM605 410h1v1h-1zM605 413h1v1h-1zM605 416h1v1h-1zM605 419h1v1h-1zM605 422h1v1h-1zM605 425h1v1h-1zM605 428h1v1h-1zM605 431h1v1h-1zM605 434h1v1h-1zM605 437h1v1h-1zM605 440h1v1h-1zM605 443h1v1h-1zM605 446h1v1h-1zM605 449h1v1h-1zM605 452h1v1h-1zM605 455h1v1h-1zM605 458h1v1h-1zM605 461h1v1h-1zM605 464h1v1h-1zM605 467h1v1h-1zM605 470h1v1h-1zM605 473h1v1h-1zM605 476h1v1h-1zM605 479h1v1h-1zM605 482h1v1h-1zM605 485h1v1h-1zM605 488h1v1h-1zM605 491h1v1h-1zM605 494h1v1h-1zM605 497h1v1h-1zM605 500h1v1h-1zM605 503h1v1h-1zM605 506h1v1h-1zM605 509h1v1h-1zM605 512h1v1h-1zM605 515h1v1h-1zM605 518h1v1h-1zM605 521h1v1h-1zM605 524h1v1h-1zM605 527h1v1h-1zM605 530h1v1h-1zM605 533h1v1h-1zM605 536h1v1h-1zM605 539h1v1h-1zM605 542h1v1h-1zM605 545h1v1h-1zM605 548h1v1h-1zM605 551h1v1h-1zM605 554h1v1h-1zM605 557h1v1h-1zM605 560h1v1h-1zM605 563h1v1h-1zM605 566h1v1h-1zM605 569h1v1h-1zM605 572h1v1h-1zM605 575h1v1h-1zM605 578h1v1h-1zM605 581h1v1h-1zM605 584h1v1h-1zM605 587h1v1h-1zM605 590h1v1h-1zM605 593h1v1h-1zM605 596h1v1h-1zM605 599h1v1h-1zM605 602h1v1h-1zM605 605h1v1h-1zM605 608h1v1h-1zM605 611h1v1h-1zM605 614h1v1h-1zM605 617h1v1h-1zM605 620h1v1h-1z" fill="#b0b0b0"/>
<rect x="671" y="368" width="1" height="1" fill="#a8a8a8"/><rect x="674" y="368" width="1" height="1" fill="#a8a8a8"/>
<rect x="671" y="413" width="1" height="1" fill="#a8a8a8"/><rect x="674" y="413" width="1" height="1" fill="#a8a8a8"/>
<rect x="671" y="458" width="1" height="1" fill="#a8a8a8"/><rect x="674" y="458" width="1" height="1" fill="#a8a8a8"/>
<rect x="671" y="503" width="1" height="1" fill="#a8a8a8"/><rect x="674" y="503" width="1" height="1" fill="#a8a8a8"/>
<rect x="671" y="549" width="1" height="1" fill="#a8a8a8"/><rect x="674" y="549" width="1" height="1" fill="#a8a8a8"/>
<rect x="671" y="594" width="1" height="1" fill="#a8a8a8"/><rect x="674" y="594" width="1" height="1" fill="#a8a8a8"/>
</g>
<g shape-rendering="crispEdges">
<rect x="10" y="30" width="2" height="593" fill="#c0c0c0"/>
<rect x="669" y="30" width="2" height="593" fill="#c0c0c0"/>
<rect x="10" y="325" width="661" height="2" fill="#c0c0c0"/>
<rect x="10" y="621" width="661" height="2" fill="#c0c0c0"/>
</g>
<g shape-rendering="crispEdges">
<rect x="15" y="146" width="5" height="5" fill="#5c0000"/>
<rect x="16" y="147" width="3" height="3" fill="#c80000"/>
<rect x="24" y="151" width="1" height="3" fill="#555"/>
<rect x="22" y="144" width="5" height="7" fill="#5c0000"/>
<rect x="23" y="145" width="3" height="5" fill="#c80000"/>
<rect x="29" y="149" width="5" height="11" fill="#5c0000"/>
<rect x="30" y="150" width="3" height="9" fill="#c80000"/>
<rect x="36" y="153" width="5" height="20" fill="#5c0000"/>
<rect x="37" y="154" width="3" height="18" fill="#c80000"/>
<rect x="45" y="169" width="1" height="5" fill="#555"/>
<rect x="45" y="183" width="1" height="3" fill="#555"/>
<rect x="43" y="174" width="5" height="9" fill="#5c0000"/>
<rect x="44" y="175" width="3" height="7" fill="#c80000"/>
<rect x="52" y="186" width="1" height="5" fill="#555"/>
<rect x="50" y="183" width="5" height="3" fill="#5c0000"/>
<rect x="51" y="184" width="3" height="1" fill="#c80000"/>
<rect x="57" y="177" width="5" height="6" fill="#17434f"/>
<rect x="58" y="178" width="3" height="4" fill="#358a9f"/>
<rect x="64" y="184" width="5" height="21" fill="#5c0000"/>
<rect x="65" y="185" width="3" height="19" fill="#c80000"/>
<rect x="73" y="194" width="1" height="2" fill="#555"/>
<rect x="71" y="196" width="5" height="11" fill="#17434f"/>
<rect x="72" y="197" width="3" height="9" fill="#358a9f"/>
<rect x="80" y="194" width="1" height="2" fill="#555"/>
<rect x="78" y="196" width="5" height="4" fill="#5c0000"/>
<rect x="79" y="197" width="3" height="2" fill="#c80000"/>
<rect x="85" y="204" width="5" height="8" fill="#5c0000"/>
<rect x="86" y="205" width="3" height="6" fill="#c80000"/>
<rect x="94" y="222" width="1" height="5" fill="#555"/>
<rect x="92" y="212" width="5" height="10" fill="#5c0000"/>
<rect x="93" y="213" width="3" height="8" fill="#c80000"/>
<rect x="101" y="218" width="1" height="3" fill="#555"/>
<rect x="99" y="221" width="5" height="3" fill="#17434f"/>
<rect x="100" y="222" width="3" height="1" fill="#358a9f"/>
<rect x="108" y="230" width="1" height="4" fill="#555"/>
<rect x="106" y="217" width="5" height="13" fill="#5c0000"/>
<rect x="107" y="218" width="3" height="11" fill="#c80000"/>
<rect x="115" y="224" width="1" height="3" fill="#555"/>
<rect x="113" y="227" width="5" height="10" fill="#5c0000"/>
<rect x="114" y="228" width="3" height="8" fill="#c80000"/>
<rect x="122" y="217" width="1" height="3" fill="#555"/>
<rect x="120" y="220" width="5" height="18" fill="#17434f"/>
<rect x="121" y="221" width="3" height="16" fill="#358a9f"/>
<rect x="129" y="218" width="1" height="4" fill="#555"/>
<rect x="129" y="227" width="1" height="3" fill="#555"/>
<rect x="127" y="222" width="5" height="5" fill="#5c0000"/>
<rect x="128" y="223" width="3" height="3" fill="#c80000"/>
<rect x="136" y="221" width="1" height="8" fill="#555"/>
<rect x="134" y="229" width="5" height="4" fill="#5c0000"/>
<rect x="135" y="230" width="3" height="2" fill="#c80000"/>
<rect x="143" y="232" width="1" height="4" fill="#555"/>
<rect x="141" y="228" width="5" height="4" fill="#17434f"/>
<rect x="142" y="229" width="3" height="2" fill="#358a9f"/>
<rect x="150" y="217" width="1" height="8" fill="#555"/>
<rect x="148" y="225" width="5" height="32" fill="#5c0000"/>
<rect x="149" y="226" width="3" height="30" fill="#c80000"/>
<rect x="157" y="252" width="1" height="3" fill="#555"/>
<rect x="157" y="258" width="1" height="1" fill="#555"/>
<rect x="155" y="255" width="5" height="3" fill="#5c0000"/>
<rect x="156" y="256" width="3" height="1" fill="#c80000"/>
<rect x="164" y="251" width="1" height="1" fill="#555"/>
<rect x="164" y="256" width="1" height="4" fill="#555"/>
<rect x="162" y="252" width="5" height="4" fill="#17434f"/>
<rect x="163" y="253" width="3" height="2" fill="#358a9f"/>
<rect x="171" y="247" width="1" height="7" fill="#555"/>
<rect x="171" y="257" width="1" height="8" fill="#555"/>
<rect x="169" y="254" width="5" height="3" fill="#17434f"/>
<rect x="170" y="255" width="3" height="1" fill="#358a9f"/>
<rect x="178" y="252" width="1" height="5" fill="#555"/>
<rect x="176" y="257" width="5" height="19" fill="#5c0000"/>
<rect x="177" y="258" width="3" height="17" fill="#c80000"/>
<rect x="185" y="264" width="1" height="5" fill="#555"/>
<rect x="185" y="274" width="1" height="2" fill="#555"/>
<rect x="183" y="269" width="5" height="5" fill="#17434f"/>
<rect x="184" y="270" width="3" height="3" fill="#358a9f"/>
<rect x="190" y="276" width="5" height="14" fill="#5c0000"/>
<rect x="191" y="277" width="3" height="12" fill="#c80000"/>
<rect x="199" y="282" width="1" height="3" fill="#555"/>
<rect x="199" y="290" width="1" height="4" fill="#555"/>
<rect x="197" y="285" width="5" height="5" fill="#17434f"/>
<rect x="198" y="286" width="3" height="3" fill="#358a9f"/>
<rect x="206" y="264" width="1" height="8" fill="#555"/>
<rect x="206" y="283" width="1" height="10" fill="#555"/>
<rect x="204" y="272" width="5" height="11" fill="#17434f"/>
<rect x="205" y="273" width="3" height="9" fill="#358a9f"/>
<rect x="213" y="264" width="1" height="4" fill="#555"/>
<rect x="211" y="268" width="5" height="5" fill="#17434f"/>
<rect x="212" y="269" width="3" height="3" fill="#358a9f"/>
<rect x="220" y="260" width="1" height="2" fill="#555"/>
<rect x="218" y="262" width="5" height="14" fill="#5c0000"/>
<rect x="219" y="263" width="3" height="12" fill="#c80000"/>
<rect x="227" y="273" width="1" height="3" fill="#555"/>
<rect x="227" y="281" width="1" height="5" fill="#555"/>
<rect x="225" y="276" width="5" height="5" fill="#5c0000"/>
<rect x="226" y="277" width="3" height="3" fill="#c80000"/>
<rect x="234" y="307" width="1" height="2" fill="#555"/>
<rect x="232" y="278" width="5" height="29" fill="#5c0000"/>
<rect x="233" y="279" width="3" height="27" fill="#c80000"/>
<rect x="241" y="298" width="1" height="3" fill="#555"/>
<rect x="241" y="306" width="1" height="3" fill="#555"/>
<rect x="239" y="301" width="5" height="5" fill="#17434f"/>
<rect x="240" y="302" width="3" height="3" fill="#358a9f"/>
<rect x="248" y="295" width="1" height="3" fill="#555"/>
<rect x="248" y="301" width="1" height="8" fill="#555"/>
<rect x="246" y="298" width="5" height="3" fill="#5c0000"/>
<rect x="247" y="299" width="3" height="1" fill="#c80000"/>
<rect x="255" y="280" width="1" height="4" fill="#555"/>
<rect x="253" y="284" width="5" height="17" fill="#17434f"/>
<rect x="254" y="285" width="3" height="15" fill="#358a9f"/>
<rect x="262" y="275" width="1" height="10" fill="#555"/>
<rect x="262" y="319" width="1" height="1" fill="#555"/>
<rect x="260" y="285" width="5" height="34" fill="#5c0000"/>
<rect x="261" y="286" width="3" height="32" fill="#c80000"/>
<rect x="269" y="307" width="1" height="3" fill="#555"/>
<rect x="269" y="320" width="1" height="2" fill="#555"/>
<rect x="267" y="310" width="5" height="10" fill="#17434f"/>
<rect x="268" y="311" width="3" height="8" fill="#358a9f"/>
<rect x="276" y="312" width="1" height="7" fill="#555"/>
<rect x="274" y="306" width="5" height="6" fill="#17434f"/>
<rect x="275" y="307" width="3" height="4" fill="#358a9f"/>
<rect x="283" y="307" width="1" height="5" fill="#555"/>
<rect x="281" y="302" width="5" height="5" fill="#17434f"/>
<rect x="282" y="303" width="3" height="3" fill="#358a9f"/>
<rect x="290" y="275" width="1" height="4" fill="#555"/>
<rect x="290" y="302" width="1" height="19" fill="#555"/>
<rect x="288" y="279" width="5" height="23" fill="#17434f"/>
<rect x="289" y="280" width="3" height="21" fill="#358a9f"/>
<rect x="297" y="280" width="1" height="4" fill="#555"/>
<rect x="295" y="268" width="5" height="12" fill="#17434f"/>
<rect x="296" y="269" width="3" height="10" fill="#358a9f"/>
<rect x="304" y="284" width="1" height="2" fill="#555"/>
<rect x="302" y="275" width="5" height="9" fill="#5c0000"/>
<rect x="303" y="276" width="3" height="7" fill="#c80000"/>
<rect x="311" y="279" width="1" height="5" fill="#555"/>
<rect x="311" y="290" width="1" height="4" fill="#555"/>
<rect x="309" y="284" width="5" height="6" fill="#5c0000"/>
<rect x="310" y="285" width="3" height="4" fill="#c80000"/>
<rect x="318" y="245" width="1" height="3" fill="#555"/>
<rect x="316" y="248" width="5" height="43" fill="#17434f"/>
<rect x="317" y="249" width="3" height="41" fill="#358a9f"/>
<rect x="325" y="245" width="1" height="4" fill="#555"/>
<rect x="325" y="252" width="1" height="3" fill="#555"/>
<rect x="323" y="249" width="5" height="3" fill="#17434f"/>
<rect x="324" y="250" width="3" height="1" fill="#358a9f"/>
<rect x="332" y="254" width="1" height="8" fill="#555"/>
<rect x="330" y="249" width="5" height="5" fill="#5c0000"/>
<rect x="331" y="250" width="3" height="3" fill="#c80000"/>
<rect x="339" y="241" width="1" height="5" fill="#555"/>
<rect x="339" y="253" width="1" height="9" fill="#555"/>
<rect x="337" y="246" width="5" height="7" fill="#17434f"/>
<rect x="338" y="247" width="3" height="5" fill="#358a9f"/>
<rect x="346" y="245" width="1" height="4" fill="#555"/>
<rect x="346" y="259" width="1" height="9" fill="#555"/>
<rect x="344" y="249" width="5" height="10" fill="#5c0000"/>
<rect x="345" y="250" width="3" height="8" fill="#c80000"/>
<rect x="353" y="242" width="1" height="1" fill="#555"/>
<rect x="351" y="243" width="5" height="19" fill="#17434f"/>
<rect x="352" y="244" width="3" height="17" fill="#358a9f"/>
<rect x="358" y="231" width="5" height="13" fill="#17434f"/>
<rect x="359" y="232" width="3" height="11" fill="#358a9f"/>
<rect x="367" y="222" width="1" height="8" fill="#555"/>
<rect x="367" y="233" width="1" height="3" fill="#555"/>
<rect x="365" y="230" width="5" height="3" fill="#17434f"/>
<rect x="366" y="231" width="3" height="1" fill="#358a9f"/>
<rect x="374" y="211" width="1" height="3" fill="#555"/>
<rect x="374" y="232" width="1" height="3" fill="#555"/>
<rect x="372" y="214" width="5" height="18" fill="#17434f"/>
<rect x="373" y="215" width="3" height="16" fill="#358a9f"/>
<rect x="381" y="207" width="1" height="7" fill="#555"/>
<rect x="381" y="221" width="1" height="4" fill="#555"/>
<rect x="379" y="214" width="5" height="7" fill="#5c0000"/>
<rect x="380" y="215" width="3" height="5" fill="#c80000"/>
<rect x="388" y="229" width="1" height="3" fill="#555"/>
<rect x="386" y="217" width="5" height="12" fill="#17434f"/>
<rect x="387" y="218" width="3" height="10" fill="#358a9f"/>
<rect x="395" y="209" width="1" height="8" fill="#555"/>
<rect x="395" y="221" width="1" height="4" fill="#555"/>
<rect x="393" y="217" width="5" height="4" fill="#5c0000"/>
<rect x="394" y="218" width="3" height="2" fill="#c80000"/>
<rect x="402" y="204" width="1" height="15" fill="#555"/>
<rect x="400" y="219" width="5" height="8" fill="#5c0000"/>
<rect x="401" y="220" width="3" height="6" fill="#c80000"/>
<rect x="409" y="222" width="1" height="3" fill="#555"/>
<rect x="409" y="228" width="1" height="5" fill="#555"/>
<rect x="407" y="225" width="5" height="3" fill="#17434f"/>
<rect x="408" y="226" width="3" height="1" fill="#358a9f"/>
<rect x="416" y="244" width="1" height="2" fill="#555"/>
<rect x="414" y="232" width="5" height="12" fill="#5c0000"/>
<rect x="415" y="233" width="3" height="10" fill="#c80000"/>
<rect x="421" y="223" width="5" height="21" fill="#17434f"/>
<rect x="422" y="224" width="3" height="19" fill="#358a9f"/>
<rect x="430" y="207" width="1" height="16" fill="#555"/>
<rect x="430" y="248" width="1" height="2" fill="#555"/>
<rect x="428" y="223" width="5" height="25" fill="#5c0000"/>
<rect x="429" y="224" width="3" height="23" fill="#c80000"/>
<rect x="437" y="242" width="1" height="4" fill="#555"/>
<rect x="435" y="246" width="5" height="12" fill="#5c0000"/>
<rect x="436" y="247" width="3" height="10" fill="#c80000"/>
<rect x="444" y="252" width="1" height="3" fill="#555"/>
<rect x="444" y="263" width="1" height="6" fill="#555"/>
<rect x="442" y="255" width="5" height="8" fill="#5c0000"/>
<rect x="443" y="256" width="3" height="6" fill="#c80000"/>
<rect x="451" y="247" width="1" height="6" fill="#555"/>
<rect x="449" y="253" width="5" height="11" fill="#17434f"/>
<rect x="450" y="254" width="3" height="9" fill="#358a9f"/>
<rect x="458" y="191" width="1" height="9" fill="#555"/>
<rect x="456" y="200" width="5" height="52" fill="#17434f"/>
<rect x="457" y="201" width="3" height="50" fill="#358a9f"/>
<rect x="465" y="194" width="1" height="4" fill="#555"/>
<rect x="465" y="201" width="1" height="3" fill="#555"/>
<rect x="463" y="198" width="5" height="3" fill="#17434f"/>
<rect x="464" y="199" width="3" height="1" fill="#358a9f"/>
<rect x="472" y="189" width="1" height="5" fill="#555"/>
<rect x="472" y="203" width="1" height="3" fill="#555"/>
<rect x="470" y="194" width="5" height="9" fill="#5c0000"/>
<rect x="471" y="195" width="3" height="7" fill="#c80000"/>
<rect x="479" y="188" width="1" height="14" fill="#555"/>
<rect x="479" y="205" width="1" height="2" fill="#555"/>
<rect x="477" y="202" width="5" height="3" fill="#5c0000"/>
<rect x="478" y="203" width="3" height="1" fill="#c80000"/>
<rect x="486" y="172" width="1" height="6" fill="#555"/>
<rect x="484" y="178" width="5" height="26" fill="#17434f"/>
<rect x="485" y="179" width="3" height="24" fill="#358a9f"/>
<rect x="493" y="180" width="1" height="10" fill="#555"/>
<rect x="491" y="166" width="5" height="14" fill="#17434f"/>
<rect x="492" y="167" width="3" height="12" fill="#358a9f"/>
<rect x="500" y="153" width="1" height="9" fill="#555"/>
<rect x="498" y="162" width="5" height="4" fill="#17434f"/>
<rect x="499" y="163" width="3" height="2" fill="#358a9f"/>
<rect x="507" y="159" width="1" height="2" fill="#555"/>
<rect x="507" y="165" width="1" height="12" fill="#555"/>
<rect x="505" y="161" width="5" height="4" fill="#5c0000"/>
<rect x="506" y="162" width="3" height="2" fill="#c80000"/>
<rect x="514" y="137" width="1" height="4" fill="#555"/>
<rect x="514" y="164" width="1" height="3" fill="#555"/>
<rect x="512" y="141" width="5" height="23" fill="#17434f"/>
<rect x="513" y="142" width="3" height="21" fill="#358a9f"/>
<rect x="521" y="130" width="1" height="7" fill="#555"/>
<rect x="519" y="137" width="5" height="5" fill="#17434f"/>
<rect x="520" y="138" width="3" height="3" fill="#358a9f"/>
<rect x="528" y="126" width="1" height="7" fill="#555"/>
<rect x="528" y="142" width="1" height="7" fill="#555"/>
<rect x="526" y="133" width="5" height="9" fill="#17434f"/>
<rect x="527" y="134" width="3" height="7" fill="#358a9f"/>
<rect x="535" y="122" width="1" height="12" fill="#555"/>
<rect x="535" y="138" width="1" height="6" fill="#555"/>
<rect x="533" y="134" width="5" height="4" fill="#5c0000"/>
<rect x="534" y="135" width="3" height="2" fill="#c80000"/>
<rect x="542" y="136" width="1" height="5" fill="#555"/>
<rect x="540" y="114" width="5" height="22" fill="#17434f"/>
<rect x="541" y="115" width="3" height="20" fill="#358a9f"/>
<rect x="549" y="107" width="1" height="7" fill="#555"/>
<rect x="549" y="117" width="1" height="6" fill="#555"/>
<rect x="547" y="114" width="5" height="3" fill="#17434f"/>
<rect x="548" y="115" width="3" height="1" fill="#358a9f"/>
<rect x="556" y="119" width="1" height="2" fill="#555"/>
<rect x="556" y="127" width="1" height="3" fill="#555"/>
<rect x="554" y="121" width="5" height="6" fill="#5c0000"/>
<rect x="555" y="122" width="3" height="4" fill="#c80000"/>
<rect x="561" y="108" width="5" height="19" fill="#17434f"/>
<rect x="562" y="109" width="3" height="17" fill="#358a9f"/>
<rect x="570" y="97" width="1" height="4" fill="#555"/>
<rect x="570" y="109" width="1" height="17" fill="#555"/>
<rect x="568" y="101" width="5" height="8" fill="#17434f"/>
<rect x="569" y="102" width="3" height="6" fill="#358a9f"/>
<rect x="577" y="90" width="1" height="4" fill="#555"/>
<rect x="575" y="94" width="5" height="10" fill="#17434f"/>
<rect x="576" y="95" width="3" height="8" fill="#358a9f"/>
<rect x="584" y="88" width="1" height="6" fill="#555"/>
<rect x="582" y="94" width="5" height="4" fill="#5c0000"/>
<rect x="583" y="95" width="3" height="2" fill="#c80000"/>
<rect x="591" y="97" width="1" height="1" fill="#555"/>
<rect x="589" y="89" width="5" height="8" fill="#17434f"/>
<rect x="590" y="90" width="3" height="6" fill="#358a9f"/>
<rect x="598" y="64" width="1" height="4" fill="#555"/>
<rect x="598" y="90" width="1" height="3" fill="#555"/>
<rect x="596" y="68" width="5" height="22" fill="#17434f"/>
<rect x="597" y="69" width="3" height="20" fill="#358a9f"/>
<rect x="605" y="59" width="1" height="6" fill="#555"/>
<rect x="605" y="69" width="1" height="1" fill="#555"/>
<rect x="603" y="65" width="5" height="4" fill="#17434f"/>
<rect x="604" y="66" width="3" height="2" fill="#358a9f"/>
<rect x="612" y="74" width="1" height="6" fill="#555"/>
<rect x="610" y="60" width="5" height="14" fill="#5c0000"/>
<rect x="611" y="61" width="3" height="12" fill="#c80000"/>
<rect x="619" y="64" width="1" height="6" fill="#555"/>
<rect x="619" y="73" width="1" height="4" fill="#555"/>
<rect x="617" y="70" width="5" height="3" fill="#17434f"/>
<rect x="618" y="71" width="3" height="1" fill="#358a9f"/>
<rect x="626" y="61" width="1" height="9" fill="#555"/>
<rect x="626" y="73" width="1" height="5" fill="#555"/>
<rect x="624" y="70" width="5" height="3" fill="#17434f"/>
<rect x="625" y="71" width="3" height="1" fill="#358a9f"/>
<rect x="633" y="60" width="1" height="3" fill="#555"/>
<rect x="631" y="63" width="5" height="9" fill="#17434f"/>
<rect x="632" y="64" width="3" height="7" fill="#358a9f"/>
<rect x="640" y="89" width="1" height="4" fill="#555"/>
<rect x="638" y="73" width="5" height="16" fill="#5c0000"/>
<rect x="639" y="74" width="3" height="14" fill="#c80000"/>
<rect x="647" y="84" width="1" height="4" fill="#555"/>
<rect x="647" y="104" width="1" height="6" fill="#555"/>
<rect x="645" y="88" width="5" height="16" fill="#5c0000"/>
<rect x="646" y="89" width="3" height="14" fill="#c80000"/>
<rect x="654" y="90" width="1" height="11" fill="#555"/>
<rect x="654" y="104" width="1" height="3" fill="#555"/>
<rect x="652" y="101" width="5" height="3" fill="#17434f"/>
<rect x="653" y="102" width="3" height="1" fill="#358a9f"/>
<rect x="661" y="98" width="1" height="3" fill="#555"/>
<rect x="659" y="101" width="5" height="7" fill="#5c0000"/>
<rect x="660" y="102" width="3" height="5" fill="#c80000"/>
<rect x="666" y="108" width="5" height="17" fill="#5c0000"/>
<rect x="667" y="109" width="3" height="15" fill="#c80000"/>
</g>
<g shape-rendering="crispEdges">
<rect x="15" y="501" width="5" height="2" fill="#1c1cff"/>
<rect x="22" y="500" width="5" height="3" fill="#1c1cff"/>
<rect x="29" y="500" width="5" height="3" fill="#1c1cff"/>
<rect x="36" y="503" width="5" height="1" fill="#1c1cff"/>
<rect x="43" y="503" width="5" height="6" fill="#1c1cff"/>
<rect x="50" y="503" width="5" height="9" fill="#1c1cff"/>
<rect x="57" y="503" width="5" height="8" fill="#1c1cff"/>
<rect x="64" y="503" width="5" height="14" fill="#1c1cff"/>
<rect x="71" y="503" width="5" height="15" fill="#1c1cff"/>
<rect x="78" y="503" width="5" height="15" fill="#1c1cff"/>
<rect x="85" y="503" width="5" height="17" fill="#1c1cff"/>
<rect x="92" y="503" width="5" height="19" fill="#1c1cff"/>
<rect x="99" y="503" width="5" height="19" fill="#1c1cff"/>
<rect x="106" y="503" width="5" height="20" fill="#1c1cff"/>
<rect x="113" y="503" width="5" height="21" fill="#1c1cff"/>
<rect x="120" y="503" width="5" height="15" fill="#1c1cff"/>
<rect x="127" y="503" width="5" height="12" fill="#1c1cff"/>
<rect x="134" y="503" width="5" height="10" fill="#1c1cff"/>
<rect x="141" y="503" width="5" height="7" fill="#1c1cff"/>
<rect x="148" y="503" width="5" height="11" fill="#1c1cff"/>
<rect x="155" y="503" width="5" height="12" fill="#1c1cff"/>
<rect x="162" y="503" width="5" height="11" fill="#1c1cff"/>
<rect x="169" y="503" width="5" height="9" fill="#1c1cff"/>
<rect x="176" y="503" width="5" height="12" fill="#1c1cff"/>
<rect x="183" y="503" width="5" height="11" fill="#1c1cff"/>
<rect x="190" y="503" width="5" height="14" fill="#1c1cff"/>
<rect x="197" y="503" width="5" height="13" fill="#1c1cff"/>
<rect x="204" y="503" width="5" height="8" fill="#1c1cff"/>
<rect x="211" y="503" width="5" height="3" fill="#1c1cff"/>
<rect x="225" y="501" width="5" height="2" fill="#1c1cff"/>
<rect x="232" y="503" width="5" height="3" fill="#1c1cff"/>
<rect x="239" y="503" width="5" height="4" fill="#1c1cff"/>
<rect x="246" y="503" width="5" height="3" fill="#1c1cff"/>
<rect x="253" y="500" width="5" height="3" fill="#1c1cff"/>
<rect x="260" y="503" width="5" height="2" fill="#1c1cff"/>
<rect x="267" y="503" width="5" height="2" fill="#1c1cff"/>
<rect x="274" y="502" width="5" height="1" fill="#1c1cff"/>
<rect x="281" y="499" width="5" height="4" fill="#1c1cff"/>
<rect x="288" y="490" width="5" height="13" fill="#1c1cff"/>
<rect x="295" y="482" width="5" height="21" fill="#1c1cff"/>
<rect x="302" y="481" width="5" height="22" fill="#1c1cff"/>
<rect x="309" y="482" width="5" height="21" fill="#1c1cff"/>
<rect x="316" y="473" width="5" height="30" fill="#1c1cff"/>
<rect x="323" y="468" width="5" height="35" fill="#1c1cff"/>
<rect x="330" y="467" width="5" height="36" fill="#1c1cff"/>
<rect x="337" y="466" width="5" height="37" fill="#1c1cff"/>
<rect x="344" y="471" width="5" height="32" fill="#1c1cff"/>
<rect x="351" y="471" width="5" height="32" fill="#1c1cff"/>
<rect x="358" y="469" width="5" height="34" fill="#1c1cff"/>
<rect x="365" y="469" width="5" height="34" fill="#1c1cff"/>
<rect x="372" y="467" width="5" height="36" fill="#1c1cff"/>
<rect x="379" y="469" width="5" height="34" fill="#1c1cff"/>
<rect x="386" y="471" width="5" height="32" fill="#1c1cff"/>
<rect x="393" y="475" width="5" height="28" fill="#1c1cff"/>
<rect x="400" y="481" width="5" height="22" fill="#1c1cff"/>
<rect x="407" y="486" width="5" height="17" fill="#1c1cff"/>
<rect x="414" y="495" width="5" height="8" fill="#1c1cff"/>
<rect x="421" y="496" width="5" height="7" fill="#1c1cff"/>
<rect x="435" y="503" width="5" height="8" fill="#1c1cff"/>
<rect x="442" y="503" width="5" height="14" fill="#1c1cff"/>
<rect x="449" y="503" width="5" height="15" fill="#1c1cff"/>
<rect x="456" y="503" width="5" height="1" fill="#1c1cff"/>
<rect x="463" y="495" width="5" height="8" fill="#1c1cff"/>
<rect x="470" y="492" width="5" height="11" fill="#1c1cff"/>
<rect x="477" y="491" width="5" height="12" fill="#1c1cff"/>
<rect x="484" y="484" width="5" height="19" fill="#1c1cff"/>
<rect x="491" y="479" width="5" height="24" fill="#1c1cff"/>
<rect x="498" y="476" width="5" height="27" fill="#1c1cff"/>
<rect x="505" y="476" width="5" height="27" fill="#1c1cff"/>
<rect x="512" y="473" width="5" height="30" fill="#1c1cff"/>
<rect x="519" y="472" width="5" height="31" fill="#1c1cff"/>
<rect x="526" y="472" width="5" height="31" fill="#1c1cff"/>
<rect x="533" y="476" width="5" height="27" fill="#1c1cff"/>
<rect x="540" y="475" width="5" height="28" fill="#1c1cff"/>
<rect x="547" y="476" width="5" height="27" fill="#1c1cff"/>
<rect x="554" y="483" width="5" height="20" fill="#1c1cff"/>
<rect x="561" y="484" width="5" height="19" fill="#1c1cff"/>
<rect x="568" y="485" width="5" height="18" fill="#1c1cff"/>
<rect x="575" y="486" width="5" height="17" fill="#1c1cff"/>
<rect x="582" y="489" width="5" height="14" fill="#1c1cff"/>
<rect x="589" y="491" width="5" height="12" fill="#1c1cff"/>
<rect x="596" y="489" width="5" height="14" fill="#1c1cff"/>
<rect x="603" y="489" width="5" height="14" fill="#1c1cff"/>
<rect x="610" y="493" width="5" height="10" fill="#1c1cff"/>
<rect x="617" y="496" width="5" height="7" fill="#1c1cff"/>
<rect x="624" y="500" width="5" height="3" fill="#1c1cff"/>
<rect x="631" y="502" width="5" height="1" fill="#1c1cff"/>
<rect x="638" y="503" width="5" height="8" fill="#1c1cff"/>
<rect x="645" y="503" width="5" height="18" fill="#1c1cff"/>
<rect x="652" y="503" width="5" height="25" fill="#1c1cff"/>
<rect x="659" y="503" width="5" height="30" fill="#1c1cff"/>
<rect x="666" y="503" width="5" height="37" fill="#1c1cff"/>
</g>
<polyline points="17,529.6 24,528.6 31,528.4 38,528.4 45,529.6 52,531.3 59,533.4 66,536.5 73,540.2 80,544.6 87,548.4 94,552.7 101,558 108,563.2 115,567.5 122,571.3 129,574 136,577 143,578.3 150,581.2 157,584 164,587.5 171,589.7 178,592.2 185,595 192,597.8 199,600.5 206,603 213,604.4 220,604.5 227,603.8 234,604.6 241,605.3 248,605.4 255,605.4 262,605.4 269,605.4 276,605.3 283,604 290,601.6 297,596 304,590.8 311,585.2 318,578 325,569 332,559.9 339,550.8 346,542.4 353,534 360,526.2 367,516.3 374,507.5 381,499.6 388,491.5 395,484.2 402,478.5 409,475 416,472.3 423,470.5 430,470 437,472 444,475.5 451,478.3 458,479.4 465,477.5 472,474.8 479,471 486,466.3 493,461 500,454.2 507,446.8 514,439.5 521,430.5 528,421.8 535,416.5 542,409.5 549,403 556,397.5 563,392.8 570,387.7 577,383.6 584,380 591,377.7 598,374.1 605,369 612,367.3 619,365.8 626,364.3 633,363.6 640,364 647,367.9 654,373.6 661,382.1 668,392.9" fill="none" stroke="#b0b0b0" stroke-width="1"/>
<polyline points="17,527.4 24,524.4 31,525.3 38,529.2 45,535 52,540 59,541.3 66,550.8 73,555.2 80,558.4 87,564.5 94,570.5 101,576.4 108,581.2 115,588.3 122,586.5 129,586.5 136,587.3 143,585.5 150,592.3 157,596.3 164,597.5 171,598.5 178,604.1 185,605.4 192,612.2 199,614.3 206,611.2 213,606.8 220,603.4 227,601.5 234,607.6 241,609.6 248,608.2 255,602.5 262,607.4 269,607.5 276,604.8 283,600.2 290,588.6 297,575 304,567 311,563.5 318,549.6 325,533 332,523 339,513.8 346,508.3 353,501.5 360,489.7 367,482.6 374,471 381,464.5 388,460 395,456.3 402,456.3 409,456.3 416,463.5 423,462.3 430,470 437,478 444,489.3 451,492.7 458,480.4 465,469.5 472,462.3 479,458.7 486,447.5 493,435.5 500,425.8 507,419.6 514,409 521,400 528,392.3 535,389 542,381 549,376 556,376.5 563,373.3 570,369.7 577,366.3 584,365.4 591,365.4 598,358.7 605,355.4 612,356.3 619,357.6 626,360 633,362.1 640,372.1 647,387.1 654,400 661,414.3 668,429.3" fill="none" stroke="#067a06" stroke-width="1.05"/>
<circle cx="234.4" cy="607.7" r="4.4" fill="#006e00"/>
<circle cx="262.3" cy="607.4" r="4.4" fill="#006e00"/>
<circle cx="283.1" cy="600.2" r="4.4" fill="#006e00"/>
<circle cx="290.4" cy="588.5" r="4.4" fill="#006e00"/>
<circle cx="458.4" cy="480.3" r="4.4" fill="#ff1010"/>
<circle cx="465.5" cy="469.5" r="4.4" fill="#ff1010"/>
<text x="674" y="71" font-size="11" fill="#000" stroke="#000" stroke-width="0.1">51</text>
<text x="674" y="99" font-size="11" fill="#000" stroke="#000" stroke-width="0.1">50</text>
<text x="674" y="155" font-size="11" fill="#000" stroke="#000" stroke-width="0.1">48</text>
<text x="674" y="183" font-size="11" fill="#000" stroke="#000" stroke-width="0.1">47</text>
<text x="674" y="211" font-size="11" fill="#000" stroke="#000" stroke-width="0.1">46</text>
<text x="674" y="240" font-size="11" fill="#000" stroke="#000" stroke-width="0.1">45</text>
<text x="674" y="268" font-size="11" fill="#000" stroke="#000" stroke-width="0.1">44</text>
<text x="674" y="296" font-size="11" fill="#000" stroke="#000" stroke-width="0.1">43</text>
<text x="674" y="324" font-size="11" fill="#000" stroke="#000" stroke-width="0.1">42</text>
<text x="674" y="394" font-size="11" fill="#000" stroke="#000" stroke-width="0.1">1</text>
<text x="674" y="440" font-size="11" fill="#000" stroke="#000" stroke-width="0.1">0,6</text>
<text x="674" y="485" font-size="11" fill="#000" stroke="#000" stroke-width="0.1">0,2</text>
<text x="674" y="530" font-size="11" fill="#000" stroke="#000" stroke-width="0.1">-0,2</text>
<text x="674" y="575" font-size="11" fill="#000" stroke="#000" stroke-width="0.1">-0,6</text>
<text x="674" y="621" font-size="11" fill="#000" stroke="#000" stroke-width="0.1">-1</text>
<path d="M672 124.5 L678 119 H733 V130 H678 Z" fill="#1a1a1a"/>
<text x="677" y="127.8" font-size="11" fill="#fff">48,96</text>
<text x="18" y="43" font-size="11" fill="#2a2a2a" textLength="123" lengthAdjust="spacingAndGlyphs">BRV6=ФОРТС(BR-10.16)</text>
<text x="18" y="339" font-size="11" fill="#3a3aff" textLength="163.3" lengthAdjust="spacingAndGlyphs">MACDDivergence(BRV6=ФОРТС)</text>
<g shape-rendering="crispEdges">
<rect x="17" y="623" width="1" height="17" fill="#707070"/>
<rect x="101" y="623" width="1" height="27" fill="#707070"/>
<rect x="164" y="623" width="1" height="27" fill="#707070"/>
<rect x="227" y="623" width="1" height="27" fill="#707070"/>
<rect x="290" y="623" width="1" height="27" fill="#707070"/>
<rect x="353" y="623" width="1" height="27" fill="#707070"/>
<rect x="416" y="623" width="1" height="27" fill="#707070"/>
<rect x="479" y="623" width="1" height="27" fill="#707070"/>
<rect x="542" y="623" width="1" height="27" fill="#707070"/>
<rect x="605" y="623" width="1" height="27" fill="#707070"/>
<rect x="668" y="623" width="1" height="17" fill="#707070"/>
</g>
<text x="21" y="635" font-size="11" fill="#000" stroke="#000" stroke-width="0.1">20:00</text>
<text x="105" y="635" font-size="11" fill="#000" stroke="#000" stroke-width="0.1">20:00</text>
<text x="105" y="651" font-size="11" fill="#000" stroke="#000" stroke-width="0.1">25/07/16</text>
<text x="168" y="635" font-size="11" fill="#000" stroke="#000" stroke-width="0.1">08:00</text>
<text x="168" y="651" font-size="11" fill="#000" stroke="#000" stroke-width="0.1">28/07/16</text>
<text x="231" y="635" font-size="11" fill="#000" stroke="#000" stroke-width="0.1">12:00</text>
<text x="231" y="651" font-size="11" fill="#000" stroke="#000" stroke-width="0.1">01/08/16</text>
<text x="294" y="635" font-size="11" fill="#000" stroke="#000" stroke-width="0.1">16:00</text>
<text x="294" y="651" font-size="11" fill="#000" stroke="#000" stroke-width="0.1">03/08/16</text>
<text x="357" y="635" font-size="11" fill="#000" stroke="#000" stroke-width="0.1">20:00</text>
<text x="357" y="651" font-size="11" fill="#000" stroke="#000" stroke-width="0.1">05/08/16</text>
<text x="420" y="635" font-size="11" fill="#000" stroke="#000" stroke-width="0.1">08:00</text>
<text x="420" y="651" font-size="11" fill="#000" stroke="#000" stroke-width="0.1">10/08/16</text>
<text x="483" y="635" font-size="11" fill="#000" stroke="#000" stroke-width="0.1">12:00</text>
<text x="483" y="651" font-size="11" fill="#000" stroke="#000" stroke-width="0.1">12/08/16</text>
<text x="546" y="635" font-size="11" fill="#000" stroke="#000" stroke-width="0.1">16:00</text>
<text x="546" y="651" font-size="11" fill="#000" stroke="#000" stroke-width="0.1">16/08/16</text>
<text x="609" y="635" font-size="11" fill="#000" stroke="#000" stroke-width="0.1">20:00</text>
<text x="609" y="651" font-size="11" fill="#000" stroke="#000" stroke-width="0.1">18/08/16</text>
<text x="672" y="635" font-size="11" fill="#000" stroke="#000" stroke-width="0.1">08:00</text>
<path d="M17 640 H68 L75 647.5 L68 655 H17 Z" fill="#000"/>
<text x="21" y="651" font-size="11" fill="#fff">20/07/16</text>
<path d="M668 640 H717 V655 H668 Z" fill="#000"/>
<path d="M717 639.5 L726 647.75 L717 656 Z" fill="#ff0000"/>
<text x="672" y="651" font-size="11" fill="#fff">23/08/16</text>
<path d="M659.5 337.5 L663.5 333.5 L667.5 337.5" fill="none" stroke="#000" stroke-width="2"/><path d="M659.5 341.5 L663.5 337.5 L667.5 341.5" fill="none" stroke="#000" stroke-width="2"/>
<path d="M659.5 41.5 L663.5 37.5 L667.5 41.5" fill="none" stroke="#000" stroke-width="2"/><path d="M659.5 45.5 L663.5 41.5 L667.5 45.5" fill="none" stroke="#000" stroke-width="2"/>
<circle cx="419.5" cy="43.5" r="10" fill="#dcdcdc" stroke="#c4c4c4" stroke-width="1.6"/>
<circle cx="444.5" cy="43.5" r="10" fill="#dcdcdc" stroke="#c4c4c4" stroke-width="1.6"/>
<circle cx="469.5" cy="43.5" r="10" fill="#dcdcdc" stroke="#c4c4c4" stroke-width="1.6"/>
<circle cx="494.5" cy="43.5" r="10" fill="#dcdcdc" stroke="#c4c4c4" stroke-width="1.6"/>
<circle cx="519.5" cy="43.5" r="10" fill="#dcdcdc" stroke="#c4c4c4" stroke-width="1.6"/>
<circle cx="544.5" cy="43.5" r="10" fill="#dcdcdc" stroke="#c4c4c4" stroke-width="1.6"/>
<circle cx="569.5" cy="43.5" r="10" fill="#dcdcdc" stroke="#c4c4c4" stroke-width="1.6"/>
<circle cx="594.5" cy="43.5" r="10" fill="#dcdcdc" stroke="#c4c4c4" stroke-width="1.6"/>
<circle cx="619.5" cy="43.5" r="10" fill="#dcdcdc" stroke="#c4c4c4" stroke-width="1.6"/>
<circle cx="644.5" cy="43.5" r="10" fill="#dcdcdc" stroke="#c4c4c4" stroke-width="1.6"/>
<path d="M412.0 43.5 L419.0 37 V50 Z M420.0 43.5 L427.0 37 V50 Z" fill="#5a5a5a"/>
<path d="M440.5 43.5 L448.0 37 V50 Z" fill="#5a5a5a"/>
<path d="M473.5 43.5 L466.0 37 V50 Z" fill="#5a5a5a"/>
<path d="M502.0 43.5 L495.0 37 V50 Z M494.0 43.5 L487.0 37 V50 Z" fill="#5a5a5a"/>
<circle cx="519.5" cy="43.5" r="7" fill="none" stroke="#5a5a5a" stroke-width="1.2"/><path d="M515.0 43.5 H524.0 M519.5 39 V48" stroke="#5a5a5a" stroke-width="2"/>
<circle cx="544.5" cy="43.5" r="7" fill="none" stroke="#5a5a5a" stroke-width="1.2"/><path d="M540.0 43.5 H549.0" stroke="#5a5a5a" stroke-width="2"/>
<circle cx="571.4" cy="41.4" r="3.9" fill="none" stroke="#5a5a5a" stroke-width="1.9"/><path d="M568.6 44.4 L563 49.6" stroke="#5a5a5a" stroke-width="2"/><path d="M563 37 V50 M576.8 37 V50" stroke="#5a5a5a" stroke-width="1.3"/>
<path d="M594.5 35 V51.5" stroke="#5a5a5a" stroke-width="2"/><path d="M587 43.5 H590 M599 43.5 H602" stroke="#5a5a5a" stroke-width="1.3"/><path d="M593.3 43.5 L589.3 40 V47 Z M595.7 43.5 L599.7 40 V47 Z" fill="#5a5a5a"/>
<rect x="617.6" y="36.8" width="3.8" height="12.8" fill="none" stroke="#5a5a5a" stroke-width="1.3"/><path d="M619.5 34.5 V36.5 M619.5 50 V52" stroke="#5a5a5a" stroke-width="1.2"/><path d="M611 43.5 H614 M625 43.5 H628" stroke="#5a5a5a" stroke-width="1.3"/><path d="M616.8 43.5 L612.8 40 V47 Z M622.2 43.5 L626.2 40 V47 Z" fill="#5a5a5a"/>
<path d="M640.5 37 L647.5 43.5 L640.5 50 Z" fill="#5a5a5a"/><path d="M649.5 37 V50" stroke="#5a5a5a" stroke-width="1.6"/>
<rect x="8" y="8" width="13" height="13" fill="#00aaee"/><rect x="8.5" y="8.5" width="12" height="12" fill="none" stroke="#12c2ff" stroke-width="1"/>
<text x="30.3" y="21.4" font-size="16.8" fill="#f5a300" textLength="110.5" lengthAdjust="spacingAndGlyphs">BRV6=ФОРТС</text>
<text x="153.6" y="21.4" font-size="16.8" fill="#f5a300">H4</text>
<g shape-rendering="crispEdges">
<rect x="184" y="5" width="1" height="21" fill="#3a3a3a"/>
<rect x="208" y="5" width="1" height="21" fill="#3a3a3a"/>
<rect x="235" y="5" width="1" height="21" fill="#3a3a3a"/>
<rect x="262" y="5" width="1" height="21" fill="#3a3a3a"/>
<rect x="289" y="5" width="1" height="21" fill="#3a3a3a"/>
<rect x="316" y="5" width="1" height="21" fill="#3a3a3a"/>
<rect x="660" y="5" width="1" height="21" fill="#3a3a3a"/>
</g>
<g fill="#9a9a9a" stroke="#fff" stroke-width="1.3">
<path d="M189.5 10.8 V24" /><path d="M195.5 7 V20"/><path d="M201.5 5.8 V19"/>
<rect x="187.5" y="13.3" width="4" height="8.2"/><rect x="193.5" y="9.5" width="4" height="8"/><rect x="199.5" y="8.5" width="4" height="8"/>
</g>
<g transform="translate(223.4,15.8) rotate(-45)"><rect x="-5.5" y="-3" width="10.5" height="6" fill="#1a1a1a" stroke="#e0e0e0" stroke-width="1.1"/><rect x="5" y="-3.5" width="3.5" height="7" fill="#b0b0b0"/><path d="M-5.5 -3 L-9.5 0 L-5.5 3 Z" fill="#d0d0d0"/><path d="M-4 -1 H4 M-4 1.2 H4" stroke="#bbb" stroke-width="0.9" stroke-dasharray="1.2 0.8"/></g>
<g stroke="#fff" stroke-width="1" fill="#888" shape-rendering="crispEdges">
<path d="M241 11.5 H259" stroke="#777"/><path d="M241 19.5 H259" stroke="#777"/>
<rect x="242" y="12" width="2" height="3"/>
<rect x="244.5" y="9" width="2" height="6"/>
<rect x="247" y="10" width="2" height="5"/>
<rect x="249.5" y="15" width="2" height="3"/>
<rect x="252" y="15" width="2" height="6"/>
<rect x="254.5" y="15" width="2" height="2"/>
<rect x="257" y="9" width="2" height="6"/>
</g>
<path d="M271.6 6.6 V22 L274.8 19 L278.4 23.8 L281.2 22.3 L278.4 18.2 H283 Z" fill="#1a1a1a" stroke="#fff" stroke-width="1.1" stroke-linejoin="miter"/>
<g fill="#fff" shape-rendering="crispEdges"><rect x="296" y="7" width="3" height="3"/><rect x="296" y="11" width="5" height="3"/><rect x="296" y="15" width="8" height="3"/><rect x="304" y="16" width="8" height="1"/><rect x="296" y="19" width="5" height="3"/></g>
<circle cx="648.5" cy="15" r="8.8" fill="#fff"/><path d="M652 11.2 C651 9.6 645.6 9.2 645.3 12.4 C645 15 652 14.6 652 17.8 C652 21 646.2 21 645 19" fill="none" stroke="#000" stroke-width="2.5"/><path d="M648.6 7 V23" stroke="#000" stroke-width="1.8"/>
<path d="M672.5 9.5 H676.5 V16.5 H679.5 L674.5 21.5 L669.5 16.5 H672.5 Z" fill="#1c1c1c" stroke="#fff" stroke-width="1.2"/>
<rect x="695.5" y="10.5" width="13" height="11" rx="1" fill="#a0a0a0" stroke="#000" stroke-width="1"/><rect x="698" y="15" width="8" height="3.5" fill="#111"/>
<path d="M719 10.5 L729 20.5 M729 10.5 L719 20.5" stroke="#000" stroke-width="5.2"/><path d="M719 10.5 L729 20.5 M729 10.5 L719 20.5" stroke="#a4a4a4" stroke-width="3.3"/>
</svg></body></html>
